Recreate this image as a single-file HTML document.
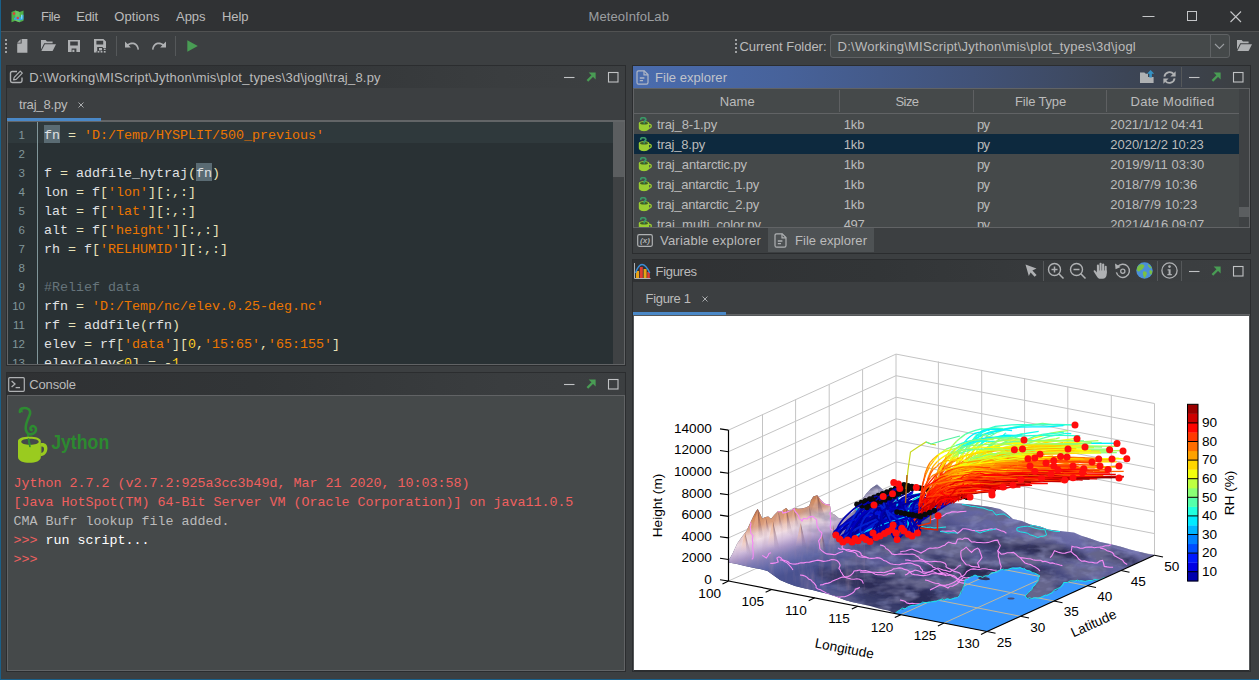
<!DOCTYPE html>
<html><head><meta charset="utf-8"><title>MeteoInfoLab</title>
<style>
*{box-sizing:border-box;margin:0;padding:0}
html,body{width:1259px;height:680px;overflow:hidden;background:#3c3f41}
body{position:relative;font-family:"Liberation Sans","Noto Sans CJK SC",sans-serif;font-size:13px;color:#bbbbbb}
.abs{position:absolute}
.t{position:absolute;white-space:pre;line-height:1}
.mono{font-family:"Liberation Mono","DejaVu Sans Mono",monospace}
.code{position:absolute;white-space:pre;font-family:"Liberation Mono","DejaVu Sans Mono",monospace;font-size:13.33px;line-height:19px;color:#e0e2e4}
.s{color:#ec7600}.c{color:#66747b}.n{color:#ffcd22}.o{color:#e8e2b7}.m{background:#5a6b73;padding:3px 0 0}
.r{color:#f0605f}.w{color:#ffffff}.g{color:#bbbbbb}
</style></head>
<body>
<div class="abs" style="left:1px;top:0px;width:1258px;height:31px;background:#303234;"></div>
<div class="abs" style="left:1px;top:31px;width:1258px;height:1px;background:#515252;"></div>
<div class="abs" style="left:0px;top:0px;width:1px;height:680px;background:#1a5f88;"></div>
<div class="abs" style="left:0px;top:679px;width:1259px;height:1px;background:#1a5f88;"></div>
<svg class="abs" style="left:11px;top:10px;" width="13" height="13" viewBox="0 0 13 13">
<path d="M0.5 2 L4.3 0.6 L8.6 2 L12.5 0.6 L12.5 10.8 L8.6 12.3 L4.3 10.8 L0.5 12.3Z" fill="#4fb04a"/>
<path d="M4.3 0.6 L8.6 2 L8.6 12.3 L4.3 10.8Z" fill="#6cc763"/>
<path d="M3 8 L6 6.5 L9 7.5 L12.5 4.5 L12.5 9.5 L8.6 10.5 L4.3 9.6 L3 10Z" fill="#35a7e0"/>
<circle cx="3" cy="3.6" r="1.3" fill="#e0413a"/><circle cx="6.8" cy="8" r="1.2" fill="#e0413a"/>
<path d="M10 5 L11.3 4.2 L11.3 8.6 L10 9Z" fill="#7fd7f5"/>
</svg>
<span class="t " style="left:41.00px;top:10.00px;font-size:13.00px;letter-spacing:-0.487px;">File</span>
<span class="t " style="left:76.30px;top:10.00px;font-size:13.00px;letter-spacing:-0.175px;">Edit</span>
<span class="t " style="left:114.30px;top:10.00px;font-size:13.00px;letter-spacing:0.057px;">Options</span>
<span class="t " style="left:176.00px;top:10.00px;font-size:13.00px;letter-spacing:-0.033px;">Apps</span>
<span class="t " style="left:222.00px;top:10.00px;font-size:13.00px;letter-spacing:-0.059px;">Help</span>
<span class="t " style="left:588.50px;top:10.00px;font-size:13.00px;color:#9c9fa1;letter-spacing:0.083px;">MeteoInfoLab</span>
<svg class="abs" style="left:1140px;top:8px;" width="110" height="18" viewBox="0 0 110 18">
<path d="M2.5 8.5H14.5" stroke="#c4c6c8" stroke-width="1" fill="none"/>
<rect x="47.5" y="3.5" width="9" height="9" stroke="#c4c6c8" stroke-width="1" fill="none"/>
<path d="M90.5 3.5L101 14M101 3.5L90.500 14" stroke="#c4c6c8" stroke-width="1.1" fill="none"/>
</svg>
<svg class="abs" style="left:5px;top:39px;" width="2" height="14" viewBox="0 0 2 14"><rect x="0" y="0" width="2" height="2" fill="#a0a2a4"/><rect x="0" y="4" width="2" height="2" fill="#a0a2a4"/><rect x="0" y="8" width="2" height="2" fill="#a0a2a4"/><rect x="0" y="12" width="2" height="2" fill="#a0a2a4"/></svg>
<svg class="abs" style="left:17px;top:39px;" width="11" height="14" viewBox="0 0 11 14"><path d="M4.6 0H10.4V13.8H0.2V4.6H4.6Z" fill="#afb1b3"/><path d="M0.2 3.7L3.7 0.2V3.7Z" fill="#afb1b3"/></svg>
<svg class="abs" style="left:41px;top:40px;" width="15" height="11" viewBox="0 0 15 11"><path d="M0 0H4.6L6 1.4H11.6V3.2H3.2L0 9.4Z" fill="#afb1b3"/><path d="M3.8 4.2H15L11.6 11H0.4Z" fill="#afb1b3"/></svg>
<svg class="abs" style="left:68px;top:40px;" width="12" height="12" viewBox="0 0 12 12"><path fill-rule="evenodd" d="M0 0H12V12H0ZM2.2 1.6V5.6H9.8V1.6ZM3.6 8.6V12H8.4V8.6Z" fill="#afb1b3"/><rect x="4.4" y="9.8" width="2" height="2.2" fill="#afb1b3"/></svg>
<svg class="abs" style="left:94px;top:39px;" width="12" height="14" viewBox="0 0 12 14"><path fill-rule="evenodd" d="M0 0H9.4L12 2.6V9H8.8V8H3.2V12H2.6V13.6H0ZM2.4 1.8V5.4H9.2V1.8Z" fill="#afb1b3"/><rect x="5" y="9" width="3" height="2.4" fill="#afb1b3"/><rect x="3.6" y="12" width="1.8" height="1.6" fill="#afb1b3"/><rect x="6.6" y="12" width="1.8" height="1.6" fill="#afb1b3"/><rect x="9.8" y="12" width="1.8" height="1.6" fill="#afb1b3"/><rect x="9.8" y="9.6" width="1.8" height="1.4" fill="#afb1b3"/></svg>
<div class="abs" style="left:116px;top:36px;width:1px;height:20px;background:#55585a;"></div>
<svg class="abs" style="left:125px;top:41px;" width="14" height="10" viewBox="0 0 14 10"><path d="M0 0.6V6.4H5.8L3.7 4.3C5.6 2.9 8.6 2.6 10.6 4.4C11.8 5.5 12.3 7 12.5 8.8L14 8.4C13.7 6.1 12.9 4.3 11.5 3.1C9 0.9 5.1 1.2 2.5 3.1Z" fill="#afb1b3"/></svg>
<svg class="abs" style="left:152px;top:41px;" width="14" height="10" viewBox="0 0 14 10"><g transform="translate(14,0) scale(-1,1)"><path d="M0 0.6V6.4H5.8L3.7 4.3C5.6 2.9 8.6 2.6 10.6 4.4C11.8 5.5 12.3 7 12.5 8.8L14 8.4C13.7 6.1 12.9 4.3 11.5 3.1C9 0.9 5.1 1.2 2.5 3.1Z" fill="#afb1b3"/></g></svg>
<div class="abs" style="left:175px;top:36px;width:1px;height:20px;background:#55585a;"></div>
<svg class="abs" style="left:187px;top:40px;" width="11" height="12" viewBox="0 0 11 12"><path d="M0.3 0.2L10.8 6L0.3 11.8Z" fill="#499c54"/></svg>
<svg class="abs" style="left:735px;top:39px;" width="2" height="14" viewBox="0 0 2 14"><rect x="0" y="0" width="2" height="2" fill="#a0a2a4"/><rect x="0" y="4" width="2" height="2" fill="#a0a2a4"/><rect x="0" y="8" width="2" height="2" fill="#a0a2a4"/><rect x="0" y="12" width="2" height="2" fill="#a0a2a4"/></svg>
<span class="t " style="left:739.50px;top:40.00px;font-size:13.00px;letter-spacing:-0.028px;">Current Folder:</span>
<div class="abs" style="left:830px;top:34px;width:400px;height:24px;background:#45494a;border:1px solid #5f6264;border-radius:3px"></div>
<div class="abs" style="left:1210px;top:35px;width:1px;height:22px;background:#5f6264;"></div>
<span class="t " style="left:837.50px;top:40.00px;font-size:13.00px;letter-spacing:0.258px;">D:\Working\MIScript\Jython\mis\plot_types\3d\jogl</span>
<svg class="abs" style="left:1214px;top:43px;" width="11" height="7" viewBox="0 0 11 7"><path d="M1 1L5.5 5.5L10 1" stroke="#9a9da1" stroke-width="1.1" fill="none"/></svg>
<svg class="abs" style="left:1237px;top:40px;" width="15" height="11" viewBox="0 0 15 11"><path d="M0 0H4.6L6 1.4H11.6V3.2H3.2L0 9.4Z" fill="#afb1b3"/><path d="M3.8 4.2H15L11.6 11H0.4Z" fill="#afb1b3"/></svg>
<div class="abs" style="left:6px;top:65px;width:620px;height:301px;background:#3c3f41;border:1px solid #2b2d2f"></div>
<div class="abs" style="left:7px;top:66px;width:618px;height:22px;background:linear-gradient(90deg,#2f3133 0%,#323537 40%,#3a3d3f 80%,#3c3f41 100%)"></div>
<svg class="abs" style="left:9px;top:69px;" width="15" height="15" viewBox="0 0 15 15">
<path d="M8 2.5H3.2Q1.5 2.5 1.5 4.2V11.8Q1.5 13.5 3.2 13.5H11.3Q13 13.5 13 11.8V8.5" stroke="#afb1b3" stroke-width="1.4" fill="none"/>
<path d="M4.6 10.9L5.2 8.3L11.3 2.2L13.3 4.2L7.2 10.3Z" stroke="#afb1b3" stroke-width="1.2" fill="none" stroke-linejoin="round"/>
</svg>
<span class="t " style="left:29.30px;top:71.00px;font-size:13.00px;letter-spacing:0.206px;">D:\Working\MIScript\Jython\mis\plot_types\3d\jogl\traj_8.py</span>
<svg class="abs" style="left:564px;top:70px;" width="56" height="14" viewBox="0 0 56 14">
<path d="M0 7.5H10.5" stroke="#c0c2c4" stroke-width="1.1" fill="none"/>
<path d="M23.4 10.9L29.6 4.7" stroke="#499c54" stroke-width="2.3" fill="none"/><path d="M24.6 2.6H31.6V9.6Z" fill="#499c54"/>
<rect x="44.5" y="2.5" width="9.5" height="9.5" stroke="#c0c2c4" stroke-width="1.1" fill="none"/>
</svg>
<span class="t " style="left:19.00px;top:98.00px;font-size:13.00px;letter-spacing:-0.173px;">traj_8.py</span>
<svg class="abs" style="left:77px;top:101px;" width="8" height="8" viewBox="0 0 8 8"><path d="M1.5 1.5L6.5 6.5M6.5 1.5L1.5 6.5" stroke="#a9abad" stroke-width="1" fill="none"/></svg>
<div class="abs" style="left:7px;top:120px;width:618px;height:2px;background:#626567;"></div>
<div class="abs" style="left:7px;top:118px;width:94px;height:3px;background:#4a88c7;"></div>
<div class="abs" style="left:7px;top:122px;width:618px;height:243px;background:#293134;border:1px solid #616365;border-top:none"></div>
<div class="abs" style="left:8px;top:122px;width:605px;height:20.5px;background:#2f393c;"></div>
<div class="abs" style="left:37px;top:122px;width:1px;height:242px;background:#81969a;"></div>
<div class="abs" style="left:613px;top:122px;width:11px;height:242px;background:#3f4244;"></div>
<div class="abs" style="left:613px;top:122px;width:11px;height:55px;background:#5b5e60;"></div>
<div class="abs" style="left:8px;top:122px;width:605px;height:242px;overflow:hidden">
<div class="code" style="left:36px;top:3.6px"><span class="m">fn</span> <span class="o">=</span> <span class="s">'D:/Temp/HYSPLIT/500_previous'</span>

f <span class="o">=</span> addfile_hytraj<span class="o">(</span><span class="m">fn</span><span class="o">)</span>
lon <span class="o">=</span> f<span class="o">[</span><span class="s">'lon'</span><span class="o">][:,:]</span>
lat <span class="o">=</span> f<span class="o">[</span><span class="s">'lat'</span><span class="o">][:,:]</span>
alt <span class="o">=</span> f<span class="o">[</span><span class="s">'height'</span><span class="o">][:,:]</span>
rh <span class="o">=</span> f<span class="o">[</span><span class="s">'RELHUMID'</span><span class="o">][:,:]</span>

<span class="c">#Relief data</span>
rfn <span class="o">=</span> <span class="s">'D:/Temp/nc/elev.0.25-deg.nc'</span>
rf <span class="o">=</span> addfile<span class="o">(</span>rfn<span class="o">)</span>
elev <span class="o">=</span> rf<span class="o">[</span><span class="s">'data'</span><span class="o">][</span><span class="n">0</span><span class="o">,</span><span class="s">'15:65'</span><span class="o">,</span><span class="s">'65:155'</span><span class="o">]</span>
elev<span class="o">[</span>elev<span class="o">&lt;</span><span class="n">0</span><span class="o">]</span> <span class="o">=</span> <span class="o">-</span><span class="n">1</span></div>
<div class="code" style="left:0;top:3.5px;width:17px;text-align:right;font-family:'Liberation Sans',sans-serif;font-size:11.5px;color:#81969a">1
2
3
4
5
6
7
8
9
10
11
12
13</div>
</div>
<div class="abs" style="left:6px;top:372px;width:620px;height:300px;background:#3c3f41;border:1px solid #2b2d2f"></div>
<div class="abs" style="left:7px;top:373px;width:618px;height:22px;background:linear-gradient(90deg,#2f3133 0%,#323537 40%,#3a3d3f 80%,#3c3f41 100%)"></div>
<svg class="abs" style="left:8px;top:376.5px;" width="17" height="15" viewBox="0 0 17 15">
<rect x="0.7" y="0.7" width="15.6" height="13.6" rx="1" stroke="#afb1b3" stroke-width="1.2" fill="none"/>
<path d="M3.6 4L7 7L3.6 10" stroke="#afb1b3" stroke-width="1.3" fill="none"/><path d="M7.6 10.6H12" stroke="#afb1b3" stroke-width="1.3" fill="none"/>
</svg>
<span class="t " style="left:29.30px;top:377.90px;font-size:13.00px;letter-spacing:-0.171px;">Console</span>
<svg class="abs" style="left:564px;top:377px;" width="56" height="14" viewBox="0 0 56 14">
<path d="M0 7.5H10.5" stroke="#c0c2c4" stroke-width="1.1" fill="none"/>
<path d="M23.4 10.9L29.6 4.7" stroke="#499c54" stroke-width="2.3" fill="none"/><path d="M24.6 2.6H31.6V9.6Z" fill="#499c54"/>
<rect x="44.5" y="2.5" width="9.5" height="9.5" stroke="#c0c2c4" stroke-width="1.1" fill="none"/>
</svg>
<div class="abs" style="left:7px;top:395px;width:618px;height:276px;background:#45494a;border:1px solid #616365"></div>
<svg class="abs" style="left:14px;top:403px;" width="100" height="62" viewBox="0 0 100 62">
<path d="M5.9 8.9C5.7 5.6 9.3 4.4 12.6 5.3C16.6 6.4 16.8 9.6 15.3 12.8C13.6 16.6 11.5 21 11.7 25.4C11.9 29 13.6 31.6 16.6 31.4C20.200 31.100 22.600 28.500 21.900 25.500C21.300 23 18.600 22.300 17.100 23.800C15.900 25 16.400 26.700 17.600 27.100" stroke="#2e8b32" stroke-width="2.6" fill="none" stroke-linecap="round"/>
<path d="M5.2 8.6L8.4 6.2L8.8 9.4Z" fill="#2e8b32"/>
<path d="M13.900 30.500C13.700 34.500 15.300 37.500 15.900 43.500" stroke="#2e8b32" stroke-width="1.900" fill="none" stroke-linecap="round"/>
<path fill-rule="evenodd" d="M4 38C4 35.200 9 33.700 15.400 33.700C21.800 33.700 26.800 35.200 26.800 38V54C26.800 58 21.500 59.800 15.400 59.800C9.300 59.800 4 58 4 54ZM7.300 38.700C7.300 40.600 11 41.700 16 41.700C21 41.700 24.700 40.600 24.700 38.700C24.700 36.900 21 35.800 16 35.800C11 35.800 7.300 36.900 7.300 38.700Z" fill="#9acb1f"/>
<path fill-rule="evenodd" d="M26.500 40.200C30.500 39.200 33.600 41.300 33.400 45.800C33.200 50.300 30.300 53 26.500 53.200ZM27.400 43.600V49.900C29 49.600 29.900 48.200 30 46.200C30.100 44.300 29.200 43.400 27.400 43.600Z" fill="#9acb1f"/>
<path d="M14.600 36C14.900 39 15.600 41 15.900 43.500" stroke="#2e8b32" stroke-width="1.700" fill="none" stroke-linecap="round"/>
<text x="37.2" y="45.8" font-family="Liberation Sans, sans-serif" font-weight="bold" font-size="20.5" fill="#2c8a30" textLength="58" lengthAdjust="spacingAndGlyphs">Jython</text>
</svg>
<div class="abs" style="left:8px;top:396px;width:616px;height:274px;overflow:hidden">
<div class="code" style="left:5.5px;top:77.5px"><span class="r">Jython 2.7.2 (v2.7.2:925a3cc3b49d, Mar 21 2020, 10:03:58)</span>
<span class="r">[Java HotSpot(TM) 64-Bit Server VM (Oracle Corporation)] on java11.0.5</span>
<span class="g">CMA Bufr lookup file added.</span>
<span class="r">&gt;&gt;&gt; </span><span class="w">run script...</span>
<span class="r">&gt;&gt;&gt; </span></div>
</div>
<div class="abs" style="left:632px;top:65px;width:619px;height:189px;background:#3c3f41;border:1px solid #2b2d2f"></div>
<div class="abs" style="left:633px;top:66px;width:617px;height:22px;background:linear-gradient(90deg,#4a6cae 0%,#47629a 25%,#415278 55%,#3c4556 80%,#3c3f41 100%)"></div>
<svg class="abs" style="left:636px;top:70px;" width="13" height="15" viewBox="0 0 13 15"><path d="M2.6 0.8H8.2L12 4.6V12.6Q12 14.2 10.4 14.2H2.6Q1 14.2 1 12.6V2.4Q1 0.8 2.6 0.8Z" stroke="#b0b7c6" stroke-width="1.2" fill="none"/>
<path d="M8 0.8V4.8H12" stroke="#b0b7c6" stroke-width="1.2" fill="none"/><path d="M3.8 8H8.4M3.8 10.6H7" stroke="#b0b7c6" stroke-width="1.3" fill="none"/></svg>
<span class="t " style="left:655.00px;top:71.00px;font-size:13.00px;color:#c0c3ca;letter-spacing:0.036px;">File explorer</span>
<svg class="abs" style="left:1140px;top:70px;" width="15" height="14" viewBox="0 0 15 14"><path d="M0 2.4H4.4L5.8 3.8H8V13H0Z" fill="#afb1b3"/><path d="M8 7H13.6V13H8Z" fill="#afb1b3"/>
<path d="M10.6 0L14.2 3.8H11.9V7.4H9.3V3.8H7Z" fill="#3592c4"/></svg>
<svg class="abs" style="left:1162px;top:70px;" width="15" height="15" viewBox="0 0 15 15"><path d="M2.4 6.6A5.3 5.3 0 0 1 11.6 3.9" stroke="#afb1b3" stroke-width="1.8" fill="none"/><path d="M13.6 1.2V6.4H8.4Z" fill="#afb1b3"/>
<path d="M12.6 8.4A5.3 5.3 0 0 1 3.4 11.1" stroke="#afb1b3" stroke-width="1.8" fill="none"/><path d="M1.4 13.8V8.6H6.6Z" fill="#afb1b3"/></svg>
<div class="abs" style="left:1181px;top:67px;width:1px;height:20px;background:#55585a;"></div>
<svg class="abs" style="left:1189px;top:70px;" width="56" height="14" viewBox="0 0 56 14">
<path d="M0 7.5H10.5" stroke="#c0c2c4" stroke-width="1.1" fill="none"/>
<path d="M23.4 10.9L29.6 4.7" stroke="#499c54" stroke-width="2.3" fill="none"/><path d="M24.6 2.6H31.6V9.6Z" fill="#499c54"/>
<rect x="44.5" y="2.5" width="9.5" height="9.5" stroke="#c0c2c4" stroke-width="1.1" fill="none"/>
</svg>
<div class="abs" style="left:633px;top:88px;width:617px;height:140px;background:#45494a;border:1px solid #616365"></div>
<div class="abs" style="left:634px;top:113px;width:605px;height:1px;background:#616365;"></div>
<div class="abs" style="left:839px;top:90px;width:1px;height:22px;background:#5e6062;"></div>
<div class="abs" style="left:973px;top:90px;width:1px;height:22px;background:#5e6062;"></div>
<div class="abs" style="left:1106px;top:90px;width:1px;height:22px;background:#5e6062;"></div>
<span class="t " style="left:719.80px;top:95.00px;font-size:13.00px;letter-spacing:0.081px;">Name</span>
<span class="t " style="left:895.50px;top:95.00px;font-size:13.00px;letter-spacing:-0.572px;">Size</span>
<span class="t " style="left:1015.00px;top:95.00px;font-size:13.00px;letter-spacing:-0.168px;">File Type</span>
<span class="t " style="left:1130.50px;top:95.00px;font-size:13.00px;letter-spacing:0.292px;">Date Modified</span>
<div class="abs" style="left:1239px;top:89px;width:10px;height:138px;background:#3f4244;"></div>
<div class="abs" style="left:1239px;top:207px;width:10px;height:10px;background:#5b5e60;"></div>
<div class="abs" style="left:634px;top:113px;width:605px;height:114px;overflow:hidden">
<svg class="abs" style="left:3.8px;top:3.5px" width="14" height="15" viewBox="0 0 14 15"><path d="M0.8 6C0.8 4.8 3.4 4.2 6 4.2C8.6 4.2 11.200 4.8 11.200 6V10.800C11.200 13.200 8.600 14.200 6 14.200C3.400 14.200 0.800 13.200 0.800 10.800Z" fill="#9acd32"/>
<path d="M11 6.800C12.900 6.300 14 7.400 13.900 9.100C13.800 10.900 12.500 11.900 11 11.900V10.600C11.900 10.500 12.500 9.900 12.600 9C12.650 8.200 12.100 7.900 11 8.100Z" fill="#9acd32"/>
<ellipse cx="6" cy="6.200" rx="4" ry="1.300" fill="#3f5a28"/>
<path d="M2.800 2.200C2.400 1 4 0.500 5.600 0.700C7.800 1 8.400 2.400 7.200 3.500C6.400 4.200 5.800 4.800 6.200 5.800" stroke="#3a9866" stroke-width="1.700" fill="none" stroke-linecap="round"/></svg>
<span class="t " style="left:23.00px;top:5.00px;font-size:13.00px;letter-spacing:-0.129px;">traj_8-1.py</span>
<span class="t " style="left:209.70px;top:5.00px;font-size:13.00px;letter-spacing:-0.120px;">1kb</span>
<span class="t " style="left:343.00px;top:5.00px;font-size:13.00px;letter-spacing:-0.615px;">py</span>
<span class="t " style="left:476.30px;top:5.00px;font-size:13.00px;letter-spacing:-0.065px;">2021/1/12 04:41</span>
<div class="abs" style="left:0;top:21px;width:605px;height:20px;background:#0d293e"></div>
<svg class="abs" style="left:3.8px;top:23.5px" width="14" height="15" viewBox="0 0 14 15"><path d="M0.8 6C0.8 4.8 3.4 4.2 6 4.2C8.6 4.2 11.200 4.8 11.200 6V10.800C11.200 13.200 8.600 14.200 6 14.200C3.400 14.200 0.800 13.200 0.800 10.800Z" fill="#9acd32"/>
<path d="M11 6.800C12.900 6.300 14 7.400 13.900 9.100C13.800 10.900 12.500 11.900 11 11.900V10.600C11.900 10.500 12.500 9.900 12.600 9C12.650 8.200 12.100 7.900 11 8.100Z" fill="#9acd32"/>
<ellipse cx="6" cy="6.200" rx="4" ry="1.300" fill="#3f5a28"/>
<path d="M2.800 2.200C2.400 1 4 0.500 5.600 0.700C7.800 1 8.400 2.400 7.200 3.500C6.400 4.200 5.800 4.800 6.200 5.800" stroke="#3a9866" stroke-width="1.700" fill="none" stroke-linecap="round"/></svg>
<span class="t " style="left:23.00px;top:25.00px;font-size:13.00px;letter-spacing:-0.207px;">traj_8.py</span>
<span class="t " style="left:209.70px;top:25.00px;font-size:13.00px;letter-spacing:-0.120px;">1kb</span>
<span class="t " style="left:343.00px;top:25.00px;font-size:13.00px;letter-spacing:-0.615px;">py</span>
<span class="t " style="left:476.30px;top:25.00px;font-size:13.00px;letter-spacing:-0.032px;">2020/12/2 10:23</span>
<svg class="abs" style="left:3.8px;top:43.5px" width="14" height="15" viewBox="0 0 14 15"><path d="M0.8 6C0.8 4.8 3.4 4.2 6 4.2C8.6 4.2 11.200 4.8 11.200 6V10.800C11.200 13.200 8.600 14.200 6 14.200C3.400 14.200 0.800 13.200 0.800 10.800Z" fill="#9acd32"/>
<path d="M11 6.800C12.900 6.300 14 7.400 13.900 9.100C13.800 10.900 12.500 11.900 11 11.900V10.600C11.900 10.500 12.500 9.900 12.600 9C12.650 8.200 12.100 7.900 11 8.100Z" fill="#9acd32"/>
<ellipse cx="6" cy="6.200" rx="4" ry="1.300" fill="#3f5a28"/>
<path d="M2.800 2.200C2.400 1 4 0.500 5.600 0.700C7.800 1 8.400 2.400 7.200 3.500C6.400 4.200 5.800 4.800 6.200 5.800" stroke="#3a9866" stroke-width="1.700" fill="none" stroke-linecap="round"/></svg>
<span class="t " style="left:23.00px;top:45.00px;font-size:13.00px;letter-spacing:-0.104px;">traj_antarctic.py</span>
<span class="t " style="left:209.70px;top:45.00px;font-size:13.00px;letter-spacing:-0.120px;">1kb</span>
<span class="t " style="left:343.00px;top:45.00px;font-size:13.00px;letter-spacing:-0.615px;">py</span>
<span class="t " style="left:476.30px;top:45.00px;font-size:13.00px;letter-spacing:0.066px;">2019/9/11 03:30</span>
<svg class="abs" style="left:3.8px;top:63.5px" width="14" height="15" viewBox="0 0 14 15"><path d="M0.8 6C0.8 4.8 3.4 4.2 6 4.2C8.6 4.2 11.200 4.8 11.200 6V10.800C11.200 13.200 8.600 14.200 6 14.200C3.400 14.200 0.800 13.200 0.800 10.800Z" fill="#9acd32"/>
<path d="M11 6.800C12.900 6.300 14 7.400 13.900 9.100C13.800 10.900 12.500 11.900 11 11.900V10.600C11.900 10.500 12.500 9.900 12.600 9C12.650 8.200 12.100 7.900 11 8.100Z" fill="#9acd32"/>
<ellipse cx="6" cy="6.200" rx="4" ry="1.300" fill="#3f5a28"/>
<path d="M2.800 2.200C2.400 1 4 0.500 5.600 0.700C7.800 1 8.400 2.400 7.200 3.500C6.400 4.200 5.800 4.800 6.200 5.800" stroke="#3a9866" stroke-width="1.700" fill="none" stroke-linecap="round"/></svg>
<span class="t " style="left:23.00px;top:65.00px;font-size:13.00px;letter-spacing:-0.222px;">traj_antarctic_1.py</span>
<span class="t " style="left:209.70px;top:65.00px;font-size:13.00px;letter-spacing:-0.120px;">1kb</span>
<span class="t " style="left:343.00px;top:65.00px;font-size:13.00px;letter-spacing:-0.615px;">py</span>
<span class="t " style="left:476.30px;top:65.00px;font-size:13.00px;letter-spacing:0.018px;">2018/7/9 10:36</span>
<svg class="abs" style="left:3.8px;top:83.5px" width="14" height="15" viewBox="0 0 14 15"><path d="M0.8 6C0.8 4.8 3.4 4.2 6 4.2C8.6 4.2 11.200 4.8 11.200 6V10.800C11.200 13.200 8.600 14.200 6 14.200C3.400 14.200 0.800 13.200 0.800 10.800Z" fill="#9acd32"/>
<path d="M11 6.800C12.900 6.300 14 7.400 13.900 9.100C13.800 10.900 12.500 11.900 11 11.900V10.600C11.900 10.500 12.500 9.900 12.600 9C12.650 8.200 12.100 7.900 11 8.100Z" fill="#9acd32"/>
<ellipse cx="6" cy="6.200" rx="4" ry="1.300" fill="#3f5a28"/>
<path d="M2.800 2.200C2.400 1 4 0.500 5.600 0.700C7.800 1 8.400 2.400 7.200 3.500C6.400 4.200 5.800 4.800 6.200 5.800" stroke="#3a9866" stroke-width="1.700" fill="none" stroke-linecap="round"/></svg>
<span class="t " style="left:23.00px;top:85.00px;font-size:13.00px;letter-spacing:-0.222px;">traj_antarctic_2.py</span>
<span class="t " style="left:209.70px;top:85.00px;font-size:13.00px;letter-spacing:-0.120px;">1kb</span>
<span class="t " style="left:343.00px;top:85.00px;font-size:13.00px;letter-spacing:-0.615px;">py</span>
<span class="t " style="left:476.30px;top:85.00px;font-size:13.00px;letter-spacing:0.018px;">2018/7/9 10:23</span>
<svg class="abs" style="left:3.8px;top:103.5px" width="14" height="15" viewBox="0 0 14 15"><path d="M0.8 6C0.8 4.8 3.4 4.2 6 4.2C8.6 4.2 11.200 4.8 11.200 6V10.800C11.200 13.200 8.600 14.200 6 14.200C3.400 14.200 0.800 13.200 0.800 10.800Z" fill="#9acd32"/>
<path d="M11 6.800C12.900 6.300 14 7.400 13.900 9.100C13.800 10.900 12.500 11.900 11 11.900V10.600C11.900 10.500 12.500 9.900 12.600 9C12.650 8.200 12.100 7.900 11 8.100Z" fill="#9acd32"/>
<ellipse cx="6" cy="6.200" rx="4" ry="1.300" fill="#3f5a28"/>
<path d="M2.800 2.200C2.400 1 4 0.500 5.600 0.700C7.800 1 8.400 2.400 7.200 3.500C6.400 4.200 5.800 4.800 6.200 5.800" stroke="#3a9866" stroke-width="1.700" fill="none" stroke-linecap="round"/></svg>
<span class="t " style="left:23.00px;top:105.00px;font-size:13.00px;letter-spacing:-0.040px;">traj_multi_color.py</span>
<span class="t " style="left:209.70px;top:105.00px;font-size:13.00px;letter-spacing:-0.363px;">497</span>
<span class="t " style="left:343.00px;top:105.00px;font-size:13.00px;letter-spacing:-0.615px;">py</span>
<span class="t " style="left:476.30px;top:105.00px;font-size:13.00px;letter-spacing:0.002px;">2021/4/16 09:07</span>
</div>
<div class="abs" style="left:768px;top:228px;width:106px;height:24px;background:#4e5254;"></div>
<svg class="abs" style="left:637px;top:234px;" width="16" height="13" viewBox="0 0 16 13"><rect x="0.7" y="0.7" width="14.6" height="11.6" rx="1.5" stroke="#afb1b3" stroke-width="1.2" fill="none"/>
<text x="8" y="9.3" font-family="Liberation Sans, sans-serif" font-size="8" font-style="italic" font-weight="bold" fill="#afb1b3" text-anchor="middle">(x)</text></svg>
<span class="t " style="left:660.00px;top:234.00px;font-size:13.00px;letter-spacing:0.217px;">Variable explorer</span>
<svg class="abs" style="left:774px;top:233px;" width="13" height="15" viewBox="0 0 13 15"><path d="M2.6 0.8H8.2L12 4.6V12.6Q12 14.2 10.4 14.2H2.6Q1 14.2 1 12.6V2.4Q1 0.8 2.6 0.8Z" stroke="#afb1b3" stroke-width="1.2" fill="none"/>
<path d="M8 0.8V4.8H12" stroke="#afb1b3" stroke-width="1.2" fill="none"/><path d="M3.8 8H8.4M3.8 10.6H7" stroke="#afb1b3" stroke-width="1.3" fill="none"/></svg>
<span class="t " style="left:795.00px;top:234.00px;font-size:13.00px;letter-spacing:0.036px;">File explorer</span>
<div class="abs" style="left:632px;top:259px;width:619px;height:413px;background:#3c3f41;border:1px solid #2b2d2f"></div>
<div class="abs" style="left:633px;top:260px;width:617px;height:22px;background:linear-gradient(90deg,#2f3133 0%,#323537 40%,#3a3d3f 80%,#3c3f41 100%)"></div>
<svg class="abs" style="left:634px;top:263px;" width="17" height="16" viewBox="0 0 17 16"><path d="M0.5 0V15.5H16.5" stroke="#afb1b3" stroke-width="1" fill="none"/>
<rect x="2" y="8" width="3" height="7" fill="#e8a317"/><rect x="5.800" y="4" width="3" height="11" fill="#e03c31"/><rect x="9.600" y="6" width="3" height="9" fill="#e8a317"/><rect x="13.200" y="9" width="2.600" height="6" fill="#e03c31"/>
<path d="M1.500 10C4 3 6 1.500 8 1.500C10.500 1.500 13 4 15.800 10" stroke="#3b8ed8" stroke-width="1.400" fill="none"/></svg>
<span class="t " style="left:655.50px;top:265.00px;font-size:13.00px;letter-spacing:-0.293px;">Figures</span>
<svg class="abs" style="left:1025px;top:264px;" width="13" height="14" viewBox="0 0 13 14"><path d="M0.5 0.5L11.5 4.6L7.4 6.6L11.6 11L9.6 12.8L5.6 8.400L3.800 12Z" fill="#afb1b3"/></svg>
<div class="abs" style="left:1043px;top:261px;width:1px;height:20px;background:#55585a;"></div>
<svg class="abs" style="left:1047px;top:262px;" width="18" height="18" viewBox="0 0 18 18"><circle cx="7.500" cy="7.500" r="6" stroke="#afb1b3" stroke-width="1.400" fill="none"/><path d="M11.800 11.800L16.500 16.500" stroke="#afb1b3" stroke-width="1.600"/>
<path d="M4.500 7.500H10.500M7.500 4.500V10.500" stroke="#afb1b3" stroke-width="1.500"/></svg>
<svg class="abs" style="left:1069px;top:262px;" width="18" height="18" viewBox="0 0 18 18"><circle cx="7.500" cy="7.500" r="6" stroke="#afb1b3" stroke-width="1.400" fill="none"/><path d="M11.800 11.800L16.500 16.500" stroke="#afb1b3" stroke-width="1.600"/>
<path d="M4.500 7.500H10.500" stroke="#afb1b3" stroke-width="1.500"/></svg>
<svg class="abs" style="left:1093px;top:262px;" width="15" height="18" viewBox="0 0 15 18"><g fill="#afb1b3"><rect x="3.9" y="2.600" width="2.100" height="9" rx="1"/><rect x="6.500" y="0.800" width="2.100" height="10" rx="1"/><rect x="9.100" y="1.600" width="2.100" height="10" rx="1"/><rect x="11.700" y="3.800" width="2" height="8" rx="1"/>
<path d="M3.900 8.500H13.700V12C13.700 14.800 12 16.800 9.600 16.800H7.600C5.800 16.800 4.800 15.800 3.900 14.400L0.700 9.600C0.200 8.700 1.300 7.700 2.200 8.600L3.900 10.600Z"/></g></svg>
<svg class="abs" style="left:1114px;top:262px;" width="18" height="18" viewBox="0 0 18 18"><path d="M3.300 5.200A6.600 6.600 0 1 1 2.400 10.400" stroke="#afb1b3" stroke-width="1.400" fill="none"/><path d="M1 1.600L1.600 7.200L6.600 5Z" fill="#afb1b3"/>
<circle cx="8.800" cy="9.200" r="2.100" stroke="#afb1b3" stroke-width="1.300" fill="none"/></svg>
<svg class="abs" style="left:1136px;top:262px;" width="17" height="17" viewBox="0 0 17 17"><circle cx="8.500" cy="8.500" r="8.200" fill="#4a90d9"/>
<path d="M3 3.200C5 1.800 7 2 8.200 3.200C9 4.400 7.600 5.400 6.800 6.800C6 8.200 4.400 8 3.400 9.200C2.600 10.200 1.600 9.200 0.800 8C0.800 6 1.600 4.400 3 3.200Z" fill="#7bc043"/>
<path d="M7.500 9.500C9 9 10.600 9.800 10.800 11.200C11 12.800 9.600 14.600 8.600 16.200C7.800 15 7.200 13.600 7 12.200C6.800 11 6.800 10 7.500 9.500Z" fill="#7bc043"/>
<path d="M12 2.200C13.600 3 15 4.400 15.800 6C15 6.600 14 6.400 13.400 5.600C12.800 4.600 11.600 3.600 12 2.200Z" fill="#7bc043"/><path d="M13.500 8.500C14.500 8 15.600 8.600 16.400 9.600C16.200 11 15.800 12 15 13C14 12 13 10 13.500 8.500Z" fill="#7bc043"/></svg>
<div class="abs" style="left:1157px;top:261px;width:1px;height:20px;background:#55585a;"></div>
<svg class="abs" style="left:1161px;top:262px;" width="18" height="18" viewBox="0 0 18 18"><circle cx="8.500" cy="8.500" r="7.600" stroke="#afb1b3" stroke-width="1.300" fill="none"/>
<circle cx="8.500" cy="4.600" r="1.300" fill="#afb1b3"/><path d="M6.600 7.200H9.600V12H10.800V13.200H6.400V12H7.600V8.400H6.600Z" fill="#afb1b3"/></svg>
<div class="abs" style="left:1181px;top:261px;width:1px;height:20px;background:#55585a;"></div>
<svg class="abs" style="left:1189px;top:264px;" width="56" height="14" viewBox="0 0 56 14">
<path d="M0 7.5H10.5" stroke="#c0c2c4" stroke-width="1.1" fill="none"/>
<path d="M23.4 10.9L29.6 4.7" stroke="#499c54" stroke-width="2.3" fill="none"/><path d="M24.6 2.6H31.6V9.6Z" fill="#499c54"/>
<rect x="44.5" y="2.5" width="9.5" height="9.5" stroke="#c0c2c4" stroke-width="1.1" fill="none"/>
</svg>
<span class="t " style="left:645.50px;top:292.00px;font-size:13.00px;letter-spacing:-0.299px;">Figure 1</span>
<svg class="abs" style="left:701px;top:295px;" width="8" height="8" viewBox="0 0 8 8"><path d="M1.500 1.500L6.500 6.500M6.500 1.500L1.500 6.500" stroke="#a9abad" stroke-width="1" fill="none"/></svg>
<div class="abs" style="left:633px;top:314px;width:617px;height:1px;background:#616365;"></div>
<div class="abs" style="left:633px;top:312px;width:93px;height:3px;background:#4a88c7;"></div>
<div class="abs" style="left:633px;top:315px;width:617px;height:356px;background:#ffffff;border:1px solid #55585a;border-bottom-color:#2b2d2f"></div>
<svg class="abs" style="left:634px;top:316px" width="615" height="354" viewBox="634 316 615 354"><path d="M728.5 581.0L896.0 505.0" stroke="#c4c4c4" stroke-width="1" fill="none" />
<path d="M728.5 559.5L896.0 483.4" stroke="#c4c4c4" stroke-width="1" fill="none" />
<path d="M728.5 537.9L896.0 461.9" stroke="#c4c4c4" stroke-width="1" fill="none" />
<path d="M728.5 516.4L896.0 440.4" stroke="#c4c4c4" stroke-width="1" fill="none" />
<path d="M728.5 494.8L896.0 418.8" stroke="#c4c4c4" stroke-width="1" fill="none" />
<path d="M728.5 473.2L896.0 397.2" stroke="#c4c4c4" stroke-width="1" fill="none" />
<path d="M728.5 451.7L896.0 375.7" stroke="#c4c4c4" stroke-width="1" fill="none" />
<path d="M728.5 430.1L896.0 354.1" stroke="#c4c4c4" stroke-width="1" fill="none" />
<path d="M762.5 565.6L762.5 414.7" stroke="#c4c4c4" stroke-width="1" fill="none" />
<path d="M795.6 550.6L795.6 399.7" stroke="#c4c4c4" stroke-width="1" fill="none" />
<path d="M829.2 535.3L829.2 384.5" stroke="#c4c4c4" stroke-width="1" fill="none" />
<path d="M862.6 520.2L862.6 369.3" stroke="#c4c4c4" stroke-width="1" fill="none" />
<path d="M896.0 505.0L896.0 354.1" stroke="#c4c4c4" stroke-width="1" fill="none" />
<path d="M896.0 505.0L1154.5 555.3" stroke="#c4c4c4" stroke-width="1" fill="none" />
<path d="M896.0 483.4L1154.5 533.6" stroke="#c4c4c4" stroke-width="1" fill="none" />
<path d="M896.0 461.9L1154.5 511.9" stroke="#c4c4c4" stroke-width="1" fill="none" />
<path d="M896.0 440.4L1154.5 490.3" stroke="#c4c4c4" stroke-width="1" fill="none" />
<path d="M896.0 418.8L1154.5 468.6" stroke="#c4c4c4" stroke-width="1" fill="none" />
<path d="M896.0 397.2L1154.5 446.9" stroke="#c4c4c4" stroke-width="1" fill="none" />
<path d="M896.0 375.7L1154.5 425.2" stroke="#c4c4c4" stroke-width="1" fill="none" />
<path d="M896.0 354.1L1154.5 403.5" stroke="#c4c4c4" stroke-width="1" fill="none" />
<path d="M938.4 513.3L938.4 361.5" stroke="#c4c4c4" stroke-width="1" fill="none" />
<path d="M981.7 521.7L981.7 369.9" stroke="#c4c4c4" stroke-width="1" fill="none" />
<path d="M1024.6 530.0L1024.6 378.3" stroke="#c4c4c4" stroke-width="1" fill="none" />
<path d="M1067.8 538.4L1067.8 386.7" stroke="#c4c4c4" stroke-width="1" fill="none" />
<path d="M1111.3 546.9L1111.3 395.1" stroke="#c4c4c4" stroke-width="1" fill="none" />
<path d="M1154.5 555.3L1154.5 403.5" stroke="#c4c4c4" stroke-width="1" fill="none" />
<defs>
<linearGradient id="gm" gradientUnits="userSpaceOnUse" x1="757" y1="508" x2="778" y2="577">
<stop offset="0" stop-color="#6a3a2c"/><stop offset="0.04" stop-color="#b8683e"/><stop offset="0.12" stop-color="#d68c5c"/><stop offset="0.24" stop-color="#dca080"/><stop offset="0.33" stop-color="#ecd0cc"/><stop offset="0.42" stop-color="#f0dee6"/><stop offset="0.52" stop-color="#d2bedc"/><stop offset="0.62" stop-color="#a896c6"/><stop offset="0.72" stop-color="#807cb4"/><stop offset="0.85" stop-color="#5e66a6"/><stop offset="1" stop-color="#4a5290"/></linearGradient>
<linearGradient id="gfade" gradientUnits="userSpaceOnUse" x1="830" y1="0" x2="866" y2="0"><stop offset="0" stop-color="#fff"/><stop offset="0.5" stop-color="#bbb"/><stop offset="1" stop-color="#000"/></linearGradient>
<linearGradient id="gbody" gradientUnits="userSpaceOnUse" x1="1010" y1="508" x2="972" y2="612"><stop offset="0" stop-color="#7474ae"/><stop offset="0.2" stop-color="#60629e"/><stop offset="0.42" stop-color="#45487c"/><stop offset="0.6" stop-color="#30325c"/><stop offset="0.78" stop-color="#444880"/><stop offset="1" stop-color="#383c6a"/></linearGradient>
<mask id="mfade" maskUnits="userSpaceOnUse" x="700" y="450" width="300" height="200"><rect x="700" y="450" width="300" height="200" fill="url(#gfade)"/></mask>
<clipPath id="cter"><path d="M728.7 560.5L732.6 553.4L737.2 543.5L741.8 536.9L746.5 531.0L749.8 523.7L753.0 517.0L755.7 511.8L757.7 509.1L759.7 513.0L762.3 518.4L765.6 517.0L768.3 516.4L771.0 519.0L774.2 515.0L778.2 511.1L781.5 511.8L783.5 509.8L786.2 508.0L788.8 511.0L791.5 510.2L794.1 508.0L798.0 508.8L802.0 508.4L806.0 507.4L809.3 505.8L811.3 499.8L813.3 496.5L817.3 495.2L820.6 499.8L824.5 503.8L829.8 504.5L831.2 513.0L835.1 515.0L839.1 518.4L843.0 517.7L847.0 515.0L852.3 512.4L857.0 508.0L861.0 501.0L866.0 494.0L871.0 488.5L877.0 484.5L882.0 489.0L888.0 494.0L894.0 499.0L900.0 501.0L920.0 500.0L945.0 502.0L952.0 503.0L960.0 503.5L975.0 505.0L990.0 507.0L1000.0 509.0L1006.0 513.0L1013.0 519.0L1022.0 521.0L1030.0 524.5L1040.0 526.5L1048.0 529.5L1060.0 531.0L1074.0 532.5L1082.0 536.0L1090.0 538.5L1100.0 542.0L1110.0 544.0L1120.0 546.5L1130.0 549.5L1140.0 552.0L1148.0 554.0L1155.0 555.0L1154.5 555.3L987.0 631.5L895.0 613.6L888.0 610.5L880.0 608.7L870.0 606.0L860.0 603.7L852.0 602.0L845.0 600.0L836.0 596.5L827.5 593.7L820.0 592.0L812.5 590.0L803.0 588.0L795.0 586.0L787.0 583.0L780.0 580.0L773.0 575.0L767.5 571.0L760.0 569.0L752.0 567.5L745.0 566.0L737.0 564.0L728.7 562.5Z"/></clipPath>
<filter id="bl" x="-30%" y="-30%" width="160%" height="160%"><feGaussianBlur stdDeviation="3"/></filter>
<filter id="bl2" x="-30%" y="-30%" width="160%" height="160%"><feGaussianBlur stdDeviation="1.5"/></filter>
</defs>
<path d="M728.7 560.5L732.6 553.4L737.2 543.5L741.8 536.9L746.5 531.0L749.8 523.7L753.0 517.0L755.7 511.8L757.7 509.1L759.7 513.0L762.3 518.4L765.6 517.0L768.3 516.4L771.0 519.0L774.2 515.0L778.2 511.1L781.5 511.8L783.5 509.8L786.2 508.0L788.8 511.0L791.5 510.2L794.1 508.0L798.0 508.8L802.0 508.4L806.0 507.4L809.3 505.8L811.3 499.8L813.3 496.5L817.3 495.2L820.6 499.8L824.5 503.8L829.8 504.5L831.2 513.0L835.1 515.0L839.1 518.4L843.0 517.7L847.0 515.0L852.3 512.4L857.0 508.0L861.0 501.0L866.0 494.0L871.0 488.5L877.0 484.5L882.0 489.0L888.0 494.0L894.0 499.0L900.0 501.0L920.0 500.0L945.0 502.0L952.0 503.0L960.0 503.5L975.0 505.0L990.0 507.0L1000.0 509.0L1006.0 513.0L1013.0 519.0L1022.0 521.0L1030.0 524.5L1040.0 526.5L1048.0 529.5L1060.0 531.0L1074.0 532.5L1082.0 536.0L1090.0 538.5L1100.0 542.0L1110.0 544.0L1120.0 546.5L1130.0 549.5L1140.0 552.0L1148.0 554.0L1155.0 555.0L1154.5 555.3L987.0 631.5L895.0 613.6L888.0 610.5L880.0 608.7L870.0 606.0L860.0 603.7L852.0 602.0L845.0 600.0L836.0 596.5L827.5 593.7L820.0 592.0L812.5 590.0L803.0 588.0L795.0 586.0L787.0 583.0L780.0 580.0L773.0 575.0L767.5 571.0L760.0 569.0L752.0 567.5L745.0 566.0L737.0 564.0L728.7 562.5Z" fill="url(#gbody)"/>
<g clip-path="url(#cter)">
<g mask="url(#mfade)"><rect x="700" y="450" width="300" height="200" fill="url(#gm)"/></g>
<ellipse cx="850" cy="580" rx="35" ry="9" fill="#30305a" opacity="0.85" transform="rotate(14 850 580)" filter="url(#bl)"/>
<ellipse cx="900" cy="590" rx="40" ry="10" fill="#2c2c54" opacity="0.85" transform="rotate(12 900 590)" filter="url(#bl)"/>
<ellipse cx="880" cy="560" rx="45" ry="7" fill="#7070aa" opacity="0.6" transform="rotate(10 880 560)" filter="url(#bl)"/>
<ellipse cx="960" cy="572" rx="35" ry="8" fill="#2a2a4e" opacity="0.9" transform="rotate(8 960 572)" filter="url(#bl)"/>
<ellipse cx="935" cy="548" rx="50" ry="6" fill="#6c6ca6" opacity="0.7" transform="rotate(8 935 548)" filter="url(#bl)"/>
<ellipse cx="1010" cy="545" rx="45" ry="7" fill="#2e2e54" opacity="0.9" transform="rotate(12 1010 545)" filter="url(#bl)"/>
<ellipse cx="1060" cy="552" rx="30" ry="6" fill="#2a2a4c" opacity="0.9" transform="rotate(14 1060 552)" filter="url(#bl)"/>
<ellipse cx="1000" cy="528" rx="50" ry="6" fill="#6a6aa4" opacity="0.7" transform="rotate(12 1000 528)" filter="url(#bl)"/>
<ellipse cx="1085" cy="545" rx="30" ry="5" fill="#6868a2" opacity="0.6" transform="rotate(15 1085 545)" filter="url(#bl)"/>
<ellipse cx="1120" cy="558" rx="22" ry="5" fill="#2c2c50" opacity="0.9" transform="rotate(16 1120 558)" filter="url(#bl)"/>
<ellipse cx="1085" cy="570" rx="20" ry="7" fill="#7a7ab2" opacity="0.85" transform="rotate(10 1085 570)" filter="url(#bl)"/>
<ellipse cx="1045" cy="586" rx="10" ry="7" fill="#7676a6" opacity="0.9" transform="rotate(-30 1045 586)" filter="url(#bl)"/>
<ellipse cx="930" cy="605" rx="30" ry="6" fill="#2c2c52" opacity="0.8" transform="rotate(12 930 605)" filter="url(#bl)"/>
<ellipse cx="985" cy="560" rx="18" ry="4" fill="#7c7cb4" opacity="0.55" transform="rotate(10 985 560)" filter="url(#bl)"/>
<ellipse cx="1040" cy="572" rx="14" ry="4" fill="#2a2a4e" opacity="0.8" transform="rotate(10 1040 572)" filter="url(#bl)"/>
<ellipse cx="870" cy="530" rx="25" ry="6" fill="#8482b4" opacity="0.5" transform="rotate(5 870 530)" filter="url(#bl)"/>
<ellipse cx="1130" cy="546" rx="20" ry="3" fill="#7272aa" opacity="0.6" transform="rotate(16 1130 546)" filter="url(#bl)"/>
<linearGradient id="rl" x1="0" y1="0" x2="0" y2="1"><stop offset="0" stop-color="#f0a878" stop-opacity="0.75"/><stop offset="0.5" stop-color="#f0b898" stop-opacity="0.4"/><stop offset="1" stop-color="#f0c8b8" stop-opacity="0"/></linearGradient><linearGradient id="rd" x1="0" y1="0" x2="0" y2="1"><stop offset="0" stop-color="#5c3028" stop-opacity="0.7"/><stop offset="0.5" stop-color="#7a5060" stop-opacity="0.35"/><stop offset="1" stop-color="#7a6080" stop-opacity="0"/></linearGradient><filter id="bl3" x="-30%" y="-30%" width="160%" height="160%"><feGaussianBlur stdDeviation="0.6"/></filter><g filter="url(#bl3)">
<path d="M757.7 509.1L751.0 536.0L758.7 537.5Z" fill="url(#rl)"/>
<path d="M757.7 509.1L758.7 537.5L764.0 539.0Z" fill="url(#rd)"/>
<path d="M772.9 521.0L767.0 547.0L774.5 548.0Z" fill="url(#rl)"/>
<path d="M772.9 521.0L774.5 548.0L779.5 549.0Z" fill="url(#rd)"/>
<path d="M786.2 508.0L780.0 532.0L787.7 533.5Z" fill="url(#rl)"/>
<path d="M786.2 508.0L787.7 533.5L793.0 535.0Z" fill="url(#rd)"/>
<path d="M800.7 523.0L795.5 546.0L802.2 547.0Z" fill="url(#rl)"/>
<path d="M800.7 523.0L802.2 547.0L806.5 548.0Z" fill="url(#rd)"/>
<path d="M817.3 495.2L809.0 517.0L818.7 518.0Z" fill="url(#rl)"/>
<path d="M817.3 495.2L818.7 518.0L826.0 519.0Z" fill="url(#rd)"/>
<path d="M794.1 508.0L789.5 525.0L795.5 526.0Z" fill="url(#rl)"/>
<path d="M794.1 508.0L795.5 526.0L799.0 527.0Z" fill="url(#rd)"/>
<path d="M765.6 517.0L761.5 532.0L767.0 532.5Z" fill="url(#rl)"/>
<path d="M765.6 517.0L767.0 532.5L770.0 533.0Z" fill="url(#rd)"/>
<path d="M778.2 511.1L774.0 527.0L779.7 528.0Z" fill="url(#rl)"/>
<path d="M778.2 511.1L779.7 528.0L783.0 529.0Z" fill="url(#rd)"/>
<path d="M745.0 533.0L740.0 552.0L746.7 553.0Z" fill="url(#rl)"/>
<path d="M745.0 533.0L746.7 553.0L751.0 554.0Z" fill="url(#rd)"/>
<path d="M809.3 505.8L804.5 522.0L810.0 523.0Z" fill="url(#rl)"/>
<path d="M809.3 505.8L810.0 523.0L813.0 524.0Z" fill="url(#rd)"/>
<path d="M833.0 525.0L828.5 545.0L834.7 546.0Z" fill="url(#rl)"/>
<path d="M833.0 525.0L834.7 546.0L838.5 547.0Z" fill="url(#rd)"/>
<path d="M822.0 534.0L817.5 553.0L823.7 554.0Z" fill="url(#rl)"/>
<path d="M822.0 534.0L823.7 554.0L827.5 555.0Z" fill="url(#rd)"/>
</g>
<path d="M858 508L862 500L866 494L871 488.5L877 484.5L882 489L888 494L894 499L898 504L880 510Z" fill="#d6cee2" opacity="0.9" filter="url(#bl3)"/><path d="M877 484.5L882 489L888 494L894 499L886 503L879 496Z" fill="#9a94b8" opacity="0.7"/>
<filter id="nz" x="0" y="0" width="100%" height="100%"><feTurbulence type="fractalNoise" baseFrequency="0.035 0.09" numOctaves="3" seed="4" result="t"/><feColorMatrix type="matrix" values="0 0 0 0 0.13  0 0 0 0 0.13  0 0 0 0 0.26  3.2 0 0 0 -1.25"/></filter>
<filter id="nz2" x="0" y="0" width="100%" height="100%"><feTurbulence type="fractalNoise" baseFrequency="0.06 0.12" numOctaves="3" seed="9"/><feColorMatrix type="matrix" values="0 0 0 0 0.42  0 0 0 0 0.45  0 0 0 0 0.78  0 2.4 0 0 -1.2"/></filter>
<linearGradient id="gnf" gradientUnits="userSpaceOnUse" x1="790" y1="0" x2="880" y2="0"><stop offset="0" stop-color="#000"/><stop offset="1" stop-color="#fff"/></linearGradient><mask id="mnz" maskUnits="userSpaceOnUse" x="780" y="480" width="400" height="160"><rect x="780" y="480" width="400" height="160" fill="url(#gnf)"/></mask><g mask="url(#mnz)"><rect x="780" y="480" width="390" height="160" filter="url(#nz)"/><rect x="780" y="480" width="390" height="160" filter="url(#nz2)" opacity="0.45"/></g>
<filter id="nz3" x="0" y="0" width="100%" height="100%"><feTurbulence type="fractalNoise" baseFrequency="0.16 0.03" numOctaves="3" seed="2"/><feColorMatrix type="matrix" values="0 0 0 0 0.45  0 0 0 0 0.3  0 0 0 0 0.4  2.2 0 0 0 -1.0"/></filter>
<rect x="725" y="490" width="140" height="100" filter="url(#nz3)" opacity="0.3"/>
<path d="M750.4 521.0L750.9 524.5L750.2 526.8L750.6 529.6L750.7 533.0L753.0 535.6L752.4 538.5L752.5 541.1L753.1 543.3L752.4 546.0L752.9 548.5L753.1 551.6L753.2 555.0L753.0 558.0L751.8 559.4" stroke="#f58af5" stroke-width="1.1" fill="none"/>
<path d="M778.2 511.8L782.2 511.1L782.9 513.1L786.0 512.4L789.2 511.1L791.5 509.8L794.1 508.5L795.0 511.4L796.7 513.1L798.6 515.8L799.4 518.4L802.0 521.0L803.4 518.4L807.3 519.0L808.7 517.1L812.6 516.4L814.6 518.1L816.6 519.7L816.9 523.4L817.3 526.3L819.2 530.3L821.9 532.9L821.2 536.9L818.6 540.9L819.3 543.7L819.6 546.2L819.9 548.8L821.8 550.6L824.5 552.8L826.8 553.9L829.8 554.1L832.1 554.4L835.1 554.8L839.1 552.8L843.1 551.5" stroke="#f58af5" stroke-width="1.1" fill="none"/>
<path d="M817.9 495.2L819.8 497.4L820.6 499.8L822.8 502.7L825.9 504.5L830.5 505.1L830.9 507.9L831.0 510.6L829.9 513.4L830.6 516.2L830.2 518.9L830.8 520.8L830.6 523.1L830.3 526.6L830.5 529.0L832.5 530.3" stroke="#f58af5" stroke-width="1.1" fill="none"/>
<path d="M762.3 555.4L766.3 558.0L768.2 555.2L769.0 553.4L771.0 552.8" stroke="#f58af5" stroke-width="1.1" fill="none"/>
<path d="M770.3 563.4L772.6 563.4L775.4 562.9L778.2 562.0L776.9 558.0L778.9 556.8L780.8 557.8L782.8 560.3L784.8 561.7L786.9 562.6L788.8 564.7L791.2 567.3L793.0 570.0" stroke="#f58af5" stroke-width="1.1" fill="none"/>
<path d="M940.0 547.2L942.3 545.9L944.8 545.2L946.9 543.2L948.7 542.0L952.2 543.2L955.7 543.7L957.5 539.3L960.2 538.8L962.4 539.5L964.8 538.1L968.0 538.5L971.5 542.0L974.3 541.8L976.8 542.5L980.2 542.5L983.3 542.7L985.5 542.8L988.4 542.4L991.2 541.5L994.8 540.4L997.7 540.2L998.9 543.3L1000.3 545.5L999.1 548.6L997.7 550.7L1001.2 554.2L1004.0 553.9L1007.2 552.8L1010.5 552.8L1013.4 552.4L1015.2 553.7L1018.1 556.4L1020.4 557.7L1022.6 557.9L1025.4 558.3L1028.3 558.8L1030.5 558.8L1032.8 559.8L1035.2 560.1L1037.9 560.3L1040.5 560.3L1042.9 561.6L1044.9 561.3L1047.3 561.9L1050.0 563.1L1052.5 562.9L1055.0 563.7L1057.3 564.2L1059.9 565.0L1062.4 565.6" stroke="#f58af5" stroke-width="1.1" fill="none"/>
<path d="M961.0 550.7L963.6 549.4L966.2 547.2L968.5 549.6L971.5 552.4L974.2 549.8L977.6 548.1L979.4 549.8L980.2 552.4L981.2 554.9L982.0 557.7L980.3 559.9L977.6 563.0L979.3 567.3L976.3 566.9L973.5 566.6L971.5 566.4L969.2 565.0L966.2 564.7L964.1 562.2L961.9 559.4L961.1 556.8L960.8 554.0L961.0 550.7" stroke="#f58af5" stroke-width="1.1" fill="none"/>
<path d="M997.7 550.7L998.4 553.3L998.3 556.3L999.4 559.4L1000.0 563.3L1001.2 566.4L1000.3 570.0" stroke="#f58af5" stroke-width="1.1" fill="none"/>
<path d="M1050.1 557.7L1051.8 556.0L1053.6 552.6L1054.5 550.7L1058.9 552.4L1062.4 553.3L1065.2 553.1L1068.0 552.3L1071.1 551.6L1071.7 548.4L1072.0 546.3L1074.2 547.0L1076.7 547.0L1079.9 548.1L1082.9 548.2L1085.7 547.2L1088.8 547.1L1091.7 547.0L1094.2 547.7L1097.3 547.2L1099.6 547.1L1102.4 546.7L1105.3 545.8L1108.8 545.6L1111.3 544.6" stroke="#f58af5" stroke-width="1.1" fill="none"/>
<path d="M1071.1 551.6L1073.6 554.0L1076.4 556.0L1078.7 559.0L1081.6 561.2L1084.4 560.9L1087.1 561.7L1088.9 562.3L1091.7 562.3L1094.4 562.9L1097.3 563.0L1099.7 561.1L1102.6 560.3L1103.5 563.0L1104.3 566.4L1107.2 566.9L1109.7 567.2L1113.1 567.3" stroke="#f58af5" stroke-width="1.1" fill="none"/>
<path d="M940.0 531.5L942.3 531.1L945.2 531.2L948.7 531.0L951.2 531.2L954.0 530.6L957.5 533.2L960.4 531.0L962.7 528.8L965.5 528.8L968.3 529.2L971.8 530.2L975.0 530.6L977.6 530.8L980.6 530.7L983.4 530.1L985.5 529.7L987.6 529.6L991.3 528.9L993.7 529.2L996.0 528.8L998.1 529.5L1001.1 530.8L1004.0 531.5L1006.4 533.2" stroke="#f58af5" stroke-width="1.1" fill="none"/>
<path d="M900.0 552.0L903.0 551.3L905.7 551.0L909.2 549.7L912.0 549.0L915.3 550.6L918.5 551.7L921.0 553.0L922.7 552.0L925.5 550.6L927.2 549.2L930.0 548.0L932.8 548.3L935.4 547.9L937.5 548.0L940.0 547.2" stroke="#f58af5" stroke-width="1.1" fill="none"/>
<path d="M905.0 575.0L907.0 574.2L909.6 572.1L912.5 571.4L915.0 570.0L918.1 570.8L920.0 571.6L922.4 572.8L925.0 574.0L928.1 572.3L930.3 571.8L933.1 570.1L935.0 569.2L938.0 568.0L941.0 569.2L943.3 570.1L945.5 570.4L948.1 571.3L950.0 572.0L952.1 570.3L954.5 569.7L956.5 568.1L958.5 566.1L961.0 565.0" stroke="#f58af5" stroke-width="1.1" fill="none"/>
<path d="M930.0 590.0L932.5 588.7L935.1 587.5L938.0 586.0L940.0 585.0L942.5 585.8L944.9 586.6L948.0 588.0L950.0 586.2L952.6 586.1L955.8 584.6L958.0 583.0L960.0 580.5L963.0 578.0" stroke="#f58af5" stroke-width="1.1" fill="none"/>
<path d="M1020.4 557.7L1022.2 560.1L1025.0 563.0L1028.2 564.0L1030.5 564.5L1033.0 566.0L1035.2 567.1L1038.1 569.0L1040.0 571.0" stroke="#f58af5" stroke-width="1.1" fill="none"/>
<path d="M780.0 560.0L783.0 560.1L785.7 560.8L788.1 561.8L789.6 563.2L792.3 564.0L795.3 564.1L798.1 563.6L800.7 562.8L803.7 562.9L806.5 562.3L809.5 562.1L812.3 561.4L815.0 560.7L817.8 560.1L820.7 560.6L823.3 561.4L826.3 561.0L829.1 560.5L831.5 559.5L834.5 559.7L836.9 560.6L838.6 562.0L839.5 563.6L840.1 565.2L839.6 566.8L838.9 568.4L840.2 569.9L840.6 571.5L841.9 573.0L842.7 574.6L843.9 576.1L845.8 577.4L848.3 578.3L851.0 579.0L854.0 579.3L856.9 578.8L859.7 579.3L861.9 580.4L862.7 582.0L863.4 583.6" stroke="#f58af5" stroke-width="1.1" fill="none"/>
<path d="M838.0 548.0L840.0 549.2L843.0 549.2L845.8 549.8L848.8 549.6L851.3 550.6L854.2 550.3L856.9 551.1L859.3 552.0L860.9 553.4L861.2 555.1L863.3 556.3L866.0 557.0L868.4 558.0L871.3 558.4L874.3 558.3L877.0 557.6L879.9 558.1L882.2 559.2L883.8 560.6L886.5 561.3L888.2 562.6L890.4 563.8L893.3 564.2L896.2 564.5L899.2 564.7L901.9 563.9L904.8 563.6L907.7 563.1L910.7 563.0L913.2 563.9L915.5 564.9L918.3 565.6L920.2 566.9L920.8 568.5L922.3 569.9L922.7 571.6L925.3 572.3L928.3 572.2L931.0 571.5L933.9 572.0L936.5 572.9L938.7 574.0L941.5 574.5L944.4 575.0L946.5 576.1" stroke="#f58af5" stroke-width="1.1" fill="none"/>
<path d="M860.0 572.0L863.0 572.1L866.0 572.2L869.0 572.3L872.0 572.3L875.0 572.2L877.9 572.5L880.9 572.4L883.8 572.7L886.5 571.9L889.1 571.1L891.6 570.2L893.6 568.9L896.5 568.5L899.3 567.9L902.2 568.2L904.3 569.4L907.1 569.9L909.1 571.2L910.5 572.6L911.8 574.1L914.7 574.6L917.6 574.9L920.4 575.5L923.4 575.6L926.3 575.2L929.1 574.6L931.6 573.7L934.6 573.8L937.6 573.6L940.6 573.4L943.5 573.7L945.6 574.8L948.4 575.4L951.3 575.0L954.0 575.8L955.9 577.1L957.2 578.5L959.0 579.9L961.7 580.5L964.7 580.3L967.6 579.9L970.5 579.6L972.9 578.5L975.8 578.3L978.7 578.7" stroke="#f58af5" stroke-width="1.1" fill="none"/>
<path d="M880.0 545.0L882.8 545.6L884.9 546.8L885.7 548.4L887.8 549.5L889.4 550.9L890.7 552.4L891.9 553.9L894.6 554.6L897.5 554.3L900.4 553.9L903.3 554.3L906.3 554.1L909.3 554.2L912.3 554.0L915.0 554.7L916.5 556.1L918.8 557.2L919.6 558.8L922.2 559.6L924.2 560.9L925.1 562.4L927.7 563.3L929.8 564.4L932.0 565.6L932.9 567.1L935.3 568.1L937.8 569.1L939.2 570.5L940.6 572.0L943.0 573.0L946.0 573.0L948.3 574.0L950.9 574.9L952.0 576.4L954.7 577.2L956.6 578.5L957.8 580.0L957.9 581.6L960.4 582.5L963.2 583.1L966.1 582.7L969.0 583.1L972.0 583.2L974.2 584.3L976.8 585.1L978.9 586.3L980.0 587.9L982.4 588.9L984.8 589.8L985.9 591.4" stroke="#f58af5" stroke-width="1.1" fill="none"/>
<path d="M905.0 560.0L908.0 560.1L910.8 560.8L913.7 561.1L916.7 560.9L919.7 560.9L922.7 561.1L925.6 561.4L928.5 561.7L931.5 561.7L934.4 561.3L937.4 561.6L940.4 561.7L943.1 562.4L945.2 563.5L946.2 565.1L946.0 566.7L947.6 568.1L950.2 569.0L952.3 570.2L954.2 571.4L957.0 572.0L959.5 573.0L960.8 574.4L961.3 576.1L963.4 577.3L966.1 578.0L969.0 577.6L971.5 578.6L974.4 578.9L976.9 579.9" stroke="#f58af5" stroke-width="1.1" fill="none"/>
<path d="M925.0 580.0L927.8 580.5L930.2 581.6L932.7 582.4L935.4 583.2L938.4 583.5L940.3 584.8L943.1 585.4L946.1 585.1L948.8 584.5L951.3 583.5L953.6 582.5L955.7 581.3L957.1 579.9L958.6 578.4L960.3 577.0L962.7 576.1L964.6 574.8L965.7 573.3L966.6 571.7L968.6 570.4L970.7 569.3L973.6 568.9L976.5 569.3L979.5 569.5L982.2 568.8L985.2 568.8L988.0 569.3L991.0 569.6L993.8 570.2L996.8 570.2" stroke="#f58af5" stroke-width="1.1" fill="none"/>
<path d="M900.0 600.0L902.8 600.6L905.3 601.5L906.7 602.9L909.5 603.6L912.4 603.3L915.2 603.8L918.2 603.8L921.2 603.7L924.0 604.3L927.0 604.1L929.6 604.9L932.3 605.6L935.3 605.2L938.0 605.9L940.7 606.6L943.6 606.3L946.4 606.9L948.8 607.9L950.7 609.2L952.6 610.5L953.2 612.1L955.9 612.8" stroke="#f58af5" stroke-width="1.1" fill="none"/>
<path d="M820.0 585.0L822.9 584.6L825.3 583.6L828.2 583.1L830.7 582.2L832.6 580.9L835.0 579.9L837.6 579.1L839.8 578.0L842.3 577.0L845.3 577.1L848.0 576.5L850.4 575.5L851.9 574.1L853.3 572.6L854.1 571.0L857.0 570.6L859.7 570.0L862.5 570.7L865.5 570.5L868.0 571.3L870.7 572.1L873.1 573.1L875.2 574.2L878.0 574.8L881.0 574.7L883.9 575.2L886.8 574.8L889.0 573.6L892.0 573.4L894.9 573.6" stroke="#f58af5" stroke-width="1.1" fill="none"/>
<path d="M930.0 520.0L932.8 519.3L934.9 518.2L937.3 517.2L940.2 516.9L942.8 516.0L944.7 514.7L946.4 513.4L949.3 512.9L951.7 511.9L954.6 511.7L957.6 512.1L960.5 511.6L963.4 511.5L966.4 511.3" stroke="#f58af5" stroke-width="1.1" fill="none"/>
<path d="M845.0 535.0L846.5 536.4L847.8 537.9L847.8 539.6L846.6 541.1L844.7 542.4L844.2 544.0L842.5 545.4L841.9 547.0L842.7 548.6L845.0 549.6L847.1 550.8L849.9 551.4L852.8 551.8L855.3 552.7L856.8 554.1L857.4 555.7L859.7 556.8L862.6 557.1L865.6 557.3L868.4 557.9" stroke="#f58af5" stroke-width="1.1" fill="none"/>
<path d="M800.0 575.0L802.9 575.4L805.4 576.3L807.4 577.6L808.6 579.1L811.0 580.0L812.3 581.6L813.9 582.9L815.1 584.4L816.1 586.0L816.1 587.7L817.9 589.0L820.5 589.8L822.6 591.0L824.9 592.1L826.6 593.4L829.1 594.3L830.5 595.8L833.5 596.1L836.1 596.9L839.0 597.4L841.7 596.7L844.7 596.7L847.3 595.8L849.5 594.7L851.7 593.6L853.5 592.3L854.8 590.8L855.3 589.2L858.0 588.4L859.8 587.1" stroke="#f58af5" stroke-width="1.1" fill="none"/>
<path d="M1100.0 548.0L1102.8 548.6L1105.3 549.5L1107.2 550.8L1109.8 551.5L1112.3 552.5L1113.7 554.0L1114.1 555.6L1116.4 556.7L1118.4 557.9L1120.4 559.1L1122.7 560.2L1123.6 561.8L1125.1 563.2L1127.2 564.4" stroke="#f58af5" stroke-width="1.1" fill="none"/>
<path d="M1020.0 575.0L1023.0 574.8L1025.5 575.7L1026.9 577.1L1027.4 578.8L1027.7 580.4L1027.5 582.1L1030.1 583.0L1032.5 583.9" stroke="#f58af5" stroke-width="1.1" fill="none"/>
<path d="M1016.9 528.0L1020.1 527.1L1023.8 526.5L1027.4 526.2L1030.8 526.7L1034.4 528.0L1037.9 528.8L1041.2 529.6L1044.9 529.7L1046.6 535.0L1043.2 536.3L1040.7 536.4L1037.9 537.6L1034.3 536.1L1030.4 534.9L1027.4 533.2L1024.0 532.4L1020.5 531.9L1016.9 530.6L1016.9 528.0" stroke="#19e6e6" stroke-width="1" fill="none"/>
<path d="M962.0 504.5L964.9 504.8L968.2 505.5L971.5 506.5L975.2 506.6L979.2 507.6L983.0 508.0L986.0 509.1L988.8 510.1L992.4 510.5L996.0 515.0L999.9 514.2L1004.0 514.0L1006.9 515.9L1010.0 518.0" stroke="#19e6e6" stroke-width="1" fill="none"/>
<path d="M1030.0 525.0L1033.1 525.3L1036.6 526.0L1040.0 527.0L1042.9 527.6L1046.0 529.1L1049.0 530.0L1052.5 530.8L1055.9 531.5L1060.0 531.5" stroke="#19e6e6" stroke-width="1" fill="none"/>
<path d="M940.0 531.5L943.7 531.9L948.0 533.0L951.1 532.7L954.2 532.8L957.5 533.2" stroke="#19e6e6" stroke-width="1" fill="none"/>
<path d="M975.0 530.6L980.0 533.0L982.9 531.8L986.3 531.0L989.5 530.1L992.8 529.7L996.0 528.8" stroke="#19e6e6" stroke-width="1" fill="none"/>
<path d="M900.0 521.0L903.1 521.0L906.6 521.3L910.0 522.0L913.2 523.0L916.7 524.7L920.0 526.0L923.3 526.8L926.5 527.5L930.4 527.2L934.0 528.0L936.9 527.7L939.5 527.7L943.1 527.3L946.0 527.0" stroke="#19e6e6" stroke-width="1" fill="none"/>
<path d="M895.0 613.6L898.0 611.6L900.0 610.0L903.7 609.3L906.4 607.7L910.0 606.0L912.8 604.8L915.8 605.0L918.5 604.1L921.8 602.7L925.0 602.5L927.9 601.8L930.9 602.0L934.6 600.6L937.7 600.7L940.0 600.0L944.1 599.9L947.0 598.7L951.1 599.2L954.2 597.5L957.5 597.5L959.6 595.4L961.4 593.2L962.5 590.0L964.0 587.0L964.0 583.4L965.0 580.0L968.3 578.7L971.8 577.1L975.0 575.0L978.8 576.4L982.5 577.5L986.1 576.7L988.9 575.3L990.7 573.6L993.9 572.2L996.6 570.7L1000.0 570.0L1003.3 570.0L1007.2 569.8L1010.0 568.7L1013.4 567.6L1016.2 567.3L1020.0 567.5L1023.8 568.4L1027.0 569.8L1030.0 571.0L1033.5 573.2L1036.9 573.7L1040.0 576.0L1038.5 578.8L1037.3 581.7L1035.0 585.0L1032.1 588.6L1030.0 591.0L1027.4 592.9L1025.0 596.0L1027.5 598.7L1031.0 599.0L1033.7 597.6L1037.4 597.6L1040.0 597.5L1043.0 595.6L1047.2 594.6L1050.0 593.7L1052.8 591.4L1056.9 590.3L1060.0 587.5L1061.4 585.2L1063.7 582.5L1067.1 582.5L1071.2 581.8L1075.0 581.0L1078.5 580.9L1081.0 580.1L1083.5 581.0L1087.4 580.7L1090.0 580.5L1092.7 580.7L1097.2 580.7L1100.0 580.0L1103.1 579.0L1105.5 577.6L987.0 631.5Z" fill="#3997ff"/>
<clipPath id="csea"><path d="M895.0 613.6L898.0 611.6L900.0 610.0L903.7 609.3L906.4 607.7L910.0 606.0L912.8 604.8L915.8 605.0L918.5 604.1L921.8 602.7L925.0 602.5L927.9 601.8L930.9 602.0L934.6 600.6L937.7 600.7L940.0 600.0L944.1 599.9L947.0 598.7L951.1 599.2L954.2 597.5L957.5 597.5L959.6 595.4L961.4 593.2L962.5 590.0L964.0 587.0L964.0 583.4L965.0 580.0L968.3 578.7L971.8 577.1L975.0 575.0L978.8 576.4L982.5 577.5L986.1 576.7L988.9 575.3L990.7 573.6L993.9 572.2L996.6 570.7L1000.0 570.0L1003.3 570.0L1007.2 569.8L1010.0 568.7L1013.4 567.6L1016.2 567.3L1020.0 567.5L1023.8 568.4L1027.0 569.8L1030.0 571.0L1033.5 573.2L1036.9 573.7L1040.0 576.0L1038.5 578.8L1037.3 581.7L1035.0 585.0L1032.1 588.6L1030.0 591.0L1027.4 592.9L1025.0 596.0L1027.5 598.7L1031.0 599.0L1033.7 597.6L1037.4 597.6L1040.0 597.5L1043.0 595.6L1047.2 594.6L1050.0 593.7L1052.8 591.4L1056.9 590.3L1060.0 587.5L1061.4 585.2L1063.7 582.5L1067.1 582.5L1071.2 581.8L1075.0 581.0L1078.5 580.9L1081.0 580.1L1083.5 581.0L1087.4 580.7L1090.0 580.5L1092.7 580.7L1097.2 580.7L1100.0 580.0L1103.1 579.0L1105.5 577.6L987.0 631.5Z"/></clipPath><g clip-path="url(#csea)">
<path d="M900.8 614.7L1068.3 538.5" stroke="#c2b89c" stroke-width="1" fill="none" />
<path d="M943.9 623.1L1111.4 546.9" stroke="#c2b89c" stroke-width="1" fill="none" />
<path d="M762.0 565.8L1020.5 616.3" stroke="#c2b89c" stroke-width="1" fill="none" />
<path d="M795.5 550.6L1054.0 601.0" stroke="#c2b89c" stroke-width="1" fill="none" />
<path d="M829.0 535.4L1087.5 585.8" stroke="#c2b89c" stroke-width="1" fill="none" />
</g>
<ellipse cx="1011" cy="598.5" rx="3.5" ry="1.1" fill="#4a4a74"/><ellipse cx="984" cy="578.5" rx="6" ry="1.6" fill="#34345a" transform="rotate(6 984 578.5)"/>
<path d="M895.0 613.6L897.1 611.7L900.0 610.0L902.6 608.2L905.0 608.9L907.6 607.0L910.0 606.0L913.1 605.3L914.6 605.5L916.8 605.0L920.8 603.8L922.5 602.2L925.0 602.5L926.8 602.6L930.5 601.9L931.8 601.7L936.0 601.6L937.8 600.3L940.0 600.0L942.3 598.9L944.1 600.2L947.3 598.7L950.0 599.5L953.3 598.6L955.6 597.9L957.5 597.5L959.5 595.6L961.2 591.6L962.5 590.0L963.1 587.7L964.1 585.9L964.9 582.3L965.0 580.0L967.5 579.3L970.5 577.2L972.3 576.5L975.0 575.0L977.5 576.2L980.7 576.5L982.5 577.5L985.2 575.8L988.1 575.8L990.2 574.0L991.7 572.7L994.5 572.7L997.7 571.8L1000.0 570.0L1003.4 569.2L1004.3 569.8L1007.4 569.7L1010.0 568.7L1012.4 567.9L1015.9 568.6L1018.1 568.2L1020.0 567.5L1023.4 569.1L1024.1 568.4L1026.6 570.6L1030.0 571.0L1032.5 572.7L1034.2 572.9L1038.3 575.0L1040.0 576.0L1038.1 577.5L1038.1 581.2L1035.5 583.7L1035.0 585.0L1032.6 586.8L1031.9 589.6L1030.0 591.0L1028.3 592.5L1025.0 596.0L1027.5 598.7L1029.5 597.7L1031.7 598.6L1034.3 597.8L1037.9 598.3L1040.0 597.5L1042.6 596.9L1045.3 595.1L1046.9 595.6L1050.0 593.7L1052.0 593.0L1054.1 590.2L1057.8 588.5L1060.0 587.5L1062.8 585.3L1063.7 582.5L1067.3 582.5L1070.1 581.0L1071.9 580.9L1075.0 581.0L1077.3 580.2L1079.3 580.9L1083.4 581.0L1085.3 581.5L1087.7 580.7L1090.0 580.5L1092.7 580.4L1094.3 579.4L1098.2 580.1L1100.0 580.0L1103.3 577.9L1105.5 577.6" stroke="#19e6e6" stroke-width="1" fill="none"/>
</g>
<circle cx="904.0" cy="485.0" r="2.8" fill="#0a0a0a"/>
<circle cx="907.9" cy="485.8" r="2.8" fill="#0a0a0a"/>
<circle cx="911.9" cy="486.5" r="2.8" fill="#0a0a0a"/>
<circle cx="915.8" cy="487.3" r="2.8" fill="#0a0a0a"/>
<circle cx="919.8" cy="488.1" r="2.8" fill="#0a0a0a"/>
<circle cx="923.7" cy="488.8" r="2.8" fill="#0a0a0a"/>
<circle cx="927.6" cy="489.6" r="2.8" fill="#0a0a0a"/>
<circle cx="931.6" cy="490.3" r="2.8" fill="#0a0a0a"/>
<circle cx="935.5" cy="491.1" r="2.8" fill="#0a0a0a"/>
<circle cx="939.4" cy="491.9" r="2.8" fill="#0a0a0a"/>
<circle cx="943.4" cy="492.6" r="2.8" fill="#0a0a0a"/>
<circle cx="947.3" cy="493.4" r="2.8" fill="#0a0a0a"/>
<circle cx="951.2" cy="494.1" r="2.8" fill="#0a0a0a"/>
<circle cx="955.2" cy="494.9" r="2.8" fill="#0a0a0a"/>
<circle cx="959.1" cy="495.7" r="2.8" fill="#0a0a0a"/>
<circle cx="963.1" cy="496.4" r="2.8" fill="#0a0a0a"/>
<circle cx="967.0" cy="497.2" r="2.8" fill="#0a0a0a"/>
<path d="M901.0 507.0C888.6 511.0 838.7 528.1 835.9 535.1" stroke="#0000b4" stroke-width="1.8" fill="none"/>
<path d="M910.6 503.3C901.7 508.4 844.5 527.3 842.9 542.1" stroke="#0000a0" stroke-width="1.8" fill="none"/>
<path d="M903.2 509.5C880.9 512.7 851.9 523.4 847.5 540.1" stroke="#0000a8" stroke-width="1.8" fill="none"/>
<path d="M898.0 489.1C877.3 495.3 849.9 526.6 852.1 542.1" stroke="#0000a0" stroke-width="1.8" fill="none"/>
<path d="M918.7 494.0C897.7 496.4 865.1 520.7 858.0 540.8" stroke="#00e0e0" stroke-width="1.8" fill="none"/>
<path d="M926.8 512.4C913.1 516.7 860.9 523.4 862.7 537.5" stroke="#0000a0" stroke-width="1.8" fill="none"/>
<path d="M904.1 500.5C894.5 501.8 876.8 535.0 870.0 541.5" stroke="#00009a" stroke-width="1.8" fill="none"/>
<path d="M894.1 495.2C871.9 502.9 882.6 522.4 875.9 537.5" stroke="#0010d8" stroke-width="1.8" fill="none"/>
<path d="M913.3 491.3C905.8 494.2 887.4 519.8 884.5 533.5" stroke="#0000b0" stroke-width="1.8" fill="none"/>
<path d="M882.9 499.3C872.1 505.0 898.0 522.8 891.8 529.5" stroke="#0000b4" stroke-width="1.8" fill="none"/>
<path d="M915.2 501.4C891.8 502.1 890.4 518.3 893.1 524.9" stroke="#0000b4" stroke-width="1.8" fill="none"/>
<path d="M882.9 494.8C874.0 496.9 899.6 531.0 897.1 539.5" stroke="#0000b4" stroke-width="1.8" fill="none"/>
<path d="M893.4 503.0C885.6 509.7 901.1 508.3 901.8 528.2" stroke="#0000a0" stroke-width="1.8" fill="none"/>
<path d="M916.1 501.3C898.7 508.7 909.5 521.3 908.4 534.2" stroke="#0010d8" stroke-width="1.8" fill="none"/>
<path d="M890.8 500.2C879.7 501.6 922.6 511.1 917.6 532.9" stroke="#ff2000" stroke-width="1.8" fill="none"/>
<path d="M899.2 510.9C884.8 515.7 864.9 522.2 866.0 539.5" stroke="#00c8ff" stroke-width="1.8" fill="none"/>
<path d="M896.5 488.9C884.1 493.2 878.2 520.4 880.0 536.0" stroke="#0000c0" stroke-width="1.8" fill="none"/>
<path d="M892.9 503.6C875.9 504.6 887.3 513.1 888.0 531.5" stroke="#0000b4" stroke-width="1.8" fill="none"/>
<path d="M892.6 494.6C877.6 499.2 901.8 519.8 904.0 531.0" stroke="#0000a0" stroke-width="1.8" fill="none"/>
<path d="M898.9 509.9C875.0 514.7 909.1 517.0 912.0 536.0" stroke="#0000c0" stroke-width="1.8" fill="none"/>
<path d="M900.4 494.7C884.0 495.5 860.0 532.0 855.0 538.5" stroke="#0010d8" stroke-width="1.8" fill="none"/>
<path d="M926.7 497.6C904.4 499.0 845.1 531.6 839.5 539.0" stroke="#0000b0" stroke-width="1.8" fill="none"/>
<path d="M906.6 503.6C884.6 506.3 898.9 522.4 896.0 533.0" stroke="#00e0e0" stroke-width="1.8" fill="none"/>
<path d="M863.5 501.7C839.7 508.5 880.8 520.1 873.0 533.0" stroke="#00e0e0" stroke-width="1.8" fill="none"/>
<path d="M932.3 498.6C920.4 498.9 831.0 518.8 836.0 534.3" stroke="#00009a" stroke-width="1.8" fill="none"/>
<path d="M869.0 500.6C860.0 507.5 844.7 535.4 844.7 542.1" stroke="#000090" stroke-width="1.8" fill="none"/>
<path d="M882.9 505.1C869.6 512.4 851.0 528.7 848.5 540.2" stroke="#00009a" stroke-width="1.8" fill="none"/>
<path d="M929.9 505.3C922.5 512.1 845.1 531.2 849.5 541.0" stroke="#00009a" stroke-width="1.8" fill="none"/>
<path d="M941.2 501.1C918.9 499.6 852.8 531.0 855.0 541.3" stroke="#0420d0" stroke-width="1.8" fill="none"/>
<path d="M879.5 507.3C859.0 505.8 859.3 525.2 864.6 538.9" stroke="#0000b4" stroke-width="1.8" fill="none"/>
<path d="M892.3 508.9C880.2 513.4 871.1 529.0 868.9 540.8" stroke="#0010d8" stroke-width="1.8" fill="none"/>
<path d="M882.2 498.8C861.3 502.4 867.5 525.0 872.9 538.4" stroke="#0420d0" stroke-width="1.8" fill="none"/>
<path d="M928.3 498.7C913.4 503.8 884.0 515.9 884.1 533.0" stroke="#ff2000" stroke-width="1.8" fill="none"/>
<path d="M922.4 503.9C908.8 510.7 896.3 517.2 889.2 529.2" stroke="#0420d0" stroke-width="1.8" fill="none"/>
<path d="M896.9 505.6C878.6 512.5 895.9 509.5 890.8 526.2" stroke="#0000b0" stroke-width="1.8" fill="none"/>
<path d="M898.4 509.7C877.9 508.1 889.4 530.5 894.1 538.1" stroke="#0000a0" stroke-width="1.8" fill="none"/>
<path d="M911.3 514.1C892.8 520.4 906.9 514.3 899.5 529.6" stroke="#ff2000" stroke-width="1.8" fill="none"/>
<path d="M908.7 511.6C897.2 515.2 916.6 522.6 911.0 532.4" stroke="#0000c0" stroke-width="1.8" fill="none"/>
<path d="M919.4 505.3C902.4 512.7 922.0 510.5 920.3 531.9" stroke="#0000a0" stroke-width="1.8" fill="none"/>
<path d="M921.9 493.4C903.1 498.9 870.9 523.9 867.5 538.1" stroke="#000090" stroke-width="1.8" fill="none"/>
<path d="M929.2 508.5C914.5 513.5 885.3 520.6 878.0 536.0" stroke="#0000c0" stroke-width="1.8" fill="none"/>
<path d="M896.3 493.7C874.3 497.1 893.0 516.5 888.1 533.2" stroke="#0000a0" stroke-width="1.8" fill="none"/>
<path d="M942.5 506.7C932.2 512.7 903.1 515.1 906.3 530.2" stroke="#0010d8" stroke-width="1.8" fill="none"/>
<path d="M897.0 493.3C880.0 496.0 920.6 516.8 914.9 535.9" stroke="#00c8ff" stroke-width="1.8" fill="none"/>
<path d="M916.5 495.1C902.1 495.4 853.7 522.9 856.4 540.3" stroke="#0000a8" stroke-width="1.8" fill="none"/>
<path d="M906.4 493.2C897.6 498.3 843.7 517.6 837.6 538.0" stroke="#00009a" stroke-width="1.8" fill="none"/>
<path d="M870.4 505.7C863.1 506.3 900.3 527.6 893.5 534.2" stroke="#000090" stroke-width="1.8" fill="none"/>
<path d="M884.4 493.3C869.7 493.4 874.2 511.5 872.0 532.7" stroke="#0000a0" stroke-width="1.8" fill="none"/>
<path d="M925.6 509.8C911.9 513.0 830.9 520.4 833.4 534.8" stroke="#0000b0" stroke-width="1.8" fill="none"/>
<path d="M900.2 503.7C876.3 509.9 839.4 521.7 843.9 542.8" stroke="#0000b0" stroke-width="1.8" fill="none"/>
<path d="M885.6 496.8C866.2 501.6 849.4 530.6 847.5 539.5" stroke="#0000c0" stroke-width="1.8" fill="none"/>
<path d="M933.9 497.7C926.1 499.0 853.9 528.3 849.8 543.8" stroke="#0420d0" stroke-width="1.8" fill="none"/>
<path d="M895.0 507.0C887.9 506.8 861.4 526.4 859.7 541.6" stroke="#0000a0" stroke-width="1.8" fill="none"/>
<path d="M891.9 504.5C876.8 505.0 869.7 524.0 864.9 535.7" stroke="#0000b0" stroke-width="1.8" fill="none"/>
<path d="M926.1 506.8C901.2 506.3 869.7 524.6 867.4 541.5" stroke="#0000a8" stroke-width="1.8" fill="none"/>
<path d="M890.9 506.2C871.0 510.1 873.4 526.4 877.4 538.8" stroke="#0010d8" stroke-width="1.8" fill="none"/>
<path d="M875.1 503.6C864.3 510.0 886.9 520.5 886.7 533.0" stroke="#0000a0" stroke-width="1.8" fill="none"/>
<path d="M912.7 493.2C893.6 500.1 895.1 523.1 891.8 529.6" stroke="#0010d8" stroke-width="1.8" fill="none"/>
<path d="M905.9 513.6C890.5 516.2 890.8 510.4 894.1 524.9" stroke="#0000b4" stroke-width="1.8" fill="none"/>
<path d="M953.7 500.6C935.6 500.2 895.3 531.2 894.8 538.6" stroke="#ff2000" stroke-width="1.8" fill="none"/>
<path d="M908.7 502.0C897.2 503.5 902.6 520.3 898.9 527.6" stroke="#0000b4" stroke-width="1.8" fill="none"/>
<path d="M908.2 496.3C886.0 498.7 914.8 522.2 910.2 535.9" stroke="#0000a8" stroke-width="1.8" fill="none"/>
<path d="M926.8 507.8C912.3 506.5 924.8 523.1 918.8 532.5" stroke="#000090" stroke-width="1.8" fill="none"/>
<path d="M923.4 505.9C900.4 511.1 864.5 526.3 865.4 538.2" stroke="#0420d0" stroke-width="1.8" fill="none"/>
<path d="M934.4 509.5C922.0 516.0 883.3 526.5 881.8 535.0" stroke="#0000b4" stroke-width="1.8" fill="none"/>
<path d="M883.8 499.7C875.4 502.6 880.0 523.6 885.2 529.9" stroke="#000090" stroke-width="1.8" fill="none"/>
<path d="M903.6 512.4C888.7 519.5 908.8 519.3 902.4 529.2" stroke="#0000a0" stroke-width="1.8" fill="none"/>
<path d="M903.0 509.1C897.0 514.4 908.9 515.9 911.1 534.5" stroke="#000090" stroke-width="1.8" fill="none"/>
<path d="M926.2 494.5C914.5 502.4 853.8 529.7 855.4 536.6" stroke="#0000a0" stroke-width="1.8" fill="none"/>
<path d="M880.9 494.6C872.5 492.9 831.4 520.9 836.7 537.4" stroke="#0000b0" stroke-width="1.8" fill="none"/>
<path d="M926.0 494.1C902.2 492.5 896.1 519.0 897.8 534.7" stroke="#0000a0" stroke-width="1.8" fill="none"/>
<path d="M922.5 509.8C910.8 514.6 877.7 523.8 870.7 532.6" stroke="#0000a0" stroke-width="1.8" fill="none"/>
<path d="M937.5 506.4C927.9 512.2 835.8 524.4 835.1 534.8" stroke="#0000c0" stroke-width="1.8" fill="none"/>
<path d="M944.9 503.1C939.0 502.8 848.6 524.7 844.1 543.9" stroke="#0000a8" stroke-width="1.8" fill="none"/>
<path d="M890.2 494.3C872.3 501.1 852.1 528.3 845.9 541.5" stroke="#0000b0" stroke-width="1.8" fill="none"/>
<path d="M869.4 506.5C857.7 507.7 854.1 524.6 853.8 543.8" stroke="#0010d8" stroke-width="1.8" fill="none"/>
<path d="M868.6 505.3C863.4 505.6 866.4 531.6 858.9 541.1" stroke="#0420d0" stroke-width="1.8" fill="none"/>
<path d="M934.5 507.0C913.9 509.7 864.3 532.4 861.6 539.0" stroke="#0000a8" stroke-width="1.8" fill="none"/>
<path d="M897.7 491.4C890.5 493.4 878.2 523.6 872.7 540.5" stroke="#0000a8" stroke-width="1.8" fill="none"/>
<path d="M942.5 502.4C928.5 501.5 880.7 522.4 875.0 537.9" stroke="#0000a0" stroke-width="1.8" fill="none"/>
<path d="M907.9 501.1C896.0 503.9 880.9 517.0 885.9 531.8" stroke="#0000b0" stroke-width="1.8" fill="none"/>
<path d="M921.2 501.0C896.3 502.4 890.1 521.6 890.1 528.9" stroke="#0010d8" stroke-width="1.8" fill="none"/>
<path d="M900.0 494.5C880.3 497.1 895.4 506.8 891.4 526.4" stroke="#0000b0" stroke-width="1.8" fill="none"/>
<path d="M953.0 501.0C939.9 509.0 903.9 529.9 897.0 540.6" stroke="#0000b4" stroke-width="1.8" fill="none"/>
<path d="M906.6 511.4C888.8 509.9 905.0 517.9 900.6 528.3" stroke="#00e0e0" stroke-width="1.8" fill="none"/>
<path d="M933.8 501.2C922.8 503.3 902.2 524.2 907.1 532.6" stroke="#00009a" stroke-width="1.8" fill="none"/>
<path d="M951.4 498.9C940.2 501.5 918.2 516.9 916.8 531.5" stroke="#0000b0" stroke-width="1.8" fill="none"/>
<path d="M870.4 499.9C848.8 505.3 872.3 524.6 865.2 538.9" stroke="#0000b4" stroke-width="1.8" fill="none"/>
<path d="M912.1 502.1C903.0 507.8 878.5 512.5 878.0 534.2" stroke="#0000b0" stroke-width="1.8" fill="none"/>
<path d="M870.1 505.9C858.4 504.4 886.7 523.7 885.1 531.2" stroke="#00009a" stroke-width="1.8" fill="none"/>
<path d="M915.3 499.3C909.8 497.7 913.3 521.7 905.3 530.4" stroke="#0010d8" stroke-width="1.8" fill="none"/>
<path d="M939.8 502.3C928.1 501.7 905.7 530.3 911.5 537.0" stroke="#000090" stroke-width="1.8" fill="none"/>
<path d="M950.0 500.6C926.4 506.8 857.2 526.5 854.8 539.2" stroke="#0420d0" stroke-width="1.8" fill="none"/>
<path d="M873.4 500.3C866.4 506.0 837.6 529.9 837.3 540.3" stroke="#00009a" stroke-width="1.8" fill="none"/>
<path d="M905.1 490.4C891.9 497.0 900.5 512.2 894.9 533.1" stroke="#00c8ff" stroke-width="1.8" fill="none"/>
<path d="M894.2 499.7C887.1 504.3 873.5 520.4 874.3 534.6" stroke="#000090" stroke-width="1.8" fill="none"/>
<path d="M905.2 491.4C893.9 492.1 842.5 515.3 835.2 536.4" stroke="#0000b0" stroke-width="1.8" fill="none"/>
<path d="M881.4 495.6C858.4 498.5 849.8 524.0 842.4 541.8" stroke="#0420d0" stroke-width="1.8" fill="none"/>
<path d="M890.1 495.4C866.2 503.1 853.2 528.7 849.5 541.6" stroke="#000090" stroke-width="1.8" fill="none"/>
<path d="M904.0 506.3C895.6 505.8 854.0 525.0 850.1 542.0" stroke="#000090" stroke-width="1.8" fill="none"/>
<path d="M891.8 495.4C883.3 495.3 860.8 521.8 855.3 541.8" stroke="#0000b4" stroke-width="1.8" fill="none"/>
<path d="M876.6 504.3C868.0 502.6 859.8 529.4 864.4 537.2" stroke="#00009a" stroke-width="1.8" fill="none"/>
<path d="M929.0 509.6C905.2 517.6 875.2 530.3 867.5 540.3" stroke="#0000b0" stroke-width="1.8" fill="none"/>
<path d="M899.3 490.9C879.5 494.2 883.9 524.3 878.0 537.4" stroke="#0000a0" stroke-width="1.8" fill="none"/>
<path d="M906.5 500.8C897.4 504.8 891.8 515.3 884.7 534.8" stroke="#0000c0" stroke-width="1.8" fill="none"/>
<path d="M951.8 501.9C944.2 505.9 885.5 515.0 890.7 530.9" stroke="#0000c0" stroke-width="1.8" fill="none"/>
<path d="M912.7 514.6C894.0 517.8 899.6 519.4 894.9 526.9" stroke="#0420d0" stroke-width="1.8" fill="none"/>
<path d="M907.4 506.1C891.1 510.5 897.7 522.1 895.4 539.3" stroke="#0000b0" stroke-width="1.8" fill="none"/>
<path d="M908.5 494.1C901.0 497.1 908.9 515.8 904.7 527.3" stroke="#0010d8" stroke-width="1.8" fill="none"/>
<path d="M924.2 493.9C901.7 501.8 909.7 521.3 908.3 534.3" stroke="#00e0e0" stroke-width="1.8" fill="none"/>
<path d="M917.6 502.7C904.9 502.8 911.4 517.6 916.3 531.8" stroke="#0000b4" stroke-width="1.8" fill="none"/>
<path d="M919.5 495.0C907.3 496.0 869.3 528.0 868.2 540.3" stroke="#0000b0" stroke-width="1.8" fill="none"/>
<path d="M891.0 494.3C886.0 492.9 874.0 515.1 880.0 535.3" stroke="#0010d8" stroke-width="1.8" fill="none"/>
<path d="M870.2 499.9C854.5 505.3 893.8 513.8 888.2 533.2" stroke="#0010d8" stroke-width="1.8" fill="none"/>
<path d="M891.9 494.5C877.4 501.4 904.3 521.5 906.3 530.5" stroke="#0000c0" stroke-width="1.8" fill="none"/>
<path d="M862.2 503.2C840.5 503.0 908.9 521.8 911.1 534.0" stroke="#0420d0" stroke-width="1.8" fill="none"/>
<path d="M940.4 506.2C922.6 511.7 860.1 530.6 853.8 537.6" stroke="#00c8ff" stroke-width="1.8" fill="none"/>
<path d="M927.7 510.0C909.5 514.5 846.6 527.8 840.3 537.4" stroke="#0000b0" stroke-width="1.8" fill="none"/>
<path d="M878.3 498.9C854.6 502.1 898.9 523.7 896.8 531.1" stroke="#0010d8" stroke-width="1.8" fill="none"/>
<path d="M947.9 501.9C933.8 509.6 869.5 517.2 872.4 532.4" stroke="#0000b0" stroke-width="1.8" fill="none"/>
<path d="M896.0 508.5C875.6 515.6 842.6 516.7 836.6 534.5" stroke="#0010d8" stroke-width="1.8" fill="none"/>
<path d="M940.0 502.9C917.9 502.7 839.1 528.8 843.7 542.1" stroke="#0420d0" stroke-width="1.8" fill="none"/>
<path d="M877.3 503.0C864.6 509.5 850.4 533.2 844.7 540.1" stroke="#0000a0" stroke-width="1.8" fill="none"/>
<path d="M884.0 504.0C859.7 509.4 848.1 529.5 851.2 540.3" stroke="#0000c0" stroke-width="1.8" fill="none"/>
<path d="M911.1 508.7C893.9 508.5 860.8 529.2 856.3 541.5" stroke="#0420d0" stroke-width="1.8" fill="none"/>
<path d="M883.2 505.0C867.5 507.6 856.2 527.0 861.9 535.8" stroke="#0420d0" stroke-width="1.8" fill="none"/>
<path d="M898.4 495.7C886.5 503.7 872.7 534.6 871.9 543.4" stroke="#0000a0" stroke-width="1.8" fill="none"/>
<path d="M923.1 499.4C901.1 502.1 875.1 517.8 873.5 537.6" stroke="#000090" stroke-width="1.8" fill="none"/>
<path d="M880.7 507.8C861.6 515.5 887.6 518.6 885.3 534.0" stroke="#00009a" stroke-width="1.8" fill="none"/>
<path d="M949.2 498.3C944.0 503.1 897.6 517.1 893.3 528.7" stroke="#000090" stroke-width="1.8" fill="none"/>
<path d="M883.0 504.8C863.7 506.1 887.5 505.6 891.2 526.2" stroke="#000090" stroke-width="1.8" fill="none"/>
<path d="M885.2 500.2C878.0 498.7 897.3 530.6 896.5 539.8" stroke="#0420d0" stroke-width="1.8" fill="none"/>
<path d="M896.7 509.0C880.6 510.1 897.3 514.1 899.5 527.7" stroke="#0000b0" stroke-width="1.8" fill="none"/>
<path d="M880.8 502.5C872.9 504.2 909.6 523.5 906.1 533.7" stroke="#0420d0" stroke-width="1.8" fill="none"/>
<path d="M899.2 496.3C887.4 495.4 922.3 524.1 916.2 532.3" stroke="#0000a8" stroke-width="1.8" fill="none"/>
<path d="M936.9 508.6C928.6 513.3 862.7 526.4 865.0 540.5" stroke="#0000b0" stroke-width="1.8" fill="none"/>
<path d="M901.7 502.2C877.1 504.5 878.5 525.9 880.4 536.3" stroke="#0000a0" stroke-width="1.8" fill="none"/>
<path d="M885.6 508.9C878.0 514.2 881.9 515.5 885.0 532.7" stroke="#0000b0" stroke-width="1.8" fill="none"/>
<path d="M917.7 500.8C910.4 501.0 914.2 523.3 906.8 530.4" stroke="#0000a0" stroke-width="1.8" fill="none"/>
<path d="M897.4 508.4C889.2 507.8 915.8 516.3 913.0 536.4" stroke="#0000c0" stroke-width="1.8" fill="none"/>
<circle cx="857.0" cy="504.2" r="2.8" fill="#0a0a0a"/>
<circle cx="861.3" cy="502.5" r="2.8" fill="#0a0a0a"/>
<circle cx="865.5" cy="500.7" r="2.8" fill="#0a0a0a"/>
<circle cx="869.8" cy="499.0" r="2.8" fill="#0a0a0a"/>
<circle cx="874.1" cy="497.2" r="2.8" fill="#0a0a0a"/>
<circle cx="878.4" cy="495.5" r="2.8" fill="#0a0a0a"/>
<circle cx="882.6" cy="493.7" r="2.8" fill="#0a0a0a"/>
<circle cx="886.9" cy="492.0" r="2.8" fill="#0a0a0a"/>
<circle cx="891.2" cy="490.2" r="2.8" fill="#0a0a0a"/>
<circle cx="895.5" cy="488.5" r="2.8" fill="#0a0a0a"/>
<circle cx="899.7" cy="486.7" r="2.8" fill="#0a0a0a"/>
<circle cx="904.0" cy="485.0" r="2.8" fill="#0a0a0a"/>
<circle cx="862.0" cy="505.8" r="2.8" fill="#0a0a0a"/>
<circle cx="866.3" cy="504.1" r="2.8" fill="#0a0a0a"/>
<circle cx="870.5" cy="502.3" r="2.8" fill="#0a0a0a"/>
<circle cx="874.8" cy="500.6" r="2.8" fill="#0a0a0a"/>
<circle cx="879.1" cy="498.8" r="2.8" fill="#0a0a0a"/>
<circle cx="883.4" cy="497.1" r="2.8" fill="#0a0a0a"/>
<circle cx="887.6" cy="495.3" r="2.8" fill="#0a0a0a"/>
<circle cx="891.9" cy="493.6" r="2.8" fill="#0a0a0a"/>
<circle cx="896.2" cy="491.8" r="2.8" fill="#0a0a0a"/>
<circle cx="900.5" cy="490.1" r="2.8" fill="#0a0a0a"/>
<circle cx="904.7" cy="488.3" r="2.8" fill="#0a0a0a"/>
<circle cx="909.0" cy="486.6" r="2.8" fill="#0a0a0a"/>
<circle cx="867.0" cy="507.4" r="2.8" fill="#0a0a0a"/>
<circle cx="871.5" cy="505.5" r="2.8" fill="#0a0a0a"/>
<circle cx="876.0" cy="503.6" r="2.8" fill="#0a0a0a"/>
<circle cx="880.5" cy="501.6" r="2.8" fill="#0a0a0a"/>
<circle cx="885.0" cy="499.7" r="2.8" fill="#0a0a0a"/>
<circle cx="889.5" cy="497.8" r="2.8" fill="#0a0a0a"/>
<circle cx="894.0" cy="495.9" r="2.8" fill="#0a0a0a"/>
<circle cx="898.5" cy="494.0" r="2.8" fill="#0a0a0a"/>
<circle cx="903.0" cy="492.0" r="2.8" fill="#0a0a0a"/>
<circle cx="907.5" cy="490.1" r="2.8" fill="#0a0a0a"/>
<circle cx="912.0" cy="488.2" r="2.8" fill="#0a0a0a"/>
<path d="M892.0 493.0l-5.1 3.1" stroke="#0000b0" stroke-width="1.4"/>
<path d="M885.8 495.8l-4.8 1.5" stroke="#0000b0" stroke-width="1.4"/>
<path d="M897.6 488.0l-5.7 2.2" stroke="#0000b0" stroke-width="1.4"/>
<path d="M862.3 503.7l-5.9 3.5" stroke="#0000b0" stroke-width="1.4"/>
<path d="M877.6 496.0l-3.8 1.0" stroke="#0000b0" stroke-width="1.4"/>
<path d="M885.0 497.4l-5.9 2.9" stroke="#0000b0" stroke-width="1.4"/>
<path d="M881.0 495.6l-3.0 1.6" stroke="#0000b0" stroke-width="1.4"/>
<path d="M868.8 501.3l-4.6 3.9" stroke="#0000b0" stroke-width="1.4"/>
<path d="M866.9 503.5l-4.0 1.3" stroke="#0000b0" stroke-width="1.4"/>
<path d="M879.5 498.0l-3.9 2.4" stroke="#0000b0" stroke-width="1.4"/>
<path d="M884.0 496.4l-6.9 2.1" stroke="#0000b0" stroke-width="1.4"/>
<path d="M900.6 487.4l-5.3 2.9" stroke="#0000b0" stroke-width="1.4"/>
<path d="M896.4 489.0l-4.8 2.6" stroke="#0000b0" stroke-width="1.4"/>
<path d="M874.2 501.9l-6.8 1.4" stroke="#0000b0" stroke-width="1.4"/>
<g stroke-width="1.35" fill="none" stroke-linejoin="round">
<path d="M942.9 491.6L947.0 481.9" stroke="#e60000"/>
<path d="M947.0 481.9L952.1 473.1" stroke="#ff2400"/>
<path d="M952.1 473.1L957.7 464.3" stroke="#ff6100"/>
<path d="M957.7 464.3L963.6 457.4" stroke="#ffbd00"/>
<path d="M963.6 457.4L970.2 450.6" stroke="#fffa00"/>
<path d="M970.2 450.6L975.9 444.5" stroke="#e5ff1a"/>
<path d="M975.9 444.5L983.2 439.4" stroke="#a8ff57"/>
<path d="M983.2 439.4L990.6 436.0" stroke="#8aff75"/>
<path d="M990.6 436.0L997.6 432.0L1005.7 429.6L1014.0 427.4L1023.0 426.0L1033.0 424.6L1042.5 423.5L1053.3 424.7L1064.6 425.0" stroke="#6bff94"/>
<path d="M962.3 493.3L962.9 484.0" stroke="#e60000"/>
<path d="M962.9 484.0L963.8 474.3" stroke="#ff4200"/>
<path d="M963.8 474.3L965.2 466.6" stroke="#ff8000"/>
<path d="M965.2 466.6L966.1 458.9" stroke="#ffdb00"/>
<path d="M966.1 458.9L967.5 452.4" stroke="#e5ff1a"/>
<path d="M967.5 452.4L969.6 446.4" stroke="#a8ff57"/>
<path d="M969.6 446.4L971.9 441.3" stroke="#6bff94"/>
<path d="M971.9 441.3L975.0 436.6" stroke="#4cffb3"/>
<path d="M975.0 436.6L978.8 433.7L983.3 430.2L989.3 428.3L995.4 426.3L1003.2 425.7L1011.5 424.9L1021.3 424.6L1032.1 424.8" stroke="#2effd1"/>
<path d="M939.7 499.9L942.5 489.2" stroke="#ff0500"/>
<path d="M942.5 489.2L945.8 479.7" stroke="#ff2400"/>
<path d="M945.8 479.7L948.6 469.8" stroke="#ff6100"/>
<path d="M948.6 469.8L952.5 461.8" stroke="#ff9e00"/>
<path d="M952.5 461.8L957.3 455.4" stroke="#fffa00"/>
<path d="M957.3 455.4L961.8 448.6" stroke="#c7ff38"/>
<path d="M961.8 448.6L968.2 443.8" stroke="#6bff94"/>
<path d="M968.2 443.8L974.7 439.0" stroke="#4cffb3"/>
<path d="M974.7 439.0L982.5 434.7L991.1 431.6L1001.7 429.5L1013.3 427.4L1025.4 425.3L1040.9 424.9L1056.8 424.5L1075.4 425.0" stroke="#2effd1"/>
<path d="M939.3 498.8L941.8 488.2" stroke="#ff2400"/>
<path d="M941.8 488.2L943.7 479.1" stroke="#ff6100"/>
<path d="M943.7 479.1L947.5 470.1" stroke="#ff9e00"/>
<path d="M947.5 470.1L951.1 463.4" stroke="#ffdb00"/>
<path d="M951.1 463.4L955.3 456.3" stroke="#e5ff1a"/>
<path d="M955.3 456.3L960.5 450.1" stroke="#a8ff57"/>
<path d="M960.5 450.1L965.8 444.7" stroke="#4cffb3"/>
<path d="M965.8 444.7L973.0 440.5L979.7 436.4" stroke="#0ffff0"/>
<path d="M979.7 436.4L988.4 433.1L997.9 431.0L1007.9 428.6L1020.3 427.2L1032.7 426.9L1047.3 426.8L1063.4 425.7" stroke="#00f0ff"/>
<path d="M937.4 495.4L939.0 486.6" stroke="#ff0500"/>
<path d="M939.0 486.6L940.6 477.2" stroke="#ff2400"/>
<path d="M940.6 477.2L941.7 470.2" stroke="#ff6100"/>
<path d="M941.7 470.2L944.0 462.4" stroke="#ff8000"/>
<path d="M944.0 462.4L946.3 456.1" stroke="#ffbd00"/>
<path d="M946.3 456.1L949.5 451.4" stroke="#ffdb00"/>
<path d="M949.5 451.4L952.5 445.6" stroke="#e5ff1a"/>
<path d="M952.5 445.6L956.6 441.2" stroke="#a8ff57"/>
<path d="M956.6 441.2L960.3 438.1" stroke="#8aff75"/>
<path d="M960.3 438.1L965.1 434.4" stroke="#6bff94"/>
<path d="M965.1 434.4L969.6 432.4L975.4 430.3L981.3 428.9L987.6 429.1L994.6 428.0L1003.2 428.6" stroke="#4cffb3"/>
<path d="M937.9 508.3L941.7 496.9" stroke="#e60000"/>
<path d="M941.7 496.9L946.1 486.9" stroke="#ff2400"/>
<path d="M946.1 486.9L950.2 477.4" stroke="#ff6100"/>
<path d="M950.2 477.4L953.9 468.6" stroke="#ff9e00"/>
<path d="M953.9 468.6L958.0 461.2" stroke="#ffdb00"/>
<path d="M958.0 461.2L961.4 454.6" stroke="#e5ff1a"/>
<path d="M961.4 454.6L965.7 448.9" stroke="#8aff75"/>
<path d="M965.7 448.9L969.2 443.4" stroke="#4cffb3"/>
<path d="M969.2 443.4L973.9 439.8" stroke="#2effd1"/>
<path d="M973.9 439.8L976.7 436.2L980.1 434.5L982.5 432.1L985.3 431.1L987.4 429.8L988.5 430.3L989.4 430.9" stroke="#0ffff0"/>
<path d="M939.0 499.1L947.5 493.2L955.6 486.6" stroke="#c70000"/>
<path d="M955.6 486.6L963.6 480.3" stroke="#e60000"/>
<path d="M963.6 480.3L970.8 474.5" stroke="#ff0500"/>
<path d="M970.8 474.5L978.7 468.0" stroke="#ff4200"/>
<path d="M978.7 468.0L986.4 462.5" stroke="#ff6100"/>
<path d="M986.4 462.5L995.1 457.9" stroke="#ff8000"/>
<path d="M995.1 457.9L1002.2 452.8" stroke="#ff9e00"/>
<path d="M1002.2 452.8L1010.8 449.1" stroke="#ffbd00"/>
<path d="M1010.8 449.1L1018.9 444.5" stroke="#ffdb00"/>
<path d="M1018.9 444.5L1026.1 441.2L1034.3 437.9" stroke="#fffa00"/>
<path d="M1034.3 437.9L1042.5 435.8" stroke="#e5ff1a"/>
<path d="M1042.5 435.8L1050.8 433.1" stroke="#c7ff38"/>
<path d="M1050.8 433.1L1059.7 431.6L1067.9 430.6" stroke="#a8ff57"/>
<path d="M957.8 486.9L962.5 480.8" stroke="#ff8000"/>
<path d="M962.5 480.8L967.3 475.5" stroke="#ffbd00"/>
<path d="M967.3 475.5L971.8 470.1" stroke="#ffdb00"/>
<path d="M971.8 470.1L977.0 465.8" stroke="#fffa00"/>
<path d="M977.0 465.8L981.3 461.0" stroke="#e5ff1a"/>
<path d="M981.3 461.0L986.6 456.1" stroke="#c7ff38"/>
<path d="M986.6 456.1L990.9 452.6" stroke="#a8ff57"/>
<path d="M990.9 452.6L995.8 448.8" stroke="#8aff75"/>
<path d="M995.8 448.8L1001.3 444.5" stroke="#6bff94"/>
<path d="M1001.3 444.5L1005.7 441.6" stroke="#4cffb3"/>
<path d="M1005.7 441.6L1011.3 439.4L1016.5 437.1" stroke="#2effd1"/>
<path d="M1016.5 437.1L1021.3 434.4L1027.5 433.2L1032.3 432.3L1038.7 431.4" stroke="#0ffff0"/>
<path d="M952.2 490.2L953.6 481.6" stroke="#ff6100"/>
<path d="M953.6 481.6L954.3 473.4" stroke="#ff8000"/>
<path d="M954.3 473.4L956.0 465.9" stroke="#ffbd00"/>
<path d="M956.0 465.9L957.2 459.3" stroke="#fffa00"/>
<path d="M957.2 459.3L958.6 452.7" stroke="#c7ff38"/>
<path d="M958.6 452.7L961.3 447.2" stroke="#6bff94"/>
<path d="M961.3 447.2L964.2 442.6" stroke="#2effd1"/>
<path d="M964.2 442.6L967.2 439.0" stroke="#0ffff0"/>
<path d="M967.2 439.0L970.5 436.2L974.5 433.5L979.9 432.2L984.6 430.2L990.9 429.3L997.7 429.2L1004.6 429.9L1012.1 430.5" stroke="#00f0ff"/>
<path d="M928.1 501.1L938.1 494.7" stroke="#ff2400"/>
<path d="M938.1 494.7L948.0 486.6" stroke="#ff4200"/>
<path d="M948.0 486.6L957.5 480.0" stroke="#ff8000"/>
<path d="M957.5 480.0L966.5 474.1" stroke="#ff9e00"/>
<path d="M966.5 474.1L976.0 468.2" stroke="#ffdb00"/>
<path d="M976.0 468.2L984.5 461.7" stroke="#fffa00"/>
<path d="M984.5 461.7L993.2 456.3" stroke="#e5ff1a"/>
<path d="M993.2 456.3L1002.2 451.5" stroke="#c7ff38"/>
<path d="M1002.2 451.5L1010.5 446.7" stroke="#a8ff57"/>
<path d="M1010.5 446.7L1018.9 443.7" stroke="#8aff75"/>
<path d="M1018.9 443.7L1026.4 439.9" stroke="#6bff94"/>
<path d="M1026.4 439.9L1034.3 436.4L1042.2 434.5" stroke="#4cffb3"/>
<path d="M1042.2 434.5L1050.1 433.5L1057.4 433.2L1063.9 432.2" stroke="#2effd1"/>
<path d="M930.4 506.9L938.1 499.8L944.6 492.8" stroke="#ff0500"/>
<path d="M944.6 492.8L951.0 485.0" stroke="#ff4200"/>
<path d="M951.0 485.0L957.7 478.3" stroke="#ff6100"/>
<path d="M957.7 478.3L963.5 471.9" stroke="#ff9e00"/>
<path d="M963.5 471.9L969.4 466.0" stroke="#ffdb00"/>
<path d="M969.4 466.0L975.4 460.5" stroke="#fffa00"/>
<path d="M975.4 460.5L980.7 456.2" stroke="#e5ff1a"/>
<path d="M980.7 456.2L985.4 450.6" stroke="#c7ff38"/>
<path d="M985.4 450.6L990.2 447.1" stroke="#8aff75"/>
<path d="M990.2 447.1L994.5 443.1L997.8 440.3" stroke="#6bff94"/>
<path d="M997.8 440.3L1001.0 437.7" stroke="#4cffb3"/>
<path d="M1001.0 437.7L1003.1 435.4L1005.3 433.6" stroke="#2effd1"/>
<path d="M1005.3 433.6L1006.0 432.9" stroke="#0ffff0"/>
<path d="M936.4 496.4L946.7 489.7" stroke="#ff4200"/>
<path d="M946.7 489.7L956.1 482.9" stroke="#ff6100"/>
<path d="M956.1 482.9L966.3 477.5" stroke="#ff9e00"/>
<path d="M966.3 477.5L976.1 471.8" stroke="#ffbd00"/>
<path d="M976.1 471.8L984.7 465.9" stroke="#ffdb00"/>
<path d="M984.7 465.9L994.1 461.1" stroke="#fffa00"/>
<path d="M994.1 461.1L1002.8 456.5" stroke="#e5ff1a"/>
<path d="M1002.8 456.5L1011.6 451.4" stroke="#c7ff38"/>
<path d="M1011.6 451.4L1020.0 447.4" stroke="#a8ff57"/>
<path d="M1020.0 447.4L1028.7 443.4" stroke="#8aff75"/>
<path d="M1028.7 443.4L1036.0 440.4L1043.9 437.8" stroke="#6bff94"/>
<path d="M1043.9 437.8L1050.7 436.1" stroke="#4cffb3"/>
<path d="M1050.7 436.1L1058.3 434.9L1064.9 433.4" stroke="#2effd1"/>
<path d="M1064.9 433.4L1071.3 433.7" stroke="#0ffff0"/>
<path d="M948.3 499.2L954.7 492.9" stroke="#e60000"/>
<path d="M954.7 492.9L959.5 485.9" stroke="#ff0500"/>
<path d="M959.5 485.9L965.7 480.2" stroke="#ff4200"/>
<path d="M965.7 480.2L970.3 474.1" stroke="#ff6100"/>
<path d="M970.3 474.1L975.7 468.1" stroke="#ff9e00"/>
<path d="M975.7 468.1L981.2 462.2" stroke="#ffbd00"/>
<path d="M981.2 462.2L986.6 457.5" stroke="#ffdb00"/>
<path d="M986.6 457.5L990.7 453.4" stroke="#fffa00"/>
<path d="M990.7 453.4L995.4 448.3" stroke="#c7ff38"/>
<path d="M995.4 448.3L1000.5 445.1L1005.2 442.1" stroke="#a8ff57"/>
<path d="M1005.2 442.1L1008.7 438.4" stroke="#8aff75"/>
<path d="M1008.7 438.4L1013.2 436.7L1016.7 435.5L1020.3 434.0" stroke="#6bff94"/>
<path d="M1020.3 434.0L1023.7 433.8" stroke="#4cffb3"/>
<path d="M962.9 498.6L964.3 489.2" stroke="#e60000"/>
<path d="M964.3 489.2L967.0 480.7" stroke="#ff2400"/>
<path d="M967.0 480.7L968.4 472.5" stroke="#ff6100"/>
<path d="M968.4 472.5L970.8 465.6" stroke="#ff9e00"/>
<path d="M970.8 465.6L974.0 459.7" stroke="#ffdb00"/>
<path d="M974.0 459.7L975.6 453.9" stroke="#fffa00"/>
<path d="M975.6 453.9L978.0 448.6" stroke="#c7ff38"/>
<path d="M978.0 448.6L980.7 445.3" stroke="#a8ff57"/>
<path d="M980.7 445.3L982.5 441.4" stroke="#8aff75"/>
<path d="M982.5 441.4L985.0 439.0" stroke="#6bff94"/>
<path d="M985.0 439.0L986.8 436.1" stroke="#4cffb3"/>
<path d="M986.8 436.1L988.2 434.6L990.6 434.0L991.8 433.3L992.7 433.1L994.1 434.1" stroke="#2effd1"/>
<path d="M956.9 494.3L959.2 485.8" stroke="#ff6100"/>
<path d="M959.2 485.8L961.3 478.1" stroke="#ff9e00"/>
<path d="M961.3 478.1L963.5 471.6" stroke="#ffdb00"/>
<path d="M963.5 471.6L965.3 465.0" stroke="#e5ff1a"/>
<path d="M965.3 465.0L967.8 459.2" stroke="#a8ff57"/>
<path d="M967.8 459.2L970.5 454.6" stroke="#6bff94"/>
<path d="M970.5 454.6L973.5 450.0" stroke="#4cffb3"/>
<path d="M973.5 450.0L977.4 446.9" stroke="#2effd1"/>
<path d="M977.4 446.9L981.0 443.9L984.9 441.1" stroke="#0ffff0"/>
<path d="M984.9 441.1L989.4 438.7L994.4 437.7L1001.0 436.0L1006.8 435.1L1013.5 435.4L1021.9 434.8" stroke="#00f0ff"/>
<path d="M918.6 514.9L919.7 503.6" stroke="#ff0500"/>
<path d="M919.7 503.6L921.2 492.7" stroke="#ff2400"/>
<path d="M921.2 492.7L922.9 483.1" stroke="#ff4200"/>
<path d="M922.9 483.1L925.7 474.6" stroke="#ff8000"/>
<path d="M925.7 474.6L929.4 466.7" stroke="#ff9e00"/>
<path d="M929.4 466.7L933.7 460.9" stroke="#ffbd00"/>
<path d="M933.7 460.9L939.1 454.3" stroke="#fffa00"/>
<path d="M939.1 454.3L946.1 449.2" stroke="#c7ff38"/>
<path d="M946.1 449.2L955.6 445.6" stroke="#8aff75"/>
<path d="M955.6 445.6L965.6 441.9" stroke="#2effd1"/>
<path d="M965.6 441.9L978.9 439.0L993.4 437.1" stroke="#00f0ff"/>
<path d="M993.4 437.1L1011.2 436.4" stroke="#0ffff0"/>
<path d="M1011.2 436.4L1031.3 435.6L1054.8 435.1L1080.2 435.8" stroke="#2effd1"/>
<path d="M962.1 489.3L963.8 480.6" stroke="#c70000"/>
<path d="M963.8 480.6L965.9 473.3" stroke="#ff2400"/>
<path d="M965.9 473.3L968.3 467.1" stroke="#ff4200"/>
<path d="M968.3 467.1L970.0 461.5" stroke="#ff8000"/>
<path d="M970.0 461.5L971.7 455.8" stroke="#ffbd00"/>
<path d="M971.7 455.8L973.3 451.2" stroke="#ffdb00"/>
<path d="M973.3 451.2L975.3 446.4" stroke="#e5ff1a"/>
<path d="M975.3 446.4L976.9 443.2" stroke="#c7ff38"/>
<path d="M976.9 443.2L978.7 440.7L980.5 438.3" stroke="#a8ff57"/>
<path d="M980.5 438.3L982.2 437.0L983.0 435.1" stroke="#8aff75"/>
<path d="M983.0 435.1L984.3 434.6L986.5 434.9" stroke="#6bff94"/>
<path d="M986.5 434.9L987.1 435.6L988.2 436.5" stroke="#8aff75"/>
<path d="M935.3 503.2L936.3 494.4" stroke="#ff2400"/>
<path d="M936.3 494.4L936.7 485.6" stroke="#ff6100"/>
<path d="M936.7 485.6L938.3 478.4" stroke="#ff8000"/>
<path d="M938.3 478.4L940.2 470.9" stroke="#ff9e00"/>
<path d="M940.2 470.9L943.3 465.2" stroke="#ffdb00"/>
<path d="M943.3 465.2L946.0 459.6" stroke="#fffa00"/>
<path d="M946.0 459.6L949.2 454.7" stroke="#c7ff38"/>
<path d="M949.2 454.7L953.1 450.8" stroke="#8aff75"/>
<path d="M953.1 450.8L957.7 447.2" stroke="#6bff94"/>
<path d="M957.7 447.2L962.3 444.5" stroke="#2effd1"/>
<path d="M962.3 444.5L968.5 442.7L974.5 441.3L982.6 439.3L990.0 438.9" stroke="#00f0ff"/>
<path d="M990.0 438.9L999.7 437.6L1009.3 438.1" stroke="#0ffff0"/>
<path d="M928.6 506.8L937.7 499.7L947.7 493.8" stroke="#e60000"/>
<path d="M947.7 493.8L958.3 486.7" stroke="#ff0500"/>
<path d="M958.3 486.7L967.3 480.2" stroke="#ff2400"/>
<path d="M967.3 480.2L977.0 474.6" stroke="#ff4200"/>
<path d="M977.0 474.6L986.9 469.1" stroke="#ff6100"/>
<path d="M986.9 469.1L995.8 463.4" stroke="#ff8000"/>
<path d="M995.8 463.4L1004.7 458.5" stroke="#ff9e00"/>
<path d="M1004.7 458.5L1013.2 454.4" stroke="#ffbd00"/>
<path d="M1013.2 454.4L1021.6 450.0" stroke="#ffdb00"/>
<path d="M1021.6 450.0L1029.2 446.3L1036.0 443.7" stroke="#fffa00"/>
<path d="M1036.0 443.7L1043.1 440.9" stroke="#e5ff1a"/>
<path d="M1043.1 440.9L1049.1 439.6L1055.5 438.9" stroke="#c7ff38"/>
<path d="M1055.5 438.9L1059.6 437.7" stroke="#a8ff57"/>
<path d="M941.1 491.6L942.5 484.5" stroke="#ff2400"/>
<path d="M942.5 484.5L945.0 477.5" stroke="#ff4200"/>
<path d="M945.0 477.5L946.3 470.9" stroke="#ff6100"/>
<path d="M946.3 470.9L948.3 466.1" stroke="#ff8000"/>
<path d="M948.3 466.1L951.0 461.1" stroke="#ffbd00"/>
<path d="M951.0 461.1L954.4 455.9" stroke="#ffdb00"/>
<path d="M954.4 455.9L957.1 452.2" stroke="#e5ff1a"/>
<path d="M957.1 452.2L961.3 449.4" stroke="#c7ff38"/>
<path d="M961.3 449.4L965.1 446.1" stroke="#8aff75"/>
<path d="M965.1 446.1L969.9 443.8L975.7 441.6L981.7 440.9L988.3 439.8L996.1 438.2L1004.6 437.9" stroke="#6bff94"/>
<path d="M1004.6 437.9L1013.6 437.8" stroke="#8aff75"/>
<path d="M955.9 501.0L961.7 495.2" stroke="#8a0000"/>
<path d="M961.7 495.2L966.4 489.6" stroke="#a80000"/>
<path d="M966.4 489.6L972.4 483.4" stroke="#c70000"/>
<path d="M972.4 483.4L977.1 477.8" stroke="#e60000"/>
<path d="M977.1 477.8L983.1 472.8" stroke="#ff0500"/>
<path d="M983.1 472.8L989.7 468.2" stroke="#ff2400"/>
<path d="M989.7 468.2L995.9 463.0" stroke="#ff4200"/>
<path d="M995.9 463.0L1002.0 459.6" stroke="#ff6100"/>
<path d="M1002.0 459.6L1009.3 455.1" stroke="#ff8000"/>
<path d="M1009.3 455.1L1016.6 451.3" stroke="#ff9e00"/>
<path d="M1016.6 451.3L1025.2 448.7L1034.0 446.0" stroke="#ffbd00"/>
<path d="M1034.0 446.0L1043.4 442.9L1054.1 441.3" stroke="#ffdb00"/>
<path d="M1054.1 441.3L1065.0 439.8" stroke="#fffa00"/>
<path d="M1065.0 439.8L1076.8 438.3" stroke="#e5ff1a"/>
<path d="M954.9 494.7L955.2 486.1" stroke="#e60000"/>
<path d="M955.2 486.1L956.3 478.5" stroke="#ff2400"/>
<path d="M956.3 478.5L957.7 472.1" stroke="#ff6100"/>
<path d="M957.7 472.1L958.5 466.1" stroke="#ff8000"/>
<path d="M958.5 466.1L959.6 460.2" stroke="#ffbd00"/>
<path d="M959.6 460.2L962.3 455.9" stroke="#fffa00"/>
<path d="M962.3 455.9L964.3 451.5" stroke="#e5ff1a"/>
<path d="M964.3 451.5L967.2 448.2" stroke="#a8ff57"/>
<path d="M967.2 448.2L970.4 445.6L974.1 443.1" stroke="#8aff75"/>
<path d="M974.1 443.1L978.1 440.9L982.6 439.8L987.9 439.2L994.2 438.0" stroke="#6bff94"/>
<path d="M994.2 438.0L1000.7 438.8L1007.9 439.7" stroke="#8aff75"/>
<path d="M931.9 506.9L934.4 497.6" stroke="#c70000"/>
<path d="M934.4 497.6L936.3 488.2" stroke="#e60000"/>
<path d="M936.3 488.2L938.6 480.3" stroke="#ff0500"/>
<path d="M938.6 480.3L941.4 473.1" stroke="#ff4200"/>
<path d="M941.4 473.1L943.9 466.9" stroke="#ff6100"/>
<path d="M943.9 466.9L946.4 460.5" stroke="#ff8000"/>
<path d="M946.4 460.5L950.2 456.4" stroke="#ffbd00"/>
<path d="M950.2 456.4L953.6 451.5" stroke="#ffdb00"/>
<path d="M953.6 451.5L956.6 448.5" stroke="#fffa00"/>
<path d="M956.6 448.5L961.2 444.9" stroke="#c7ff38"/>
<path d="M961.2 444.9L965.8 443.2" stroke="#a8ff57"/>
<path d="M965.8 443.2L969.6 441.4L975.1 439.8L981.3 440.0L986.7 439.2" stroke="#8aff75"/>
<path d="M986.7 439.2L993.5 439.5" stroke="#a8ff57"/>
<path d="M944.6 494.8L949.8 489.0" stroke="#ff2400"/>
<path d="M949.8 489.0L954.6 483.5" stroke="#ff4200"/>
<path d="M954.6 483.5L959.9 478.4" stroke="#ff6100"/>
<path d="M959.9 478.4L964.6 473.0" stroke="#ff9e00"/>
<path d="M964.6 473.0L968.6 467.3" stroke="#ffbd00"/>
<path d="M968.6 467.3L973.6 463.1" stroke="#ffdb00"/>
<path d="M973.6 463.1L978.6 458.3" stroke="#fffa00"/>
<path d="M978.6 458.3L983.9 454.3" stroke="#e5ff1a"/>
<path d="M983.9 454.3L988.1 450.4" stroke="#c7ff38"/>
<path d="M988.1 450.4L993.5 448.0" stroke="#a8ff57"/>
<path d="M993.5 448.0L999.7 444.5L1004.8 442.5L1011.4 441.6" stroke="#8aff75"/>
<path d="M1011.4 441.6L1017.3 439.5L1024.8 440.0" stroke="#6bff94"/>
<path d="M1024.8 440.0L1031.6 439.4" stroke="#8aff75"/>
<path d="M956.8 497.7L957.8 488.7" stroke="#a80000"/>
<path d="M957.8 488.7L959.2 481.5" stroke="#e60000"/>
<path d="M959.2 481.5L960.6 474.7" stroke="#ff0500"/>
<path d="M960.6 474.7L962.2 468.9" stroke="#ff4200"/>
<path d="M962.2 468.9L964.4 462.6" stroke="#ff8000"/>
<path d="M964.4 462.6L967.7 458.7" stroke="#ff9e00"/>
<path d="M967.7 458.7L970.5 454.4" stroke="#ffbd00"/>
<path d="M970.5 454.4L973.8 450.8L977.4 446.9" stroke="#fffa00"/>
<path d="M977.4 446.9L982.1 445.4L987.3 442.5" stroke="#e5ff1a"/>
<path d="M987.3 442.5L992.3 441.9L999.3 441.1" stroke="#c7ff38"/>
<path d="M999.3 441.1L1007.1 440.0L1015.0 440.0L1024.2 439.8" stroke="#e5ff1a"/>
<path d="M938.7 503.1L944.0 497.5" stroke="#c70000"/>
<path d="M944.0 497.5L948.9 491.0" stroke="#e60000"/>
<path d="M948.9 491.0L953.2 485.0" stroke="#ff0500"/>
<path d="M953.2 485.0L958.4 479.3" stroke="#ff2400"/>
<path d="M958.4 479.3L962.4 473.2" stroke="#ff4200"/>
<path d="M962.4 473.2L967.1 468.4" stroke="#ff8000"/>
<path d="M967.1 468.4L971.1 463.5" stroke="#ff9e00"/>
<path d="M971.1 463.5L975.4 459.6" stroke="#ffbd00"/>
<path d="M975.4 459.6L979.7 455.6" stroke="#ffdb00"/>
<path d="M979.7 455.6L982.3 452.1" stroke="#fffa00"/>
<path d="M982.3 452.1L986.3 448.8" stroke="#e5ff1a"/>
<path d="M986.3 448.8L989.3 445.6L991.8 443.0" stroke="#c7ff38"/>
<path d="M991.8 443.0L994.7 441.3L996.9 441.2L998.8 440.3" stroke="#a8ff57"/>
<path d="M958.2 496.9L961.4 488.4" stroke="#e60000"/>
<path d="M961.4 488.4L964.2 479.4" stroke="#ff2400"/>
<path d="M964.2 479.4L967.7 473.1" stroke="#ff8000"/>
<path d="M967.7 473.1L971.3 466.7" stroke="#ff9e00"/>
<path d="M971.3 466.7L974.4 460.3" stroke="#ffdb00"/>
<path d="M974.4 460.3L978.5 456.1" stroke="#fffa00"/>
<path d="M978.5 456.1L982.6 451.7" stroke="#e5ff1a"/>
<path d="M982.6 451.7L986.6 448.3" stroke="#c7ff38"/>
<path d="M986.6 448.3L991.0 444.9" stroke="#a8ff57"/>
<path d="M991.0 444.9L995.5 442.4L999.5 440.6L1005.0 440.2L1010.6 438.7L1016.7 438.4L1022.6 439.3" stroke="#8aff75"/>
<path d="M1022.6 439.3L1029.1 440.5" stroke="#a8ff57"/>
<path d="M948.2 496.7L955.2 491.5" stroke="#a80000"/>
<path d="M955.2 491.5L962.2 485.7" stroke="#c70000"/>
<path d="M962.2 485.7L969.5 480.1" stroke="#e60000"/>
<path d="M969.5 480.1L976.9 476.3" stroke="#ff0500"/>
<path d="M976.9 476.3L984.4 471.3" stroke="#ff2400"/>
<path d="M984.4 471.3L992.5 466.7L1000.6 462.4" stroke="#ff4200"/>
<path d="M1000.6 462.4L1008.9 458.8" stroke="#ff6100"/>
<path d="M1008.9 458.8L1018.4 455.9L1027.7 452.5" stroke="#ff8000"/>
<path d="M1027.7 452.5L1037.9 449.8L1047.7 446.5" stroke="#ff9e00"/>
<path d="M1047.7 446.5L1059.8 445.2" stroke="#ffbd00"/>
<path d="M1059.8 445.2L1072.1 443.3" stroke="#ffdb00"/>
<path d="M1072.1 443.3L1084.1 441.6" stroke="#fffa00"/>
<path d="M1084.1 441.6L1098.4 440.6" stroke="#a8ff57"/>
<path d="M960.5 487.7L962.4 480.2" stroke="#ff6100"/>
<path d="M962.4 480.2L964.8 474.2" stroke="#ff9e00"/>
<path d="M964.8 474.2L966.2 469.0" stroke="#ffdb00"/>
<path d="M966.2 469.0L969.2 463.4" stroke="#fffa00"/>
<path d="M969.2 463.4L972.7 459.4" stroke="#c7ff38"/>
<path d="M972.7 459.4L977.0 455.4L982.6 452.3" stroke="#a8ff57"/>
<path d="M982.6 452.3L988.7 449.2L995.1 446.5" stroke="#8aff75"/>
<path d="M995.1 446.5L1003.2 444.1L1012.8 441.9L1024.6 440.8L1036.7 440.5" stroke="#6bff94"/>
<path d="M1036.7 440.5L1050.0 440.5L1065.7 440.7" stroke="#8aff75"/>
<path d="M1065.7 440.7L1084.0 440.8" stroke="#6bff94"/>
<path d="M942.5 490.8L943.7 483.9" stroke="#ff6100"/>
<path d="M943.7 483.9L944.7 478.6" stroke="#ff8000"/>
<path d="M944.7 478.6L946.2 471.8" stroke="#ff9e00"/>
<path d="M946.2 471.8L947.8 467.2" stroke="#ffdb00"/>
<path d="M947.8 467.2L949.2 462.6" stroke="#fffa00"/>
<path d="M949.2 462.6L951.6 457.9" stroke="#e5ff1a"/>
<path d="M951.6 457.9L953.9 454.0" stroke="#c7ff38"/>
<path d="M953.9 454.0L956.4 451.5" stroke="#8aff75"/>
<path d="M956.4 451.5L959.6 448.6" stroke="#6bff94"/>
<path d="M959.6 448.6L963.1 445.6" stroke="#4cffb3"/>
<path d="M963.1 445.6L966.6 444.8L971.7 443.4L976.4 441.4L981.4 440.8L987.7 441.4" stroke="#0ffff0"/>
<path d="M987.7 441.4L994.5 441.3" stroke="#2effd1"/>
<path d="M945.0 490.4L950.5 485.4" stroke="#e60000"/>
<path d="M950.5 485.4L956.7 481.2" stroke="#ff0500"/>
<path d="M956.7 481.2L962.5 477.5" stroke="#ff2400"/>
<path d="M962.5 477.5L968.6 473.1L975.2 468.2" stroke="#ff4200"/>
<path d="M975.2 468.2L981.4 465.0" stroke="#ff6100"/>
<path d="M981.4 465.0L989.3 460.8" stroke="#ff8000"/>
<path d="M989.3 460.8L996.6 457.7L1004.5 455.3L1012.9 451.9" stroke="#ff9e00"/>
<path d="M1012.9 451.9L1021.3 450.2L1031.6 448.0L1041.4 445.0" stroke="#ffbd00"/>
<path d="M1041.4 445.0L1052.1 444.4L1063.4 442.5" stroke="#ffdb00"/>
<path d="M1063.4 442.5L1075.7 442.2" stroke="#fffa00"/>
<path d="M947.2 503.1L948.7 494.3" stroke="#e60000"/>
<path d="M948.7 494.3L950.7 486.6" stroke="#ff2400"/>
<path d="M950.7 486.6L953.3 478.5" stroke="#ff4200"/>
<path d="M953.3 478.5L956.2 471.7" stroke="#ff8000"/>
<path d="M956.2 471.7L959.9 466.6" stroke="#ffbd00"/>
<path d="M959.9 466.6L964.5 461.2" stroke="#ffdb00"/>
<path d="M964.5 461.2L970.3 456.0" stroke="#e5ff1a"/>
<path d="M970.3 456.0L977.8 451.5" stroke="#c7ff38"/>
<path d="M977.8 451.5L985.9 448.8L995.8 446.5L1007.2 443.5L1019.7 442.3L1034.8 441.5" stroke="#a8ff57"/>
<path d="M1034.8 441.5L1051.5 441.3" stroke="#c7ff38"/>
<path d="M1051.5 441.3L1070.9 440.7" stroke="#a8ff57"/>
<path d="M1070.9 440.7L1091.9 442.5" stroke="#8aff75"/>
<path d="M948.3 497.0L953.4 491.8" stroke="#e60000"/>
<path d="M953.4 491.8L958.7 486.4" stroke="#ff0500"/>
<path d="M958.7 486.4L965.1 480.9" stroke="#ff2400"/>
<path d="M965.1 480.9L970.1 476.2" stroke="#ff4200"/>
<path d="M970.1 476.2L976.5 472.6L983.8 468.0" stroke="#ff6100"/>
<path d="M983.8 468.0L990.7 464.2" stroke="#ff8000"/>
<path d="M990.7 464.2L998.8 459.9L1008.1 457.2" stroke="#ff9e00"/>
<path d="M1008.1 457.2L1018.0 454.3L1028.2 450.9" stroke="#ffbd00"/>
<path d="M1028.2 450.9L1040.1 448.6L1053.1 447.0" stroke="#ffdb00"/>
<path d="M1053.1 447.0L1068.2 445.1" stroke="#fffa00"/>
<path d="M1068.2 445.1L1083.9 443.9" stroke="#e5ff1a"/>
<path d="M1083.9 443.9L1101.7 442.7" stroke="#8aff75"/>
<path d="M928.5 506.6L936.2 500.2L944.6 494.6L952.6 488.6" stroke="#c70000"/>
<path d="M952.6 488.6L959.8 483.7" stroke="#e60000"/>
<path d="M959.8 483.7L967.7 478.3" stroke="#ff0500"/>
<path d="M967.7 478.3L974.8 473.5" stroke="#ff2400"/>
<path d="M974.8 473.5L981.1 468.4" stroke="#ff4200"/>
<path d="M981.1 468.4L987.4 464.1" stroke="#ff6100"/>
<path d="M987.4 464.1L994.3 459.8" stroke="#ff8000"/>
<path d="M994.3 459.8L999.1 456.2L1004.2 452.8" stroke="#ff9e00"/>
<path d="M1004.2 452.8L1008.8 449.8" stroke="#ffbd00"/>
<path d="M1008.8 449.8L1013.5 447.6L1016.9 445.2" stroke="#ffdb00"/>
<path d="M1016.9 445.2L1019.1 443.0L1021.4 442.4" stroke="#fffa00"/>
<path d="M938.8 501.9L946.1 495.8" stroke="#ff2400"/>
<path d="M946.1 495.8L952.9 490.0" stroke="#ff4200"/>
<path d="M952.9 490.0L960.1 484.5" stroke="#ff6100"/>
<path d="M960.1 484.5L967.3 479.8" stroke="#ff9e00"/>
<path d="M967.3 479.8L973.9 474.6" stroke="#ffbd00"/>
<path d="M973.9 474.6L979.4 469.5" stroke="#ffdb00"/>
<path d="M979.4 469.5L986.0 465.4L991.5 461.3" stroke="#fffa00"/>
<path d="M991.5 461.3L996.2 457.0" stroke="#e5ff1a"/>
<path d="M996.2 457.0L1001.5 454.3" stroke="#c7ff38"/>
<path d="M1001.5 454.3L1006.6 451.1" stroke="#a8ff57"/>
<path d="M1006.6 451.1L1010.0 447.9L1014.0 446.3" stroke="#8aff75"/>
<path d="M1014.0 446.3L1017.5 444.4L1019.4 443.2L1021.3 443.6" stroke="#6bff94"/>
<path d="M922.8 511.9L927.1 502.3L932.8 493.3" stroke="#c70000"/>
<path d="M932.8 493.3L939.2 485.3" stroke="#e60000"/>
<path d="M939.2 485.3L944.5 477.8" stroke="#ff0500"/>
<path d="M944.5 477.8L950.6 471.4" stroke="#ff2400"/>
<path d="M950.6 471.4L956.8 465.8" stroke="#ff6100"/>
<path d="M956.8 465.8L963.7 460.9" stroke="#ff8000"/>
<path d="M963.7 460.9L969.9 456.7" stroke="#ffbd00"/>
<path d="M969.9 456.7L976.7 452.3" stroke="#ffdb00"/>
<path d="M976.7 452.3L983.5 449.5L989.6 446.8L996.8 445.3L1003.0 444.7L1009.6 443.9L1016.2 443.1L1023.2 443.8" stroke="#fffa00"/>
<path d="M940.6 502.3L942.9 493.9" stroke="#ff2400"/>
<path d="M942.9 493.9L945.7 486.0" stroke="#ff4200"/>
<path d="M945.7 486.0L948.8 478.9" stroke="#ff6100"/>
<path d="M948.8 478.9L953.1 472.5" stroke="#ff9e00"/>
<path d="M953.1 472.5L958.1 467.8" stroke="#ffdb00"/>
<path d="M958.1 467.8L964.1 462.1" stroke="#fffa00"/>
<path d="M964.1 462.1L970.6 458.0" stroke="#c7ff38"/>
<path d="M970.6 458.0L979.5 454.9L989.6 451.4L1001.5 448.9L1015.1 446.9L1030.7 444.9L1048.1 444.1L1069.1 444.0" stroke="#a8ff57"/>
<path d="M1069.1 444.0L1091.3 443.3" stroke="#8aff75"/>
<path d="M1091.3 443.3L1117.0 443.3" stroke="#00f0ff"/>
<path d="M948.6 499.9L950.9 491.4" stroke="#ff2400"/>
<path d="M950.9 491.4L953.8 484.3" stroke="#ff6100"/>
<path d="M953.8 484.3L956.7 477.6" stroke="#ff9e00"/>
<path d="M956.7 477.6L960.4 471.9" stroke="#ffbd00"/>
<path d="M960.4 471.9L964.6 467.1" stroke="#fffa00"/>
<path d="M964.6 467.1L969.2 462.2" stroke="#e5ff1a"/>
<path d="M969.2 462.2L974.7 457.8" stroke="#c7ff38"/>
<path d="M974.7 457.8L980.9 454.7" stroke="#a8ff57"/>
<path d="M980.9 454.7L988.0 451.6L996.8 449.4L1006.6 446.8L1017.7 445.0L1029.8 444.1L1044.2 443.9L1059.4 444.0L1077.6 443.8" stroke="#8aff75"/>
<path d="M922.5 501.9L922.2 492.9" stroke="#ff0500"/>
<path d="M922.2 492.9L922.4 485.9" stroke="#ff2400"/>
<path d="M922.4 485.9L924.0 479.0" stroke="#ff4200"/>
<path d="M924.0 479.0L925.4 472.7" stroke="#ff6100"/>
<path d="M925.4 472.7L927.4 467.4L930.0 462.6" stroke="#ff8000"/>
<path d="M930.0 462.6L933.8 458.4" stroke="#ff9e00"/>
<path d="M933.8 458.4L937.9 455.0" stroke="#ffbd00"/>
<path d="M937.9 455.0L944.4 451.7" stroke="#fffa00"/>
<path d="M944.4 451.7L951.9 449.3" stroke="#e5ff1a"/>
<path d="M951.9 449.3L959.8 447.4" stroke="#a8ff57"/>
<path d="M959.8 447.4L970.3 445.6" stroke="#6bff94"/>
<path d="M970.3 445.6L982.9 444.6L996.7 444.0" stroke="#8aff75"/>
<path d="M996.7 444.0L1012.4 444.8" stroke="#a8ff57"/>
<path d="M1012.4 444.8L1030.1 444.9" stroke="#c7ff38"/>
<path d="M938.2 502.8L943.5 496.4" stroke="#ff0500"/>
<path d="M943.5 496.4L947.6 490.8" stroke="#ff2400"/>
<path d="M947.6 490.8L951.5 485.2" stroke="#ff4200"/>
<path d="M951.5 485.2L956.1 480.6" stroke="#ff6100"/>
<path d="M956.1 480.6L959.9 475.3" stroke="#ff8000"/>
<path d="M959.9 475.3L964.3 470.6" stroke="#ffbd00"/>
<path d="M964.3 470.6L968.4 466.3" stroke="#ffdb00"/>
<path d="M968.4 466.3L971.7 462.7" stroke="#fffa00"/>
<path d="M971.7 462.7L975.4 458.2" stroke="#e5ff1a"/>
<path d="M975.4 458.2L978.6 455.7L981.1 452.5" stroke="#c7ff38"/>
<path d="M981.1 452.5L984.3 449.7" stroke="#a8ff57"/>
<path d="M984.3 449.7L986.4 447.6L988.7 446.4" stroke="#8aff75"/>
<path d="M988.7 446.4L990.7 445.3L992.1 445.1" stroke="#6bff94"/>
<path d="M924.0 515.1L931.4 508.0L939.6 500.0" stroke="#e60000"/>
<path d="M939.6 500.0L947.1 493.6" stroke="#ff0500"/>
<path d="M947.1 493.6L955.0 486.9" stroke="#ff2400"/>
<path d="M955.0 486.9L962.3 480.8" stroke="#ff4200"/>
<path d="M962.3 480.8L969.8 474.9" stroke="#ff6100"/>
<path d="M969.8 474.9L977.2 468.9" stroke="#ff8000"/>
<path d="M977.2 468.9L984.5 464.0" stroke="#ffbd00"/>
<path d="M984.5 464.0L991.5 459.5L998.7 455.7" stroke="#ffdb00"/>
<path d="M998.7 455.7L1004.5 452.6" stroke="#fffa00"/>
<path d="M1004.5 452.6L1010.9 448.7L1018.0 446.9" stroke="#e5ff1a"/>
<path d="M1018.0 446.9L1023.3 445.4L1029.6 445.5" stroke="#c7ff38"/>
<path d="M1029.6 445.5L1034.8 444.8" stroke="#e5ff1a"/>
<path d="M932.3 503.3L933.9 495.3" stroke="#c70000"/>
<path d="M933.9 495.3L936.2 487.8" stroke="#e60000"/>
<path d="M936.2 487.8L938.3 480.8" stroke="#ff0500"/>
<path d="M938.3 480.8L941.4 474.6" stroke="#ff4200"/>
<path d="M941.4 474.6L944.7 468.7" stroke="#ff6100"/>
<path d="M944.7 468.7L950.1 463.6" stroke="#ff8000"/>
<path d="M950.1 463.6L957.1 459.8" stroke="#ff9e00"/>
<path d="M957.1 459.8L964.6 456.2" stroke="#ffdb00"/>
<path d="M964.6 456.2L975.3 453.0L987.2 450.3L1001.3 448.5" stroke="#fffa00"/>
<path d="M1001.3 448.5L1018.5 447.7L1037.9 446.8L1060.9 446.4L1087.1 445.9" stroke="#ffdb00"/>
<path d="M1087.1 445.9L1116.2 446.4" stroke="#a8ff57"/>
<path d="M959.1 497.1L960.3 490.0" stroke="#a80000"/>
<path d="M960.3 490.0L962.0 482.3" stroke="#e60000"/>
<path d="M962.0 482.3L963.9 476.5" stroke="#ff2400"/>
<path d="M963.9 476.5L966.5 470.4" stroke="#ff4200"/>
<path d="M966.5 470.4L970.2 465.5" stroke="#ff8000"/>
<path d="M970.2 465.5L973.4 461.2" stroke="#ff9e00"/>
<path d="M973.4 461.2L979.0 457.1" stroke="#ffbd00"/>
<path d="M979.0 457.1L984.3 453.6L991.7 451.1L1000.2 448.2" stroke="#ffdb00"/>
<path d="M1000.2 448.2L1010.2 446.3L1021.3 445.6" stroke="#fffa00"/>
<path d="M1021.3 445.6L1035.0 445.1L1050.6 445.5L1068.6 445.8L1089.2 446.4" stroke="#ffdb00"/>
<path d="M959.3 491.1L961.6 484.6" stroke="#c70000"/>
<path d="M961.6 484.6L964.6 480.1" stroke="#e60000"/>
<path d="M964.6 480.1L967.7 474.4" stroke="#ff2400"/>
<path d="M967.7 474.4L970.8 470.0" stroke="#ff4200"/>
<path d="M970.8 470.0L974.4 466.6" stroke="#ff6100"/>
<path d="M974.4 466.6L978.1 462.7" stroke="#ff8000"/>
<path d="M978.1 462.7L983.3 459.2L988.7 456.7" stroke="#ff9e00"/>
<path d="M988.7 456.7L994.3 454.3L1001.2 452.6L1008.8 450.9L1017.3 449.7L1026.0 448.5L1036.5 447.4L1048.8 446.9L1061.4 446.1" stroke="#ffbd00"/>
<path d="M949.5 494.5L952.5 489.7" stroke="#ff6100"/>
<path d="M952.5 489.7L955.8 485.9" stroke="#ff8000"/>
<path d="M955.8 485.9L960.6 480.7" stroke="#ff9e00"/>
<path d="M960.6 480.7L963.8 476.8" stroke="#ffbd00"/>
<path d="M963.8 476.8L969.2 471.8" stroke="#ffdb00"/>
<path d="M969.2 471.8L974.6 468.0" stroke="#fffa00"/>
<path d="M974.6 468.0L980.1 465.2" stroke="#e5ff1a"/>
<path d="M980.1 465.2L987.5 461.1L995.0 458.8L1003.9 455.7" stroke="#c7ff38"/>
<path d="M1003.9 455.7L1013.5 452.7L1024.8 451.2L1037.8 449.5L1052.0 448.3" stroke="#a8ff57"/>
<path d="M1052.0 448.3L1067.7 447.3L1085.3 447.0" stroke="#8aff75"/>
<path d="M959.3 488.4L961.7 482.2" stroke="#ff4200"/>
<path d="M961.7 482.2L964.2 476.6" stroke="#ff8000"/>
<path d="M964.2 476.6L966.8 471.2" stroke="#ff9e00"/>
<path d="M966.8 471.2L970.9 467.0" stroke="#ffbd00"/>
<path d="M970.9 467.0L975.1 463.4" stroke="#ffdb00"/>
<path d="M975.1 463.4L980.2 459.8" stroke="#fffa00"/>
<path d="M980.2 459.8L985.9 456.6L993.3 454.7L1001.2 451.8L1010.8 450.2L1021.9 449.2L1034.4 448.2L1048.5 447.7L1064.1 446.8L1082.1 446.6" stroke="#e5ff1a"/>
<path d="M1082.1 446.6L1102.1 447.0" stroke="#8aff75"/>
<path d="M943.8 498.7L948.5 492.7" stroke="#ff0500"/>
<path d="M948.5 492.7L953.2 488.0" stroke="#ff2400"/>
<path d="M953.2 488.0L958.7 482.4" stroke="#ff4200"/>
<path d="M958.7 482.4L963.2 478.6" stroke="#ff6100"/>
<path d="M963.2 478.6L967.6 473.1" stroke="#ff8000"/>
<path d="M967.6 473.1L971.2 469.5" stroke="#ff9e00"/>
<path d="M971.2 469.5L975.4 464.8" stroke="#ffbd00"/>
<path d="M975.4 464.8L980.2 461.5" stroke="#ffdb00"/>
<path d="M980.2 461.5L983.8 458.4L986.6 455.0" stroke="#fffa00"/>
<path d="M986.6 455.0L989.7 452.4" stroke="#e5ff1a"/>
<path d="M989.7 452.4L992.9 450.9L995.2 449.1L997.2 447.6L998.8 447.5L1000.7 447.7" stroke="#c7ff38"/>
<path d="M933.0 504.5L934.0 495.8" stroke="#c70000"/>
<path d="M934.0 495.8L934.9 487.9" stroke="#e60000"/>
<path d="M934.9 487.9L935.3 481.6" stroke="#ff0500"/>
<path d="M935.3 481.6L936.8 475.9" stroke="#ff2400"/>
<path d="M936.8 475.9L938.5 469.4" stroke="#ff4200"/>
<path d="M938.5 469.4L940.9 465.1" stroke="#ff6100"/>
<path d="M940.9 465.1L943.0 461.3" stroke="#ff8000"/>
<path d="M943.0 461.3L946.9 457.8" stroke="#ff9e00"/>
<path d="M946.9 457.8L951.3 454.1" stroke="#ffbd00"/>
<path d="M951.3 454.1L956.7 451.9" stroke="#ffdb00"/>
<path d="M956.7 451.9L963.1 450.1" stroke="#fffa00"/>
<path d="M963.1 450.1L970.7 448.4L979.9 447.2" stroke="#e5ff1a"/>
<path d="M979.9 447.2L991.0 447.7L1003.1 448.0" stroke="#fffa00"/>
<path d="M1003.1 448.0L1017.4 448.3" stroke="#ffdb00"/>
<path d="M961.5 488.2L965.0 482.8" stroke="#ff4200"/>
<path d="M965.0 482.8L968.5 477.9" stroke="#ff6100"/>
<path d="M968.5 477.9L973.0 472.5" stroke="#ff8000"/>
<path d="M973.0 472.5L977.4 468.3L982.1 464.9" stroke="#ffbd00"/>
<path d="M982.1 464.9L987.6 461.6" stroke="#ffdb00"/>
<path d="M987.6 461.6L993.6 458.7L1000.5 456.6L1008.6 454.3L1017.5 452.8L1027.7 451.0L1038.5 450.1" stroke="#fffa00"/>
<path d="M1038.5 450.1L1050.6 448.7L1063.5 447.8L1077.8 448.0" stroke="#e5ff1a"/>
<path d="M1077.8 448.0L1094.0 447.7" stroke="#c7ff38"/>
<path d="M947.1 499.7L951.4 492.7" stroke="#ff2400"/>
<path d="M951.4 492.7L956.6 486.2" stroke="#ff6100"/>
<path d="M956.6 486.2L961.0 480.1" stroke="#ff8000"/>
<path d="M961.0 480.1L966.2 474.6" stroke="#ffbd00"/>
<path d="M966.2 474.6L971.6 470.2" stroke="#ffdb00"/>
<path d="M971.6 470.2L976.9 465.1" stroke="#fffa00"/>
<path d="M976.9 465.1L982.1 462.2" stroke="#e5ff1a"/>
<path d="M982.1 462.2L987.4 458.2L992.7 456.0" stroke="#c7ff38"/>
<path d="M992.7 456.0L998.1 453.1L1002.4 452.1L1007.1 450.8L1011.7 449.1L1015.1 448.7L1019.0 448.5L1022.3 448.5" stroke="#a8ff57"/>
<path d="M941.7 498.2L950.0 492.8" stroke="#ff0500"/>
<path d="M950.0 492.8L956.9 488.6L964.3 483.3" stroke="#ff2400"/>
<path d="M964.3 483.3L972.2 479.1" stroke="#ff4200"/>
<path d="M972.2 479.1L979.9 475.2" stroke="#ff6100"/>
<path d="M979.9 475.2L987.1 471.1L994.1 467.9" stroke="#ff8000"/>
<path d="M994.1 467.9L1002.1 464.5L1009.4 460.9" stroke="#ff9e00"/>
<path d="M1009.4 460.9L1017.7 457.8L1025.1 456.3" stroke="#ffbd00"/>
<path d="M1025.1 456.3L1034.1 454.2L1041.9 452.2L1050.5 450.5" stroke="#ffdb00"/>
<path d="M1050.5 450.5L1058.7 449.7L1067.9 449.2" stroke="#fffa00"/>
<path d="M936.5 496.2L937.0 489.9" stroke="#c70000"/>
<path d="M937.0 489.9L938.1 483.1" stroke="#e60000"/>
<path d="M938.1 483.1L939.7 477.8" stroke="#ff0500"/>
<path d="M939.7 477.8L941.1 472.6" stroke="#ff2400"/>
<path d="M941.1 472.6L943.5 467.7" stroke="#ff4200"/>
<path d="M943.5 467.7L947.3 464.8" stroke="#ff6100"/>
<path d="M947.3 464.8L953.0 460.9" stroke="#ff8000"/>
<path d="M953.0 460.9L959.2 457.9" stroke="#ff9e00"/>
<path d="M959.2 457.9L966.7 454.9L975.7 453.5L986.9 451.9" stroke="#ffdb00"/>
<path d="M986.9 451.9L1000.0 450.7L1015.1 449.7" stroke="#ffbd00"/>
<path d="M1015.1 449.7L1033.0 449.3L1052.8 448.8L1076.2 449.0" stroke="#ff9e00"/>
<path d="M928.2 510.4L929.6 501.2" stroke="#ff0500"/>
<path d="M929.6 501.2L931.2 493.3" stroke="#ff2400"/>
<path d="M931.2 493.3L932.5 485.3" stroke="#ff4200"/>
<path d="M932.5 485.3L935.0 478.2" stroke="#ff6100"/>
<path d="M935.0 478.2L937.2 472.6" stroke="#ff8000"/>
<path d="M937.2 472.6L940.3 468.0" stroke="#ffbd00"/>
<path d="M940.3 468.0L944.2 463.2" stroke="#ffdb00"/>
<path d="M944.2 463.2L948.3 458.8" stroke="#fffa00"/>
<path d="M948.3 458.8L953.3 456.6" stroke="#e5ff1a"/>
<path d="M953.3 456.6L959.0 453.5" stroke="#a8ff57"/>
<path d="M959.0 453.5L965.5 451.4L972.8 449.7L982.0 449.2L991.0 449.0" stroke="#6bff94"/>
<path d="M991.0 449.0L1002.6 449.2" stroke="#8aff75"/>
<path d="M1002.6 449.2L1014.1 450.2" stroke="#a8ff57"/>
<path d="M949.1 491.7L951.8 484.9" stroke="#ff2400"/>
<path d="M951.8 484.9L954.3 479.2" stroke="#ff6100"/>
<path d="M954.3 479.2L957.3 473.8" stroke="#ff8000"/>
<path d="M957.3 473.8L961.5 469.9" stroke="#ff9e00"/>
<path d="M961.5 469.9L965.6 466.2" stroke="#ffbd00"/>
<path d="M965.6 466.2L971.1 462.0L978.0 459.1" stroke="#fffa00"/>
<path d="M978.0 459.1L985.2 456.6L994.5 453.9L1004.4 452.7L1017.3 451.2" stroke="#e5ff1a"/>
<path d="M1017.3 451.2L1030.8 450.4L1047.1 449.9L1065.8 449.4L1086.0 449.2" stroke="#fffa00"/>
<path d="M1086.0 449.2L1109.8 449.2" stroke="#8aff75"/>
<path d="M921.6 505.8L923.7 497.7" stroke="#ff0500"/>
<path d="M923.7 497.7L924.5 489.4" stroke="#ff2400"/>
<path d="M924.5 489.4L926.8 483.4" stroke="#ff4200"/>
<path d="M926.8 483.4L928.6 476.4" stroke="#ff6100"/>
<path d="M928.6 476.4L931.1 470.6" stroke="#ff8000"/>
<path d="M931.1 470.6L933.3 466.0" stroke="#ff9e00"/>
<path d="M933.3 466.0L937.5 461.4" stroke="#ffbd00"/>
<path d="M937.5 461.4L940.7 458.6" stroke="#ffdb00"/>
<path d="M940.7 458.6L946.1 455.0" stroke="#fffa00"/>
<path d="M946.1 455.0L950.9 453.3" stroke="#e5ff1a"/>
<path d="M950.9 453.3L958.1 451.5" stroke="#a8ff57"/>
<path d="M958.1 451.5L965.0 449.3" stroke="#8aff75"/>
<path d="M965.0 449.3L973.5 449.3" stroke="#6bff94"/>
<path d="M973.5 449.3L983.0 449.3" stroke="#8aff75"/>
<path d="M983.0 449.3L993.3 449.9" stroke="#a8ff57"/>
<path d="M993.3 449.9L1005.1 450.2" stroke="#c7ff38"/>
<path d="M953.0 499.1L953.9 492.5" stroke="#ff2400"/>
<path d="M953.9 492.5L954.7 486.3" stroke="#ff4200"/>
<path d="M954.7 486.3L956.9 480.1" stroke="#ff8000"/>
<path d="M956.9 480.1L958.3 475.4" stroke="#ff9e00"/>
<path d="M958.3 475.4L962.0 471.4" stroke="#ffbd00"/>
<path d="M962.0 471.4L966.1 467.3" stroke="#fffa00"/>
<path d="M966.1 467.3L971.7 463.2L978.4 460.6" stroke="#e5ff1a"/>
<path d="M978.4 460.6L986.5 457.9L997.1 456.3L1009.8 454.1" stroke="#c7ff38"/>
<path d="M1009.8 454.1L1024.2 453.3L1042.2 452.4L1062.3 450.7L1084.7 450.7" stroke="#e5ff1a"/>
<path d="M1084.7 450.7L1110.8 451.0" stroke="#8aff75"/>
<path d="M940.1 496.4L945.7 491.7L950.4 487.8" stroke="#ff6100"/>
<path d="M950.4 487.8L955.9 483.4" stroke="#ff8000"/>
<path d="M955.9 483.4L960.4 479.3" stroke="#ff9e00"/>
<path d="M960.4 479.3L965.8 475.0" stroke="#ffdb00"/>
<path d="M965.8 475.0L970.5 471.1" stroke="#fffa00"/>
<path d="M970.5 471.1L975.9 467.9L981.3 465.1" stroke="#e5ff1a"/>
<path d="M981.3 465.1L986.5 462.1L992.2 459.6L998.3 457.1" stroke="#c7ff38"/>
<path d="M998.3 457.1L1005.2 455.4L1011.9 453.9L1019.6 452.4L1026.8 450.9L1035.5 450.2" stroke="#a8ff57"/>
<path d="M965.6 481.2L967.7 476.9" stroke="#ff2400"/>
<path d="M967.7 476.9L970.0 473.2" stroke="#ff4200"/>
<path d="M970.0 473.2L972.2 468.9" stroke="#ff6100"/>
<path d="M972.2 468.9L975.1 465.1" stroke="#ff8000"/>
<path d="M975.1 465.1L978.9 463.1" stroke="#ff9e00"/>
<path d="M978.9 463.1L984.0 459.4L990.7 457.6L997.9 455.7L1006.9 453.7L1016.9 453.1L1028.7 452.4L1043.2 451.5L1059.3 450.3L1077.9 451.0" stroke="#ffbd00"/>
<path d="M1077.9 451.0L1099.8 451.2" stroke="#ffdb00"/>
<path d="M1099.8 451.2L1123.0 450.5" stroke="#a8ff57"/>
<path d="M948.2 494.3L952.5 488.5" stroke="#ff0500"/>
<path d="M952.5 488.5L956.7 482.6" stroke="#ff2400"/>
<path d="M956.7 482.6L961.1 477.5" stroke="#ff4200"/>
<path d="M961.1 477.5L966.5 473.3" stroke="#ff8000"/>
<path d="M966.5 473.3L972.7 469.0L978.7 465.5" stroke="#ff9e00"/>
<path d="M978.7 465.5L984.9 463.4L992.6 460.3" stroke="#ffbd00"/>
<path d="M992.6 460.3L1001.4 457.7L1010.5 455.4L1021.2 454.1L1032.6 453.4" stroke="#ffdb00"/>
<path d="M1032.6 453.4L1044.7 452.0" stroke="#ffbd00"/>
<path d="M1044.7 452.0L1058.9 452.0L1074.5 450.8" stroke="#ffdb00"/>
<path d="M1074.5 450.8L1091.1 450.5" stroke="#fffa00"/>
<path d="M947.9 500.8L949.4 494.6" stroke="#ff2400"/>
<path d="M949.4 494.6L951.9 488.1" stroke="#ff4200"/>
<path d="M951.9 488.1L954.5 482.7" stroke="#ff8000"/>
<path d="M954.5 482.7L957.8 477.4" stroke="#ff9e00"/>
<path d="M957.8 477.4L962.0 473.5" stroke="#ffbd00"/>
<path d="M962.0 473.5L966.3 469.4" stroke="#ffdb00"/>
<path d="M966.3 469.4L973.0 465.7" stroke="#fffa00"/>
<path d="M973.0 465.7L980.9 462.9L989.7 460.2L1000.8 459.1L1013.7 456.3L1029.3 455.4L1046.6 453.8L1067.4 452.9L1089.9 452.8" stroke="#e5ff1a"/>
<path d="M1089.9 452.8L1116.8 452.6" stroke="#8aff75"/>
<path d="M926.0 503.1L930.8 498.3L936.5 493.3" stroke="#ff0500"/>
<path d="M936.5 493.3L942.1 487.9" stroke="#ff2400"/>
<path d="M942.1 487.9L947.8 483.0" stroke="#ff4200"/>
<path d="M947.8 483.0L954.1 479.1" stroke="#ff6100"/>
<path d="M954.1 479.1L961.2 475.2" stroke="#ff8000"/>
<path d="M961.2 475.2L970.0 470.4" stroke="#ff9e00"/>
<path d="M970.0 470.4L978.9 467.3L988.0 463.7L999.5 460.7L1011.8 458.1L1025.9 456.2L1042.2 454.3L1060.3 453.9" stroke="#ffbd00"/>
<path d="M1060.3 453.9L1079.6 453.2" stroke="#ffdb00"/>
<path d="M1079.6 453.2L1101.2 452.9" stroke="#fffa00"/>
<path d="M958.3 488.1L961.0 483.1" stroke="#ff0500"/>
<path d="M961.0 483.1L963.4 478.8" stroke="#ff2400"/>
<path d="M963.4 478.8L966.6 475.1" stroke="#ff4200"/>
<path d="M966.6 475.1L970.3 471.2L974.9 468.1" stroke="#ff6100"/>
<path d="M974.9 468.1L979.6 465.4L984.5 462.9" stroke="#ff8000"/>
<path d="M984.5 462.9L990.3 460.9L996.6 458.7L1003.9 457.0L1012.3 455.5L1020.6 454.7L1030.7 454.2L1042.1 452.9L1053.9 453.3L1067.4 453.2" stroke="#ff9e00"/>
<path d="M951.9 500.9L953.3 494.7" stroke="#c70000"/>
<path d="M953.3 494.7L954.1 487.6" stroke="#ff0500"/>
<path d="M954.1 487.6L956.4 481.6" stroke="#ff2400"/>
<path d="M956.4 481.6L958.4 476.2" stroke="#ff4200"/>
<path d="M958.4 476.2L961.4 471.9" stroke="#ff8000"/>
<path d="M961.4 471.9L963.8 467.7" stroke="#ff9e00"/>
<path d="M963.8 467.7L967.4 464.1" stroke="#ffbd00"/>
<path d="M967.4 464.1L971.5 460.2" stroke="#ffdb00"/>
<path d="M971.5 460.2L975.1 457.8L980.6 456.6L985.5 454.6L992.3 453.7L998.8 453.3L1006.6 452.0" stroke="#fffa00"/>
<path d="M1006.6 452.0L1014.8 452.4L1023.4 453.4" stroke="#ffdb00"/>
<path d="M950.7 495.0L952.3 489.3" stroke="#ff6100"/>
<path d="M952.3 489.3L953.7 482.7" stroke="#ff8000"/>
<path d="M953.7 482.7L955.0 478.2" stroke="#ff9e00"/>
<path d="M955.0 478.2L957.4 473.4" stroke="#ffdb00"/>
<path d="M957.4 473.4L959.5 468.4" stroke="#fffa00"/>
<path d="M959.5 468.4L962.9 464.8" stroke="#e5ff1a"/>
<path d="M962.9 464.8L967.7 461.6L972.6 458.5" stroke="#a8ff57"/>
<path d="M972.6 458.5L979.7 457.0L986.9 454.8L996.9 453.3" stroke="#8aff75"/>
<path d="M996.9 453.3L1007.2 453.0L1019.0 452.7" stroke="#a8ff57"/>
<path d="M1019.0 452.7L1033.9 452.6L1049.6 452.8L1068.3 453.3" stroke="#c7ff38"/>
<path d="M924.0 504.2L928.9 496.9" stroke="#ff2400"/>
<path d="M928.9 496.9L932.4 491.2" stroke="#ff4200"/>
<path d="M932.4 491.2L937.8 485.8" stroke="#ff6100"/>
<path d="M937.8 485.8L942.7 480.2" stroke="#ff8000"/>
<path d="M942.7 480.2L947.8 476.5" stroke="#ff9e00"/>
<path d="M947.8 476.5L954.4 471.9" stroke="#ffdb00"/>
<path d="M954.4 471.9L960.2 468.7" stroke="#fffa00"/>
<path d="M960.2 468.7L967.5 465.8L974.7 462.8L983.2 461.7L991.7 459.8L1000.4 457.9L1010.4 456.9L1021.0 455.7L1032.4 455.3" stroke="#c7ff38"/>
<path d="M1032.4 455.3L1043.3 454.2" stroke="#e5ff1a"/>
<path d="M946.2 501.7L952.6 496.8L958.9 491.1" stroke="#e60000"/>
<path d="M958.9 491.1L965.5 486.6" stroke="#ff0500"/>
<path d="M965.5 486.6L971.0 482.7L976.9 478.8" stroke="#ff2400"/>
<path d="M976.9 478.8L983.5 474.1" stroke="#ff4200"/>
<path d="M983.5 474.1L989.4 470.5" stroke="#ff6100"/>
<path d="M989.4 470.5L995.2 467.2L1000.8 464.6L1006.8 462.2" stroke="#ff8000"/>
<path d="M1006.8 462.2L1013.0 459.5L1018.0 457.5" stroke="#ff9e00"/>
<path d="M1018.0 457.5L1024.0 456.1L1029.0 454.8L1034.6 454.9L1039.9 454.7" stroke="#ffbd00"/>
<path d="M930.6 503.6L937.1 498.2L944.1 492.9" stroke="#ff0500"/>
<path d="M944.1 492.9L950.2 488.3" stroke="#ff2400"/>
<path d="M950.2 488.3L956.4 483.8" stroke="#ff4200"/>
<path d="M956.4 483.8L962.5 479.7" stroke="#ff6100"/>
<path d="M962.5 479.7L968.5 475.3" stroke="#ff8000"/>
<path d="M968.5 475.3L974.8 471.4L981.5 468.6" stroke="#ff9e00"/>
<path d="M981.5 468.6L987.6 464.8" stroke="#ffbd00"/>
<path d="M987.6 464.8L993.0 462.2L999.5 460.5L1006.0 458.5L1011.5 456.0" stroke="#ffdb00"/>
<path d="M1011.5 456.0L1018.2 455.4L1024.3 454.7" stroke="#fffa00"/>
<path d="M1024.3 454.7L1031.1 455.2" stroke="#ffdb00"/>
<path d="M920.6 512.4L927.2 506.9L933.9 500.5L940.7 494.6" stroke="#e60000"/>
<path d="M940.7 494.6L948.2 489.7" stroke="#ff0500"/>
<path d="M948.2 489.7L954.8 484.1" stroke="#ff2400"/>
<path d="M954.8 484.1L962.1 480.1" stroke="#ff4200"/>
<path d="M962.1 480.1L968.9 474.7" stroke="#ff6100"/>
<path d="M968.9 474.7L975.6 471.0L983.6 467.7" stroke="#ff8000"/>
<path d="M983.6 467.7L991.8 464.3L999.1 461.7L1007.8 458.3" stroke="#ff9e00"/>
<path d="M1007.8 458.3L1016.1 457.5L1025.7 456.0L1034.9 454.4" stroke="#ffbd00"/>
<path d="M1034.9 454.4L1045.0 454.6" stroke="#ff9e00"/>
<path d="M958.5 497.0L962.2 490.8" stroke="#ff4200"/>
<path d="M962.2 490.8L966.7 485.5" stroke="#ff6100"/>
<path d="M966.7 485.5L970.4 480.4" stroke="#ff8000"/>
<path d="M970.4 480.4L974.6 475.1" stroke="#ff9e00"/>
<path d="M974.6 475.1L979.4 470.5" stroke="#ffbd00"/>
<path d="M979.4 470.5L984.2 466.7" stroke="#ffdb00"/>
<path d="M984.2 466.7L989.7 464.5L994.2 460.8" stroke="#fffa00"/>
<path d="M994.2 460.8L999.2 459.3L1004.6 456.7" stroke="#e5ff1a"/>
<path d="M1004.6 456.7L1010.2 455.8L1015.5 454.6L1021.7 454.6" stroke="#c7ff38"/>
<path d="M1021.7 454.6L1027.5 454.8L1033.4 454.9L1039.4 455.8" stroke="#e5ff1a"/>
<path d="M929.2 497.5L934.4 494.3" stroke="#ff2400"/>
<path d="M934.4 494.3L938.6 490.5" stroke="#ff4200"/>
<path d="M938.6 490.5L944.5 486.2L949.6 483.1" stroke="#ff6100"/>
<path d="M949.6 483.1L955.0 479.3" stroke="#ff8000"/>
<path d="M955.0 479.3L960.6 476.7" stroke="#ff9e00"/>
<path d="M960.6 476.7L967.4 473.8L973.5 470.6" stroke="#ffbd00"/>
<path d="M973.5 470.6L981.4 467.6L988.7 466.0L998.0 463.5L1006.9 461.2" stroke="#ffdb00"/>
<path d="M1006.9 461.2L1017.5 459.0L1028.5 458.2" stroke="#fffa00"/>
<path d="M1028.5 458.2L1040.1 457.2L1053.2 456.0" stroke="#ffdb00"/>
<path d="M950.7 499.2L956.7 494.7" stroke="#e60000"/>
<path d="M956.7 494.7L963.0 490.8L969.0 486.3" stroke="#ff0500"/>
<path d="M969.0 486.3L974.8 482.0" stroke="#ff2400"/>
<path d="M974.8 482.0L980.3 477.3" stroke="#ff4200"/>
<path d="M980.3 477.3L985.5 474.1L990.7 471.2" stroke="#ff6100"/>
<path d="M990.7 471.2L996.4 467.3" stroke="#ff8000"/>
<path d="M996.4 467.3L1001.4 464.8L1006.8 462.8L1012.1 460.1" stroke="#ff9e00"/>
<path d="M1012.1 460.1L1016.5 457.9L1021.8 457.3L1026.1 456.3L1030.4 456.3L1034.3 455.6" stroke="#ffbd00"/>
<path d="M945.8 504.6L952.6 500.1L959.8 496.1" stroke="#ff2400"/>
<path d="M959.8 496.1L966.7 491.6L974.4 487.2" stroke="#ff4200"/>
<path d="M974.4 487.2L981.4 483.3" stroke="#ff6100"/>
<path d="M981.4 483.3L988.3 479.3L994.9 476.4" stroke="#ff8000"/>
<path d="M994.9 476.4L1002.2 473.0L1008.6 470.1" stroke="#ff9e00"/>
<path d="M1008.6 470.1L1016.5 467.0L1023.0 464.9" stroke="#ffbd00"/>
<path d="M1023.0 464.9L1030.2 462.0L1037.4 460.7L1045.6 459.2L1052.9 458.0" stroke="#ffdb00"/>
<path d="M1052.9 458.0L1060.9 456.2" stroke="#fffa00"/>
<path d="M932.8 512.1L934.3 503.8" stroke="#ff0500"/>
<path d="M934.3 503.8L935.2 496.4" stroke="#ff2400"/>
<path d="M935.2 496.4L936.4 489.9" stroke="#ff4200"/>
<path d="M936.4 489.9L938.7 484.5" stroke="#ff6100"/>
<path d="M938.7 484.5L941.8 479.4" stroke="#ff8000"/>
<path d="M941.8 479.4L945.4 474.1" stroke="#ff9e00"/>
<path d="M945.4 474.1L948.7 470.3" stroke="#ffbd00"/>
<path d="M948.7 470.3L953.7 467.9" stroke="#ffdb00"/>
<path d="M953.7 467.9L959.4 464.8" stroke="#fffa00"/>
<path d="M959.4 464.8L965.7 461.9" stroke="#e5ff1a"/>
<path d="M965.7 461.9L973.9 460.0L982.5 458.8L992.2 457.1" stroke="#c7ff38"/>
<path d="M992.2 457.1L1002.9 457.6L1015.2 456.4" stroke="#e5ff1a"/>
<path d="M1015.2 456.4L1029.5 456.7" stroke="#fffa00"/>
<path d="M919.9 517.4L923.1 509.0" stroke="#c70000"/>
<path d="M923.1 509.0L926.5 501.3L930.6 495.0" stroke="#e60000"/>
<path d="M930.6 495.0L935.2 488.1" stroke="#ff0500"/>
<path d="M935.2 488.1L941.0 483.6L947.4 478.3" stroke="#ff2400"/>
<path d="M947.4 478.3L954.3 473.4" stroke="#ff4200"/>
<path d="M954.3 473.4L961.9 469.4" stroke="#ff8000"/>
<path d="M961.9 469.4L970.7 466.2L980.2 463.6L991.4 461.8L1003.6 459.6L1017.1 459.3" stroke="#ff9e00"/>
<path d="M1017.1 459.3L1032.9 458.3L1048.6 456.9L1067.4 456.4" stroke="#ff8000"/>
<path d="M935.5 497.7L939.6 493.9L942.9 489.2" stroke="#ff0500"/>
<path d="M942.9 489.2L946.4 486.1L950.6 482.5" stroke="#ff2400"/>
<path d="M950.6 482.5L955.0 478.8" stroke="#ff4200"/>
<path d="M955.0 478.8L960.2 475.1" stroke="#ff6100"/>
<path d="M960.2 475.1L966.1 472.7L973.2 468.9" stroke="#ff8000"/>
<path d="M973.2 468.9L981.4 467.4L991.2 464.6L1002.5 463.0" stroke="#ff9e00"/>
<path d="M1002.5 463.0L1014.5 461.3L1029.6 459.1L1046.1 458.7L1064.5 457.5L1084.7 457.6" stroke="#ff8000"/>
<path d="M946.7 499.5L950.3 495.5L953.5 491.1" stroke="#c70000"/>
<path d="M953.5 491.1L956.0 487.8L959.7 484.6" stroke="#e60000"/>
<path d="M959.7 484.6L963.4 481.4" stroke="#ff0500"/>
<path d="M963.4 481.4L966.8 478.1L971.2 474.8" stroke="#ff2400"/>
<path d="M971.2 474.8L975.6 472.4" stroke="#ff4200"/>
<path d="M975.6 472.4L980.8 468.9L985.5 467.2L992.5 464.4L999.4 463.2" stroke="#ff6100"/>
<path d="M999.4 463.2L1006.4 460.8L1015.3 460.0L1024.2 459.2" stroke="#ff8000"/>
<path d="M1024.2 459.2L1034.5 458.3" stroke="#ff6100"/>
<path d="M943.9 490.5L946.6 487.9" stroke="#ff4200"/>
<path d="M946.6 487.9L949.8 484.8L952.6 481.8" stroke="#ff6100"/>
<path d="M952.6 481.8L956.8 479.1" stroke="#ff8000"/>
<path d="M956.8 479.1L961.4 476.2" stroke="#ff9e00"/>
<path d="M961.4 476.2L966.8 473.7L973.2 472.5L980.7 469.9L990.2 467.2L1001.9 465.8L1015.1 463.6L1029.9 462.3L1048.5 460.7L1068.2 460.0L1091.9 459.6" stroke="#ffbd00"/>
<path d="M1091.9 459.6L1118.7 458.1" stroke="#e5ff1a"/>
<path d="M929.9 504.5L934.2 498.5L938.0 492.4" stroke="#ff0500"/>
<path d="M938.0 492.4L943.3 487.1" stroke="#ff2400"/>
<path d="M943.3 487.1L949.0 482.5" stroke="#ff4200"/>
<path d="M949.0 482.5L955.1 478.0" stroke="#ff6100"/>
<path d="M955.1 478.0L962.6 474.3" stroke="#ff8000"/>
<path d="M962.6 474.3L970.2 470.3" stroke="#ff9e00"/>
<path d="M970.2 470.3L979.6 468.3L990.5 465.7L1003.3 463.4" stroke="#ffbd00"/>
<path d="M1003.3 463.4L1016.5 461.8L1032.3 460.7L1050.0 459.4L1069.9 458.8L1091.4 458.5" stroke="#ff9e00"/>
<path d="M1091.4 458.5L1116.1 458.8" stroke="#fffa00"/>
<path d="M928.7 509.7L932.7 504.4L937.8 499.5" stroke="#e60000"/>
<path d="M937.8 499.5L942.0 495.1L947.5 490.2" stroke="#ff0500"/>
<path d="M947.5 490.2L952.8 484.7" stroke="#ff2400"/>
<path d="M952.8 484.7L958.9 480.4" stroke="#ff4200"/>
<path d="M958.9 480.4L965.9 476.9" stroke="#ff6100"/>
<path d="M965.9 476.9L973.8 473.9L982.8 469.6L992.5 467.3L1004.3 464.4" stroke="#ff8000"/>
<path d="M1004.3 464.4L1017.1 462.3L1031.6 460.8" stroke="#ff9e00"/>
<path d="M1031.6 460.8L1047.1 459.5L1065.2 458.9L1085.4 458.9" stroke="#ff8000"/>
<path d="M937.7 496.4L940.3 491.0L943.2 486.5" stroke="#ff2400"/>
<path d="M943.2 486.5L947.2 481.7" stroke="#ff4200"/>
<path d="M947.2 481.7L952.3 477.6" stroke="#ff6100"/>
<path d="M952.3 477.6L958.1 474.4" stroke="#ff8000"/>
<path d="M958.1 474.4L964.9 470.5" stroke="#ff9e00"/>
<path d="M964.9 470.5L972.2 468.0L981.6 466.0L992.5 464.2L1005.0 461.7L1019.8 460.6" stroke="#ffbd00"/>
<path d="M1019.8 460.6L1035.9 460.0L1054.7 458.2L1076.3 458.9" stroke="#ff9e00"/>
<path d="M1076.3 458.9L1100.5 458.8" stroke="#ffbd00"/>
<path d="M1100.5 458.8L1126.9 458.7" stroke="#fffa00"/>
<path d="M961.4 486.1L964.4 484.3L967.2 481.9" stroke="#e60000"/>
<path d="M967.2 481.9L970.2 479.0" stroke="#ff0500"/>
<path d="M970.2 479.0L972.8 476.6L976.0 474.9L978.3 473.0" stroke="#ff2400"/>
<path d="M978.3 473.0L982.0 470.4L985.6 468.7L989.3 467.1" stroke="#ff4200"/>
<path d="M989.3 467.1L993.3 466.1L998.1 464.1L1002.5 463.1L1008.3 461.1L1014.1 460.3L1020.9 459.2L1027.8 458.4" stroke="#ff6100"/>
<path d="M921.2 515.1L922.4 506.6L923.2 499.0" stroke="#c70000"/>
<path d="M923.2 499.0L924.7 491.6" stroke="#e60000"/>
<path d="M924.7 491.6L927.5 485.0" stroke="#ff0500"/>
<path d="M927.5 485.0L931.3 480.2L936.3 474.2" stroke="#ff2400"/>
<path d="M936.3 474.2L942.7 470.2" stroke="#ff4200"/>
<path d="M942.7 470.2L950.1 467.0" stroke="#ff6100"/>
<path d="M950.1 467.0L960.3 463.4" stroke="#ff8000"/>
<path d="M960.3 463.4L972.7 461.5L987.1 459.6" stroke="#ff9e00"/>
<path d="M987.1 459.6L1004.2 458.7" stroke="#ff8000"/>
<path d="M1004.2 458.7L1024.1 457.9L1046.9 457.5" stroke="#ff6100"/>
<path d="M1046.9 457.5L1072.6 457.5" stroke="#ff4200"/>
<path d="M1072.6 457.5L1101.3 458.7" stroke="#ff6100"/>
<path d="M947.7 489.7L950.2 485.3" stroke="#ff4200"/>
<path d="M950.2 485.3L952.1 481.5" stroke="#ff6100"/>
<path d="M952.1 481.5L955.1 477.5" stroke="#ff8000"/>
<path d="M955.1 477.5L957.3 474.7" stroke="#ff9e00"/>
<path d="M957.3 474.7L960.6 471.4" stroke="#ffbd00"/>
<path d="M960.6 471.4L964.0 469.4" stroke="#ffdb00"/>
<path d="M964.0 469.4L968.4 466.7L972.8 465.2L977.9 463.2L983.6 461.6L990.4 461.0L997.8 460.0L1005.5 458.8L1015.4 458.6" stroke="#fffa00"/>
<path d="M1015.4 458.6L1024.4 458.5L1035.6 459.0" stroke="#ffdb00"/>
<path d="M939.7 508.7L940.5 501.3" stroke="#c70000"/>
<path d="M940.5 501.3L941.3 494.5" stroke="#e60000"/>
<path d="M941.3 494.5L943.4 488.3" stroke="#ff0500"/>
<path d="M943.4 488.3L946.0 482.5" stroke="#ff2400"/>
<path d="M946.0 482.5L948.9 478.1" stroke="#ff4200"/>
<path d="M948.9 478.1L953.3 472.9" stroke="#ff6100"/>
<path d="M953.3 472.9L959.4 469.2" stroke="#ff8000"/>
<path d="M959.4 469.2L966.4 466.6" stroke="#ff9e00"/>
<path d="M966.4 466.6L975.4 463.5L986.4 460.9L998.9 459.3L1013.9 458.9" stroke="#ffbd00"/>
<path d="M1013.9 458.9L1031.5 458.6" stroke="#ff9e00"/>
<path d="M1031.5 458.6L1050.5 457.9L1073.5 458.1" stroke="#ff8000"/>
<path d="M1073.5 458.1L1099.1 459.0" stroke="#ff9e00"/>
<path d="M958.9 485.8L962.5 484.1" stroke="#ff2400"/>
<path d="M962.5 484.1L967.0 481.4L971.3 479.4" stroke="#ff4200"/>
<path d="M971.3 479.4L975.5 477.1L980.7 474.3L986.9 473.1L993.5 470.4" stroke="#ff6100"/>
<path d="M993.5 470.4L1000.9 468.3L1009.2 466.9L1019.0 465.5L1030.3 464.1L1043.2 463.0L1057.1 461.3L1073.3 460.4" stroke="#ff8000"/>
<path d="M1073.3 460.4L1091.6 459.7" stroke="#ff9e00"/>
<path d="M1091.6 459.7L1112.3 459.6" stroke="#ffbd00"/>
<path d="M935.9 499.7L939.3 493.6L942.8 488.3" stroke="#e60000"/>
<path d="M942.8 488.3L946.3 484.2" stroke="#ff0500"/>
<path d="M946.3 484.2L949.9 480.4L953.8 475.5" stroke="#ff2400"/>
<path d="M953.8 475.5L957.8 472.4" stroke="#ff4200"/>
<path d="M957.8 472.4L962.9 470.1" stroke="#ff6100"/>
<path d="M962.9 470.1L967.2 467.7L972.0 464.8" stroke="#ff8000"/>
<path d="M972.0 464.8L977.6 463.4L983.3 461.7L989.2 460.9L995.0 460.0" stroke="#ff9e00"/>
<path d="M995.0 460.0L1000.9 459.5L1008.2 458.5L1014.6 458.8" stroke="#ff8000"/>
<path d="M958.4 501.4L960.3 494.2" stroke="#ff2400"/>
<path d="M960.3 494.2L962.0 489.2" stroke="#ff4200"/>
<path d="M962.0 489.2L963.3 482.8" stroke="#ff8000"/>
<path d="M963.3 482.8L966.4 479.0" stroke="#ff9e00"/>
<path d="M966.4 479.0L969.4 474.3" stroke="#ffbd00"/>
<path d="M969.4 474.3L973.2 470.5" stroke="#ffdb00"/>
<path d="M973.2 470.5L978.4 467.3" stroke="#fffa00"/>
<path d="M978.4 467.3L984.1 464.3L991.1 462.4L999.0 460.0L1008.4 459.5L1019.9 457.6L1032.7 457.6" stroke="#e5ff1a"/>
<path d="M1032.7 457.6L1047.5 457.6L1064.4 458.4" stroke="#fffa00"/>
<path d="M1064.4 458.4L1083.1 459.2" stroke="#ffdb00"/>
<path d="M964.7 485.4L965.4 481.3" stroke="#ff8000"/>
<path d="M965.4 481.3L967.1 477.9L968.2 474.4" stroke="#ff9e00"/>
<path d="M968.2 474.4L969.8 471.4" stroke="#ffbd00"/>
<path d="M969.8 471.4L971.8 468.7" stroke="#ffdb00"/>
<path d="M971.8 468.7L973.5 466.5L975.9 464.8L978.5 463.4" stroke="#fffa00"/>
<path d="M978.5 463.4L981.5 461.2L984.8 460.1L988.2 459.3L991.8 458.4L994.6 459.2L999.1 458.5" stroke="#e5ff1a"/>
<path d="M999.1 458.5L1003.2 459.0L1007.3 459.5" stroke="#fffa00"/>
<path d="M935.6 509.3L940.2 502.1L944.5 496.4" stroke="#ff0500"/>
<path d="M944.5 496.4L949.8 490.7" stroke="#ff2400"/>
<path d="M949.8 490.7L955.3 486.2" stroke="#ff4200"/>
<path d="M955.3 486.2L960.9 481.1" stroke="#ff6100"/>
<path d="M960.9 481.1L968.2 477.3" stroke="#ff8000"/>
<path d="M968.2 477.3L975.1 474.1L983.4 470.7" stroke="#ff9e00"/>
<path d="M983.4 470.7L992.4 467.8L1002.0 465.3L1013.2 464.4L1025.1 463.1L1038.1 461.0" stroke="#ffbd00"/>
<path d="M1038.1 461.0L1051.9 461.1L1067.1 460.5" stroke="#ff9e00"/>
<path d="M1067.1 460.5L1084.6 459.4" stroke="#ffbd00"/>
<path d="M919.2 512.7L926.8 506.5L933.7 501.4" stroke="#ff0500"/>
<path d="M933.7 501.4L941.0 496.7" stroke="#ff2400"/>
<path d="M941.0 496.7L947.1 491.7L954.0 487.7" stroke="#ff4200"/>
<path d="M954.0 487.7L961.9 483.1" stroke="#ff6100"/>
<path d="M961.9 483.1L968.2 479.3" stroke="#ff8000"/>
<path d="M968.2 479.3L975.7 475.2" stroke="#ff9e00"/>
<path d="M975.7 475.2L983.7 471.8L990.7 468.4" stroke="#ffbd00"/>
<path d="M990.7 468.4L999.3 465.7L1007.3 464.6L1015.9 462.0L1025.2 461.0L1034.7 460.4" stroke="#ffdb00"/>
<path d="M1034.7 460.4L1044.7 460.9" stroke="#ffbd00"/>
<path d="M933.9 500.5L938.1 494.3" stroke="#ff4200"/>
<path d="M938.1 494.3L942.7 489.3" stroke="#ff6100"/>
<path d="M942.7 489.3L946.9 484.2" stroke="#ff8000"/>
<path d="M946.9 484.2L952.2 480.9" stroke="#ff9e00"/>
<path d="M952.2 480.9L957.3 475.9" stroke="#ffbd00"/>
<path d="M957.3 475.9L963.1 472.8" stroke="#ffdb00"/>
<path d="M963.1 472.8L969.4 469.4" stroke="#fffa00"/>
<path d="M969.4 469.4L976.2 467.4L984.5 465.1L993.3 462.8L1002.6 461.3L1013.0 460.4L1024.5 459.6" stroke="#e5ff1a"/>
<path d="M1024.5 459.6L1036.5 459.2L1049.6 459.6L1064.3 460.5" stroke="#fffa00"/>
<path d="M931.3 497.7L933.8 494.0L936.7 490.0" stroke="#ff2400"/>
<path d="M936.7 490.0L940.1 485.7" stroke="#ff4200"/>
<path d="M940.1 485.7L943.8 482.4L947.2 478.9" stroke="#ff6100"/>
<path d="M947.2 478.9L952.3 476.5" stroke="#ff8000"/>
<path d="M952.3 476.5L957.8 473.1" stroke="#ff9e00"/>
<path d="M957.8 473.1L963.6 470.6" stroke="#ffbd00"/>
<path d="M963.6 470.6L970.2 468.1L978.1 466.8L987.0 464.4L998.0 463.0" stroke="#ffdb00"/>
<path d="M998.0 463.0L1009.6 461.9L1022.3 461.3L1037.4 460.5" stroke="#ffbd00"/>
<path d="M1037.4 460.5L1054.3 460.1" stroke="#ff9e00"/>
<path d="M929.3 509.0L935.7 503.6L942.3 498.1" stroke="#e60000"/>
<path d="M942.3 498.1L948.8 494.3L955.5 489.7" stroke="#ff0500"/>
<path d="M955.5 489.7L963.2 485.1" stroke="#ff2400"/>
<path d="M963.2 485.1L971.2 481.1L979.2 477.4" stroke="#ff4200"/>
<path d="M979.2 477.4L989.4 473.5L999.7 471.3L1011.0 468.6L1024.4 465.7L1039.3 464.0L1055.0 462.0" stroke="#ff6100"/>
<path d="M1055.0 462.0L1073.0 461.8L1093.4 461.0" stroke="#ff8000"/>
<path d="M1093.4 461.0L1114.9 460.9" stroke="#ffbd00"/>
<path d="M936.5 495.3L937.6 491.3" stroke="#ff0500"/>
<path d="M937.6 491.3L939.7 486.4L942.7 482.8" stroke="#ff2400"/>
<path d="M942.7 482.8L946.1 478.2" stroke="#ff4200"/>
<path d="M946.1 478.2L949.4 475.1L954.6 472.1" stroke="#ff6100"/>
<path d="M954.6 472.1L960.1 468.9" stroke="#ff8000"/>
<path d="M960.1 468.9L966.4 467.5" stroke="#ff9e00"/>
<path d="M966.4 467.5L974.0 464.7L982.7 464.0" stroke="#ffbd00"/>
<path d="M982.7 464.0L993.5 462.1L1004.5 461.2" stroke="#ff9e00"/>
<path d="M1004.5 461.2L1018.1 461.2L1032.9 461.0" stroke="#ff8000"/>
<path d="M1032.9 461.0L1049.1 460.2L1067.7 460.8" stroke="#ff6100"/>
<path d="M926.1 509.0L927.6 502.8L930.3 497.0" stroke="#c70000"/>
<path d="M930.3 497.0L933.2 491.3L937.0 485.6" stroke="#e60000"/>
<path d="M937.0 485.6L941.0 481.4" stroke="#ff0500"/>
<path d="M941.0 481.4L946.6 478.0L952.7 473.8" stroke="#ff2400"/>
<path d="M952.7 473.8L958.9 471.1" stroke="#ff4200"/>
<path d="M958.9 471.1L967.2 468.3L977.1 465.9L987.8 464.3L1000.0 463.1" stroke="#ff6100"/>
<path d="M1000.0 463.1L1014.3 462.9L1030.4 461.6" stroke="#ff4200"/>
<path d="M1030.4 461.6L1048.5 461.0L1067.5 461.4" stroke="#ff2400"/>
<path d="M934.9 499.8L940.5 495.8L946.1 492.2L952.1 488.3" stroke="#c70000"/>
<path d="M952.1 488.3L957.3 484.9L962.6 481.6" stroke="#e60000"/>
<path d="M962.6 481.6L967.9 478.5" stroke="#ff0500"/>
<path d="M967.9 478.5L972.9 475.0L978.3 472.4L983.6 470.3" stroke="#ff2400"/>
<path d="M983.6 470.3L987.9 467.9L993.2 465.7L997.7 464.7L1003.5 463.2" stroke="#ff4200"/>
<path d="M1003.5 463.2L1008.1 461.6L1012.8 461.3L1017.5 461.1" stroke="#ff6100"/>
<path d="M963.5 497.6L968.7 493.4" stroke="#ff0500"/>
<path d="M968.7 493.4L975.2 490.1L980.3 486.4" stroke="#ff2400"/>
<path d="M980.3 486.4L986.5 483.1L992.7 480.2" stroke="#ff4200"/>
<path d="M992.7 480.2L1000.4 477.1L1007.9 474.6L1015.6 471.8" stroke="#ff6100"/>
<path d="M1015.6 471.8L1024.6 469.3L1033.8 467.4L1045.3 465.9L1056.3 464.7L1069.3 463.1" stroke="#ff8000"/>
<path d="M1069.3 463.1L1083.7 461.9" stroke="#ff9e00"/>
<path d="M1083.7 461.9L1099.3 461.7" stroke="#ffbd00"/>
<path d="M1099.3 461.7L1116.9 461.8" stroke="#ffdb00"/>
<path d="M921.1 505.2L921.9 498.5" stroke="#e60000"/>
<path d="M921.9 498.5L923.4 492.4" stroke="#ff0500"/>
<path d="M923.4 492.4L925.1 486.6L927.4 481.7" stroke="#ff2400"/>
<path d="M927.4 481.7L928.9 477.6" stroke="#ff4200"/>
<path d="M928.9 477.6L930.8 473.2L933.0 469.6" stroke="#ff6100"/>
<path d="M933.0 469.6L936.5 466.7" stroke="#ff8000"/>
<path d="M936.5 466.7L938.8 464.3L942.1 462.2" stroke="#ff9e00"/>
<path d="M942.1 462.2L945.7 461.0L949.7 460.4" stroke="#ffbd00"/>
<path d="M949.7 460.4L953.8 459.8L957.9 459.9" stroke="#ffdb00"/>
<path d="M957.9 459.9L962.2 459.9L967.9 461.3" stroke="#fffa00"/>
<path d="M961.2 483.8L964.7 480.9" stroke="#ff0500"/>
<path d="M964.7 480.9L969.0 478.6L972.6 476.5L976.5 474.6" stroke="#ff2400"/>
<path d="M976.5 474.6L980.7 473.0L985.9 470.7L991.6 469.0L997.8 468.2L1005.4 466.4L1014.1 465.4L1024.3 464.0L1036.6 463.2L1049.3 462.0L1063.8 461.5L1080.9 461.2" stroke="#ff4200"/>
<path d="M1080.9 461.2L1099.1 461.0" stroke="#ff6100"/>
<path d="M939.2 503.5L942.7 499.0L946.6 495.3" stroke="#e60000"/>
<path d="M946.6 495.3L950.8 491.0L954.5 487.9" stroke="#ff0500"/>
<path d="M954.5 487.9L958.9 484.5L963.4 480.6" stroke="#ff2400"/>
<path d="M963.4 480.6L968.3 478.5" stroke="#ff4200"/>
<path d="M968.3 478.5L974.2 474.6L979.9 472.8L986.3 470.7" stroke="#ff6100"/>
<path d="M986.3 470.7L993.3 468.2L1001.9 465.9L1011.1 464.7L1020.0 463.6L1030.6 462.5" stroke="#ff8000"/>
<path d="M1030.6 462.5L1043.2 461.7" stroke="#ff6100"/>
<path d="M963.0 485.5L964.5 483.4L964.7 480.7" stroke="#ff4200"/>
<path d="M964.7 480.7L966.2 477.3" stroke="#ff6100"/>
<path d="M966.2 477.3L967.5 474.9" stroke="#ff8000"/>
<path d="M967.5 474.9L968.6 473.1L970.7 471.7L973.2 470.6L976.8 468.9L981.0 467.9" stroke="#ff9e00"/>
<path d="M981.0 467.9L986.2 466.3L992.4 465.4" stroke="#ffbd00"/>
<path d="M992.4 465.4L999.0 464.1L1007.4 463.9L1016.3 463.6L1026.9 462.7" stroke="#ff9e00"/>
<path d="M1026.9 462.7L1038.6 461.7" stroke="#ff8000"/>
<path d="M957.4 491.0L958.7 488.0" stroke="#e60000"/>
<path d="M958.7 488.0L959.5 484.1L960.8 480.9" stroke="#ff0500"/>
<path d="M960.8 480.9L963.5 477.5" stroke="#ff2400"/>
<path d="M963.5 477.5L966.2 475.0" stroke="#ff4200"/>
<path d="M966.2 475.0L969.7 471.9L974.5 470.3L981.0 468.8L988.1 466.4L997.2 465.0L1007.7 464.3L1020.6 462.9" stroke="#ff6100"/>
<path d="M1020.6 462.9L1034.6 462.7L1051.6 461.9L1070.7 462.1L1092.5 462.5" stroke="#ff4200"/>
<path d="M936.2 498.4L936.6 493.7" stroke="#ff2400"/>
<path d="M936.6 493.7L937.0 489.1L938.2 485.7" stroke="#ff4200"/>
<path d="M938.2 485.7L938.9 481.5" stroke="#ff6100"/>
<path d="M938.9 481.5L941.2 478.5L943.0 475.1" stroke="#ff8000"/>
<path d="M943.0 475.1L946.0 473.0" stroke="#ff9e00"/>
<path d="M946.0 473.0L949.1 470.0" stroke="#ffbd00"/>
<path d="M949.1 470.0L953.4 467.9L958.6 467.1" stroke="#ffdb00"/>
<path d="M958.6 467.1L965.0 465.0L972.9 464.7L981.8 463.2L992.6 462.2" stroke="#fffa00"/>
<path d="M992.6 462.2L1004.6 461.9L1018.1 462.1" stroke="#ffdb00"/>
<path d="M936.6 501.2L938.6 495.9L941.5 491.1" stroke="#e60000"/>
<path d="M941.5 491.1L944.8 487.5" stroke="#ff0500"/>
<path d="M944.8 487.5L948.5 483.2L952.4 480.4" stroke="#ff2400"/>
<path d="M952.4 480.4L957.3 476.8" stroke="#ff4200"/>
<path d="M957.3 476.8L963.0 474.9L968.6 471.5" stroke="#ff6100"/>
<path d="M968.6 471.5L975.4 470.3L981.9 468.0L990.9 466.8" stroke="#ff8000"/>
<path d="M990.9 466.8L999.3 466.2L1009.3 464.3L1020.8 464.5L1033.0 462.8" stroke="#ff6100"/>
<path d="M1033.0 462.8L1045.5 462.7" stroke="#ff4200"/>
<path d="M934.4 495.8L936.1 490.9" stroke="#ff0500"/>
<path d="M936.1 490.9L939.2 486.0L942.3 482.5" stroke="#ff2400"/>
<path d="M942.3 482.5L945.1 479.6L949.3 476.2" stroke="#ff4200"/>
<path d="M949.3 476.2L953.6 473.4" stroke="#ff6100"/>
<path d="M953.6 473.4L959.4 471.2" stroke="#ff8000"/>
<path d="M959.4 471.2L966.9 468.8L974.9 467.4L984.6 465.5L995.2 463.5" stroke="#ff9e00"/>
<path d="M995.2 463.5L1008.6 462.7L1022.2 462.8" stroke="#ff8000"/>
<path d="M1022.2 462.8L1039.8 462.5L1057.8 462.1L1078.8 462.9" stroke="#ff6100"/>
<path d="M951.6 492.3L955.4 490.1L958.7 486.2" stroke="#ff0500"/>
<path d="M958.7 486.2L961.5 483.3" stroke="#ff2400"/>
<path d="M961.5 483.3L964.2 481.1L966.9 478.9" stroke="#ff4200"/>
<path d="M966.9 478.9L969.6 476.5L972.9 474.1" stroke="#ff6100"/>
<path d="M972.9 474.1L974.8 471.5L978.1 470.7L980.0 468.7L983.0 467.5" stroke="#ff8000"/>
<path d="M983.0 467.5L984.7 465.5L986.9 465.1L989.4 464.3L991.3 463.8L993.5 463.3" stroke="#ff9e00"/>
<path d="M956.4 494.0L960.0 491.0L964.0 487.6" stroke="#ff0500"/>
<path d="M964.0 487.6L969.1 484.9L974.1 483.4L978.8 480.8" stroke="#ff2400"/>
<path d="M978.8 480.8L985.1 478.9L991.6 476.0L999.4 473.9L1007.9 472.2L1016.8 471.1L1027.8 468.7L1039.6 468.3L1052.6 466.5L1067.7 465.6" stroke="#ff4200"/>
<path d="M1067.7 465.6L1083.8 464.2" stroke="#ff6100"/>
<path d="M1083.8 464.2L1101.8 463.7" stroke="#ff8000"/>
<path d="M936.6 503.0L937.8 497.4" stroke="#ff0500"/>
<path d="M937.8 497.4L939.5 492.5" stroke="#ff2400"/>
<path d="M939.5 492.5L942.1 487.4" stroke="#ff4200"/>
<path d="M942.1 487.4L943.4 483.1L945.6 480.4" stroke="#ff6100"/>
<path d="M945.6 480.4L948.4 476.0" stroke="#ff8000"/>
<path d="M948.4 476.0L949.9 473.9" stroke="#ff9e00"/>
<path d="M949.9 473.9L952.6 471.5L955.3 469.8" stroke="#ffbd00"/>
<path d="M955.3 469.8L956.7 468.2L959.2 466.3" stroke="#ffdb00"/>
<path d="M959.2 466.3L960.9 465.0L962.7 464.3" stroke="#fffa00"/>
<path d="M962.7 464.3L964.7 463.7L965.8 463.3L966.7 464.3" stroke="#e5ff1a"/>
<path d="M922.3 502.5L922.4 497.9L923.0 492.9" stroke="#ff2400"/>
<path d="M923.0 492.9L923.9 488.1L925.8 484.4" stroke="#ff4200"/>
<path d="M925.8 484.4L927.9 481.2L930.5 477.5" stroke="#ff6100"/>
<path d="M930.5 477.5L933.4 475.1L937.7 473.0" stroke="#ff8000"/>
<path d="M937.7 473.0L942.4 470.6" stroke="#ff9e00"/>
<path d="M942.4 470.6L948.5 468.9" stroke="#ffbd00"/>
<path d="M948.5 468.9L956.5 468.5L965.0 466.5" stroke="#ffdb00"/>
<path d="M965.0 466.5L975.0 465.9" stroke="#fffa00"/>
<path d="M975.0 465.9L986.1 465.6L999.2 464.5" stroke="#ffdb00"/>
<path d="M999.2 464.5L1013.7 464.0" stroke="#ffbd00"/>
<path d="M924.1 514.6L929.3 509.6L934.4 504.7L940.2 500.1" stroke="#ff0500"/>
<path d="M940.2 500.1L945.9 495.4" stroke="#ff2400"/>
<path d="M945.9 495.4L951.7 491.4L957.9 488.0" stroke="#ff4200"/>
<path d="M957.9 488.0L964.9 484.8" stroke="#ff6100"/>
<path d="M964.9 484.8L971.7 480.9L978.4 478.2" stroke="#ff8000"/>
<path d="M978.4 478.2L986.0 474.8L994.2 472.8L1003.8 470.7L1012.8 468.7L1023.6 466.8L1034.4 465.9L1046.3 465.1" stroke="#ff9e00"/>
<path d="M946.3 498.3L947.2 493.9L949.1 490.3" stroke="#ff0500"/>
<path d="M949.1 490.3L950.2 486.1" stroke="#ff2400"/>
<path d="M950.2 486.1L951.9 483.1" stroke="#ff4200"/>
<path d="M951.9 483.1L954.2 480.1L956.3 477.6" stroke="#ff6100"/>
<path d="M956.3 477.6L958.1 475.1L961.3 473.4" stroke="#ff8000"/>
<path d="M961.3 473.4L964.2 471.0" stroke="#ff9e00"/>
<path d="M964.2 471.0L967.3 470.4L970.2 469.0L973.2 467.2L976.9 466.7L981.6 465.8L985.9 465.8L989.5 464.4" stroke="#ffbd00"/>
<path d="M952.9 502.6L954.4 497.9" stroke="#8a0000"/>
<path d="M954.4 497.9L956.0 492.2" stroke="#a80000"/>
<path d="M956.0 492.2L958.9 489.0" stroke="#c70000"/>
<path d="M958.9 489.0L961.3 484.9L964.2 481.8" stroke="#e60000"/>
<path d="M964.2 481.8L968.7 478.7" stroke="#ff0500"/>
<path d="M968.7 478.7L973.3 475.3L977.9 473.1L984.6 471.1" stroke="#ff2400"/>
<path d="M984.6 471.1L991.0 469.0L998.2 467.6" stroke="#ff4200"/>
<path d="M998.2 467.6L1007.0 466.8L1017.2 465.7L1027.1 465.7L1039.6 464.8" stroke="#ff2400"/>
<path d="M1039.6 464.8L1052.0 464.9" stroke="#ff0500"/>
<path d="M955.2 498.7L956.2 494.1" stroke="#c70000"/>
<path d="M956.2 494.1L956.6 490.4" stroke="#e60000"/>
<path d="M956.6 490.4L957.9 486.1" stroke="#ff0500"/>
<path d="M957.9 486.1L959.3 482.6L961.2 479.6" stroke="#ff2400"/>
<path d="M961.2 479.6L962.4 476.3" stroke="#ff4200"/>
<path d="M962.4 476.3L964.7 472.9" stroke="#ff6100"/>
<path d="M964.7 472.9L967.8 470.7L971.1 468.8L975.7 467.9L979.9 466.4" stroke="#ff8000"/>
<path d="M979.9 466.4L985.3 465.5" stroke="#ff9e00"/>
<path d="M985.3 465.5L990.5 464.8L997.2 464.5L1005.2 464.3" stroke="#ff8000"/>
<path d="M1005.2 464.3L1012.7 465.2" stroke="#ff6100"/>
<path d="M936.8 497.9L940.0 494.6" stroke="#e60000"/>
<path d="M940.0 494.6L944.1 490.8L947.7 488.2L951.7 484.9" stroke="#ff0500"/>
<path d="M951.7 484.9L955.8 481.6" stroke="#ff2400"/>
<path d="M955.8 481.6L960.3 479.6L966.0 476.9L973.1 474.6" stroke="#ff4200"/>
<path d="M973.1 474.6L980.1 472.6L988.1 471.2L997.9 468.5L1008.9 467.6" stroke="#ff6100"/>
<path d="M1008.9 467.6L1021.2 466.6L1035.2 466.4L1051.5 465.2L1069.2 465.5" stroke="#ff4200"/>
<path d="M964.9 492.6L968.2 490.3L972.0 487.6" stroke="#a80000"/>
<path d="M972.0 487.6L975.1 485.3L980.1 483.2L984.0 480.4" stroke="#c70000"/>
<path d="M984.0 480.4L989.5 478.9L996.8 477.0L1004.1 475.1L1012.9 473.5L1023.0 471.5L1034.1 470.7L1046.9 469.4L1062.6 467.8L1079.3 467.6L1098.3 467.1" stroke="#e60000"/>
<path d="M1098.3 467.1L1119.1 466.1" stroke="#ff2400"/>
<path d="M933.3 495.0L937.2 492.1" stroke="#e60000"/>
<path d="M937.2 492.1L941.1 489.7L944.6 487.1L949.0 485.0L953.6 482.6" stroke="#ff0500"/>
<path d="M953.6 482.6L958.1 479.5L963.8 477.6" stroke="#ff2400"/>
<path d="M963.8 477.6L970.9 475.7L978.5 474.7L987.3 473.2" stroke="#ff4200"/>
<path d="M987.3 473.2L997.4 471.2L1008.9 469.5L1022.4 468.2L1036.9 467.4L1054.3 467.3L1072.7 465.7" stroke="#ff2400"/>
<path d="M956.5 487.4L959.3 485.9L962.3 483.1" stroke="#e60000"/>
<path d="M962.3 483.1L965.8 482.0L968.3 480.4L972.7 477.8L976.7 476.4L981.5 475.0" stroke="#ff0500"/>
<path d="M981.5 475.0L985.9 474.2L991.8 472.1L998.5 470.8L1005.4 470.1" stroke="#ff2400"/>
<path d="M1005.4 470.1L1012.7 469.7L1022.0 467.7L1031.8 467.6L1042.4 467.0L1053.5 465.8" stroke="#ff0500"/>
<path d="M933.1 497.0L934.7 491.8" stroke="#ff0500"/>
<path d="M934.7 491.8L935.6 487.7" stroke="#ff2400"/>
<path d="M935.6 487.7L937.2 483.0" stroke="#ff4200"/>
<path d="M937.2 483.0L939.4 479.9L942.7 475.6" stroke="#ff6100"/>
<path d="M942.7 475.6L947.9 472.5" stroke="#ff8000"/>
<path d="M947.9 472.5L953.2 470.5" stroke="#ff9e00"/>
<path d="M953.2 470.5L960.6 468.2" stroke="#ffbd00"/>
<path d="M960.6 468.2L969.6 466.8" stroke="#ffdb00"/>
<path d="M969.6 466.8L980.8 465.1L994.1 464.6" stroke="#ffbd00"/>
<path d="M994.1 464.6L1009.8 464.0" stroke="#ff9e00"/>
<path d="M1009.8 464.0L1027.8 463.9L1049.0 464.6" stroke="#ff8000"/>
<path d="M1049.0 464.6L1072.7 464.6L1100.4 465.5" stroke="#ff6100"/>
<path d="M942.8 495.9L944.4 491.6L946.7 487.9" stroke="#ff4200"/>
<path d="M946.7 487.9L948.6 485.0" stroke="#ff6100"/>
<path d="M948.6 485.0L951.7 482.0L955.3 479.6" stroke="#ff8000"/>
<path d="M955.3 479.6L958.8 477.5L963.0 475.9" stroke="#ff9e00"/>
<path d="M963.0 475.9L967.5 473.8L972.8 471.5L979.0 470.7L984.8 469.8L992.6 469.1L1000.6 467.7L1009.9 467.5" stroke="#ffbd00"/>
<path d="M1009.9 467.5L1019.6 466.4L1029.9 466.3" stroke="#ff9e00"/>
<path d="M925.6 511.1L929.5 506.8L933.4 502.0L937.2 497.9L942.1 493.7" stroke="#c70000"/>
<path d="M942.1 493.7L945.6 490.1L950.6 487.1" stroke="#e60000"/>
<path d="M950.6 487.1L954.7 483.1L959.9 480.8" stroke="#ff0500"/>
<path d="M959.9 480.8L964.9 477.9L970.2 474.5" stroke="#ff2400"/>
<path d="M970.2 474.5L976.1 473.2L981.5 470.7L988.7 469.8L995.3 468.4L1002.0 467.5L1010.4 466.2" stroke="#ff4200"/>
<path d="M953.1 503.3L957.0 499.8L960.0 495.5L964.6 492.2" stroke="#c70000"/>
<path d="M964.6 492.2L968.1 489.9L972.6 486.4" stroke="#e60000"/>
<path d="M972.6 486.4L976.3 484.0L981.2 481.4" stroke="#ff0500"/>
<path d="M981.2 481.4L985.1 478.5L989.7 476.7L995.2 474.2" stroke="#ff2400"/>
<path d="M995.2 474.2L1000.6 472.8L1006.1 471.1L1012.0 469.0L1018.6 468.6L1025.8 468.0L1033.0 466.2" stroke="#ff4200"/>
<path d="M959.2 498.8L961.3 495.1" stroke="#ff2400"/>
<path d="M961.3 495.1L962.6 490.1" stroke="#ff4200"/>
<path d="M962.6 490.1L965.2 487.4L968.8 484.1" stroke="#ff6100"/>
<path d="M968.8 484.1L972.6 481.2" stroke="#ff8000"/>
<path d="M972.6 481.2L977.3 478.3L984.1 476.1L990.9 474.6L1000.7 473.3L1011.2 471.6L1022.9 469.7L1038.0 469.2" stroke="#ff9e00"/>
<path d="M1038.0 469.2L1055.2 467.7L1074.3 467.1" stroke="#ff8000"/>
<path d="M1074.3 467.1L1096.3 466.6" stroke="#ff9e00"/>
<path d="M1096.3 466.6L1120.8 467.0" stroke="#ffbd00"/>
<path d="M931.9 502.3L933.3 496.3L935.0 491.6" stroke="#ff0500"/>
<path d="M935.0 491.6L936.9 487.2" stroke="#ff2400"/>
<path d="M936.9 487.2L939.0 482.8L941.9 479.5" stroke="#ff4200"/>
<path d="M941.9 479.5L944.9 476.6" stroke="#ff6100"/>
<path d="M944.9 476.6L947.8 472.8L951.0 470.9" stroke="#ff8000"/>
<path d="M951.0 470.9L955.1 469.4" stroke="#ff9e00"/>
<path d="M955.1 469.4L958.8 466.8L964.2 466.8" stroke="#ffbd00"/>
<path d="M964.2 466.8L968.9 465.6" stroke="#ffdb00"/>
<path d="M968.9 465.6L974.7 465.1L981.2 465.6" stroke="#ffbd00"/>
<path d="M981.2 465.6L988.3 465.7L995.3 466.8" stroke="#ff9e00"/>
<path d="M961.9 491.6L962.7 488.0" stroke="#ff0500"/>
<path d="M962.7 488.0L962.9 484.0" stroke="#ff2400"/>
<path d="M962.9 484.0L964.4 480.2" stroke="#ff4200"/>
<path d="M964.4 480.2L966.8 476.6L969.1 474.5" stroke="#ff6100"/>
<path d="M969.1 474.5L971.9 471.9L975.7 469.3" stroke="#ff8000"/>
<path d="M975.7 469.3L980.2 468.5L986.1 466.6L992.8 465.9" stroke="#ff9e00"/>
<path d="M992.8 465.9L1000.4 464.7L1009.0 464.2L1018.7 465.0" stroke="#ff8000"/>
<path d="M1018.7 465.0L1030.3 464.7L1044.2 465.4" stroke="#ff6100"/>
<path d="M1044.2 465.4L1058.9 466.3" stroke="#ff4200"/>
<path d="M950.8 497.0L951.9 493.1" stroke="#e60000"/>
<path d="M951.9 493.1L953.1 489.3L953.7 486.0" stroke="#ff0500"/>
<path d="M953.7 486.0L955.4 482.2" stroke="#ff2400"/>
<path d="M955.4 482.2L958.3 478.9" stroke="#ff4200"/>
<path d="M958.3 478.9L961.6 477.6L966.9 474.7L972.6 473.3L978.6 471.6" stroke="#ff6100"/>
<path d="M978.6 471.6L987.2 469.9" stroke="#ff8000"/>
<path d="M987.2 469.9L997.8 468.8L1009.4 467.7L1023.2 467.4" stroke="#ff6100"/>
<path d="M1023.2 467.4L1038.9 466.8L1057.5 466.5L1078.6 466.6" stroke="#ff4200"/>
<path d="M929.8 507.4L933.3 503.1" stroke="#e60000"/>
<path d="M933.3 503.1L935.5 499.1L939.5 495.6" stroke="#ff0500"/>
<path d="M939.5 495.6L942.3 491.2L945.3 487.9" stroke="#ff2400"/>
<path d="M945.3 487.9L949.6 483.6" stroke="#ff4200"/>
<path d="M949.6 483.6L953.6 480.2L957.5 477.4" stroke="#ff6100"/>
<path d="M957.5 477.4L962.2 474.7" stroke="#ff8000"/>
<path d="M962.2 474.7L967.3 472.3L972.3 470.2L979.2 469.0L985.7 468.1L992.8 466.7L1001.0 467.1" stroke="#ff9e00"/>
<path d="M1001.0 467.1L1010.1 466.9" stroke="#ff8000"/>
<path d="M962.1 498.7L963.3 494.5" stroke="#a80000"/>
<path d="M963.3 494.5L964.3 490.0" stroke="#c70000"/>
<path d="M964.3 490.0L965.6 486.6" stroke="#e60000"/>
<path d="M965.6 486.6L967.6 483.2" stroke="#ff0500"/>
<path d="M967.6 483.2L970.1 480.2L973.8 477.1" stroke="#ff2400"/>
<path d="M973.8 477.1L978.3 474.7L984.9 472.2L991.5 471.1L1000.7 469.9L1011.2 468.9L1023.4 467.5" stroke="#ff4200"/>
<path d="M1023.4 467.5L1037.7 467.2L1053.7 467.3L1073.5 467.3L1094.7 467.8" stroke="#ff2400"/>
<path d="M950.7 503.7L954.6 498.3" stroke="#a80000"/>
<path d="M954.6 498.3L957.1 493.7L960.9 489.2" stroke="#c70000"/>
<path d="M960.9 489.2L964.9 484.7" stroke="#e60000"/>
<path d="M964.9 484.7L968.6 481.0" stroke="#ff0500"/>
<path d="M968.6 481.0L973.1 478.2L978.0 475.6L984.0 472.6" stroke="#ff2400"/>
<path d="M984.0 472.6L990.7 470.5L997.9 468.7L1006.1 467.6L1015.0 467.7" stroke="#ff4200"/>
<path d="M1015.0 467.7L1024.7 467.2L1035.0 466.9L1046.8 467.4" stroke="#ff2400"/>
<path d="M1046.8 467.4L1060.7 467.4" stroke="#ff0500"/>
<path d="M959.4 490.8L961.6 488.0" stroke="#ff4200"/>
<path d="M961.6 488.0L963.2 484.6" stroke="#ff6100"/>
<path d="M963.2 484.6L966.5 481.2" stroke="#ff8000"/>
<path d="M966.5 481.2L969.6 478.6L972.5 476.0" stroke="#ff9e00"/>
<path d="M972.5 476.0L977.9 474.1L983.7 472.6L989.8 471.5L998.3 469.4L1007.8 468.6" stroke="#ffbd00"/>
<path d="M1007.8 468.6L1019.8 468.1L1033.4 467.1L1048.2 467.8" stroke="#ff9e00"/>
<path d="M1048.2 467.8L1066.3 467.6L1086.9 467.6" stroke="#ff8000"/>
<path d="M1086.9 467.6L1109.3 467.7" stroke="#ff9e00"/>
<path d="M921.1 515.2L923.8 508.6" stroke="#a80000"/>
<path d="M923.8 508.6L925.2 501.6L927.6 495.2" stroke="#c70000"/>
<path d="M927.6 495.2L930.2 490.6L933.2 485.1" stroke="#e60000"/>
<path d="M933.2 485.1L936.1 481.3" stroke="#ff0500"/>
<path d="M936.1 481.3L939.5 477.5L943.5 473.7" stroke="#ff2400"/>
<path d="M943.5 473.7L947.5 471.2L953.0 469.2" stroke="#ff4200"/>
<path d="M953.0 469.2L957.5 468.1L962.9 467.2L969.6 466.8L975.1 466.8" stroke="#ff6100"/>
<path d="M975.1 466.8L982.9 467.4L990.3 467.7" stroke="#ff4200"/>
<path d="M925.9 507.3L926.0 502.3L926.3 497.1" stroke="#ff0500"/>
<path d="M926.3 497.1L927.6 493.3L929.2 489.3" stroke="#ff2400"/>
<path d="M929.2 489.3L930.2 485.2" stroke="#ff4200"/>
<path d="M930.2 485.2L932.8 482.1L935.4 479.1" stroke="#ff6100"/>
<path d="M935.4 479.1L940.0 476.7L944.6 475.1" stroke="#ff8000"/>
<path d="M944.6 475.1L949.9 473.4L957.0 470.8" stroke="#ff9e00"/>
<path d="M957.0 470.8L964.4 470.8L973.1 469.2L983.3 469.2" stroke="#ffbd00"/>
<path d="M983.3 469.2L995.5 468.6L1008.8 468.9" stroke="#ff9e00"/>
<path d="M962.6 491.7L962.6 488.3" stroke="#ff2400"/>
<path d="M962.6 488.3L963.5 485.8" stroke="#ff4200"/>
<path d="M963.5 485.8L963.9 482.6L965.6 480.2" stroke="#ff6100"/>
<path d="M965.6 480.2L967.6 478.3L970.7 476.5" stroke="#ff8000"/>
<path d="M970.7 476.5L974.6 475.1L979.8 473.4L987.0 472.0L995.2 471.3" stroke="#ff9e00"/>
<path d="M995.2 471.3L1004.2 470.9L1015.8 469.8L1028.7 469.0" stroke="#ff8000"/>
<path d="M1028.7 469.0L1044.9 469.0L1061.8 468.9L1081.1 468.3" stroke="#ff6100"/>
<path d="M962.3 494.5L963.8 491.3" stroke="#e60000"/>
<path d="M963.8 491.3L966.2 487.7" stroke="#ff0500"/>
<path d="M966.2 487.7L969.5 485.2L972.3 482.6" stroke="#ff2400"/>
<path d="M972.3 482.6L976.2 479.3L981.0 477.4L986.4 475.3L992.8 473.3L999.6 472.3L1008.3 470.6L1017.0 469.8L1027.5 469.1L1040.0 468.3L1053.1 468.9" stroke="#ff4200"/>
<path d="M1053.1 468.9L1067.5 468.2L1083.4 468.8" stroke="#ff2400"/>
<path d="M957.2 488.8L958.5 486.6L960.3 483.7" stroke="#ff4200"/>
<path d="M960.3 483.7L963.1 481.2L965.3 479.1" stroke="#ff6100"/>
<path d="M965.3 479.1L968.6 477.1L973.0 475.4L977.9 472.9" stroke="#ff8000"/>
<path d="M977.9 472.9L983.3 472.1" stroke="#ff9e00"/>
<path d="M983.3 472.1L990.9 471.2L999.2 469.2L1008.9 468.4L1021.1 468.2" stroke="#ff8000"/>
<path d="M1021.1 468.2L1034.2 468.6L1049.8 467.9L1068.2 468.5" stroke="#ff6100"/>
<path d="M1068.2 468.5L1087.7 469.3" stroke="#ff4200"/>
<path d="M958.1 495.6L959.7 491.6" stroke="#e60000"/>
<path d="M959.7 491.6L962.1 487.4" stroke="#ff0500"/>
<path d="M962.1 487.4L963.8 484.8" stroke="#ff2400"/>
<path d="M963.8 484.8L966.5 481.9L968.5 478.8" stroke="#ff4200"/>
<path d="M968.5 478.8L971.7 476.5L974.9 475.4L978.4 472.8" stroke="#ff6100"/>
<path d="M978.4 472.8L982.9 471.6L987.5 470.2L992.2 469.4L997.7 469.4L1002.6 468.3" stroke="#ff8000"/>
<path d="M1002.6 468.3L1009.1 468.3L1015.8 468.7L1022.5 469.0" stroke="#ff6100"/>
<path d="M931.4 509.7L932.2 504.0" stroke="#c70000"/>
<path d="M932.2 504.0L934.0 498.8" stroke="#e60000"/>
<path d="M934.0 498.8L935.3 494.3L937.8 490.6" stroke="#ff0500"/>
<path d="M937.8 490.6L940.1 486.0L942.9 482.5" stroke="#ff2400"/>
<path d="M942.9 482.5L947.3 479.9" stroke="#ff4200"/>
<path d="M947.3 479.9L951.7 477.0L956.5 474.6" stroke="#ff6100"/>
<path d="M956.5 474.6L963.1 473.3L970.8 471.3L979.2 470.1L990.0 469.2" stroke="#ff8000"/>
<path d="M990.0 469.2L1001.9 469.5L1014.3 468.4" stroke="#ff6100"/>
<path d="M1014.3 468.4L1029.8 468.7" stroke="#ff4200"/>
<path d="M954.6 501.4L957.2 498.0L959.7 494.8" stroke="#e60000"/>
<path d="M959.7 494.8L963.8 490.8" stroke="#ff0500"/>
<path d="M963.8 490.8L966.9 488.7L971.1 485.0" stroke="#ff2400"/>
<path d="M971.1 485.0L976.7 483.3L982.9 479.9L989.2 477.4L997.6 475.8L1008.4 474.5L1019.2 472.6L1032.9 471.1L1047.8 470.2L1065.6 469.4L1086.1 470.2L1108.0 469.5" stroke="#ff4200"/>
<path d="M935.5 498.2L939.1 495.8" stroke="#ff2400"/>
<path d="M939.1 495.8L943.4 492.5L946.8 490.9L950.4 488.7" stroke="#ff4200"/>
<path d="M950.4 488.7L954.5 486.1L958.2 483.7" stroke="#ff6100"/>
<path d="M958.2 483.7L963.0 481.5L967.9 479.8" stroke="#ff8000"/>
<path d="M967.9 479.8L972.3 478.6L977.2 476.9L983.1 475.5L988.6 473.6L995.3 472.5L1002.1 471.6L1009.9 470.1L1017.4 469.3" stroke="#ff9e00"/>
<path d="M936.4 509.2L939.7 505.0L942.2 501.7L945.4 497.0" stroke="#c70000"/>
<path d="M945.4 497.0L949.1 494.1L953.5 490.9" stroke="#e60000"/>
<path d="M953.5 490.9L958.3 486.9L964.6 484.0" stroke="#ff0500"/>
<path d="M964.6 484.0L971.4 481.0L979.7 479.3L989.0 477.3L1000.2 474.7L1012.4 472.9L1026.4 471.8" stroke="#ff2400"/>
<path d="M1026.4 471.8L1043.1 471.2L1060.9 469.6L1082.2 469.7" stroke="#ff0500"/>
<path d="M932.3 508.7L935.6 503.9" stroke="#a80000"/>
<path d="M935.6 503.9L939.8 500.1L943.1 496.0L946.8 492.9" stroke="#c70000"/>
<path d="M946.8 492.9L950.0 489.2L954.5 486.8" stroke="#e60000"/>
<path d="M954.5 486.8L957.7 483.1L961.7 480.4" stroke="#ff0500"/>
<path d="M961.7 480.4L965.8 478.7L969.8 475.8L975.0 474.2" stroke="#ff2400"/>
<path d="M975.0 474.2L979.7 472.8L985.1 470.9L991.2 470.1" stroke="#ff4200"/>
<path d="M991.2 470.1L997.1 470.5L1003.1 470.3" stroke="#ff2400"/>
<path d="M919.6 503.9L924.5 500.0L928.8 497.4" stroke="#ff2400"/>
<path d="M928.8 497.4L933.7 493.9L938.7 490.3" stroke="#ff4200"/>
<path d="M938.7 490.3L944.2 487.3L950.4 484.4" stroke="#ff6100"/>
<path d="M950.4 484.4L956.9 481.1" stroke="#ff8000"/>
<path d="M956.9 481.1L964.0 479.4" stroke="#ff9e00"/>
<path d="M964.0 479.4L972.0 476.4L980.6 474.3L990.8 473.4" stroke="#ffbd00"/>
<path d="M990.8 473.4L1001.0 472.0L1013.2 470.9L1027.1 470.6" stroke="#ff9e00"/>
<path d="M1027.1 470.6L1042.1 470.1L1058.0 470.0" stroke="#ff8000"/>
<path d="M933.5 501.6L935.7 498.2L937.1 493.1" stroke="#c70000"/>
<path d="M937.1 493.1L938.6 489.3L940.1 486.7" stroke="#e60000"/>
<path d="M940.1 486.7L942.7 482.7L944.8 480.9" stroke="#ff0500"/>
<path d="M944.8 480.9L947.3 477.9L949.8 476.6L952.8 474.2" stroke="#ff2400"/>
<path d="M952.8 474.2L956.7 472.8L960.6 471.7" stroke="#ff4200"/>
<path d="M960.6 471.7L965.0 470.7L970.3 470.4" stroke="#ff6100"/>
<path d="M970.3 470.4L975.6 469.8L982.0 469.5L988.7 469.5" stroke="#ff4200"/>
<path d="M949.3 492.1L951.4 489.6L954.1 488.2" stroke="#e60000"/>
<path d="M954.1 488.2L956.8 484.9L959.5 482.9" stroke="#ff0500"/>
<path d="M959.5 482.9L964.0 480.8L968.6 479.8L974.3 477.7L980.8 476.1L989.2 474.9L999.0 473.7" stroke="#ff2400"/>
<path d="M999.0 473.7L1010.6 472.8L1023.5 471.8L1038.9 471.7L1056.5 470.6" stroke="#ff0500"/>
<path d="M1056.5 470.6L1077.1 470.6L1099.6 470.5" stroke="#e60000"/>
<path d="M931.1 500.5L931.7 495.6" stroke="#ff4200"/>
<path d="M931.7 495.6L933.1 491.4L934.1 488.4" stroke="#ff6100"/>
<path d="M934.1 488.4L935.6 484.9L937.4 481.7" stroke="#ff8000"/>
<path d="M937.4 481.7L940.4 479.0L943.8 477.0" stroke="#ff9e00"/>
<path d="M943.8 477.0L949.3 475.6" stroke="#ffbd00"/>
<path d="M949.3 475.6L955.5 473.6" stroke="#ffdb00"/>
<path d="M955.5 473.6L962.2 472.3L970.9 471.7L981.9 470.4" stroke="#fffa00"/>
<path d="M981.9 470.4L993.6 470.6L1007.6 469.5" stroke="#ffdb00"/>
<path d="M1007.6 469.5L1023.8 470.0" stroke="#ffbd00"/>
<path d="M1023.8 470.0L1041.4 470.8" stroke="#ff9e00"/>
<path d="M945.0 498.3L949.1 495.3" stroke="#ff0500"/>
<path d="M949.1 495.3L952.8 492.7L957.6 490.1" stroke="#ff2400"/>
<path d="M957.6 490.1L961.8 487.7L967.5 485.3L972.7 482.9" stroke="#ff4200"/>
<path d="M972.7 482.9L980.4 480.6L988.4 478.6L997.2 477.1L1008.5 474.7L1020.6 473.3" stroke="#ff6100"/>
<path d="M1020.6 473.3L1034.4 472.6L1050.2 471.0L1068.8 471.1L1089.3 469.9" stroke="#ff4200"/>
<path d="M1089.3 469.9L1111.4 469.9" stroke="#ff6100"/>
<path d="M945.7 491.3L947.1 489.0L949.6 487.3" stroke="#ff4200"/>
<path d="M949.6 487.3L951.4 485.4L953.1 483.1" stroke="#ff6100"/>
<path d="M953.1 483.1L955.0 482.0L957.1 481.0L959.5 478.5" stroke="#ff8000"/>
<path d="M959.5 478.5L962.4 477.9L965.2 476.4L968.4 475.5L971.8 474.6L975.0 473.3" stroke="#ff9e00"/>
<path d="M975.0 473.3L979.2 472.7" stroke="#ffbd00"/>
<path d="M979.2 472.7L984.1 471.7L989.5 470.8L995.6 471.0" stroke="#ff9e00"/>
<path d="M931.0 508.7L934.6 505.1" stroke="#ff0500"/>
<path d="M934.6 505.1L937.8 501.3L941.6 497.3" stroke="#ff2400"/>
<path d="M941.6 497.3L944.9 493.8L948.9 489.8" stroke="#ff4200"/>
<path d="M948.9 489.8L953.1 486.3" stroke="#ff6100"/>
<path d="M953.1 486.3L958.4 483.1L964.2 480.2" stroke="#ff8000"/>
<path d="M964.2 480.2L970.8 478.2L978.8 476.3L987.9 474.6L998.1 472.2L1009.3 472.0L1021.5 470.4" stroke="#ff9e00"/>
<path d="M1021.5 470.4L1035.9 470.2L1053.0 471.3" stroke="#ff8000"/>
<path d="M918.8 506.6L919.8 502.5L921.3 497.4" stroke="#c70000"/>
<path d="M921.3 497.4L923.2 492.9L925.9 489.6" stroke="#e60000"/>
<path d="M925.9 489.6L928.5 485.3L933.1 482.6L938.1 479.2" stroke="#ff0500"/>
<path d="M938.1 479.2L943.6 476.7L951.6 475.4L960.5 473.4" stroke="#ff2400"/>
<path d="M960.5 473.4L970.7 472.2" stroke="#ff4200"/>
<path d="M970.7 472.2L983.3 471.0L996.9 470.5" stroke="#ff2400"/>
<path d="M996.9 470.5L1012.3 470.8" stroke="#ff0500"/>
<path d="M1012.3 470.8L1030.1 470.4" stroke="#e60000"/>
<path d="M1030.1 470.4L1051.1 471.2" stroke="#c70000"/>
<path d="M924.9 502.5L927.6 499.9" stroke="#ff0500"/>
<path d="M927.6 499.9L930.9 496.6L934.4 493.2" stroke="#ff2400"/>
<path d="M934.4 493.2L937.7 490.6L943.2 487.9L949.0 485.4" stroke="#ff4200"/>
<path d="M949.0 485.4L955.5 482.8" stroke="#ff6100"/>
<path d="M955.5 482.8L964.6 480.6L976.0 478.7L988.2 476.3" stroke="#ff8000"/>
<path d="M988.2 476.3L1003.4 475.3L1021.8 473.6L1042.3 472.8" stroke="#ff6100"/>
<path d="M1042.3 472.8L1066.0 471.4L1093.6 471.7" stroke="#ff4200"/>
<path d="M1093.6 471.7L1123.7 471.3" stroke="#ff6100"/>
<path d="M923.7 503.2L925.9 499.4L929.1 495.0" stroke="#ff0500"/>
<path d="M929.1 495.0L931.1 491.5L934.0 488.6" stroke="#ff2400"/>
<path d="M934.0 488.6L936.8 485.0L939.8 483.0" stroke="#ff4200"/>
<path d="M939.8 483.0L942.9 479.7L945.2 477.5L948.4 476.5" stroke="#ff6100"/>
<path d="M948.4 476.5L950.5 474.5L953.6 473.0" stroke="#ff8000"/>
<path d="M953.6 473.0L955.7 473.0L957.7 471.7L959.5 472.0L960.7 471.5L961.8 471.9" stroke="#ff9e00"/>
<path d="M952.8 501.4L955.3 497.9" stroke="#e60000"/>
<path d="M955.3 497.9L958.4 495.5L961.7 492.9" stroke="#ff0500"/>
<path d="M961.7 492.9L964.4 490.1L968.3 488.2L971.9 485.5" stroke="#ff2400"/>
<path d="M971.9 485.5L975.5 483.3L979.5 481.6L984.3 480.5L989.3 478.3" stroke="#ff4200"/>
<path d="M989.3 478.3L995.0 477.2" stroke="#ff6100"/>
<path d="M995.0 477.2L1001.4 475.8" stroke="#ff4200"/>
<path d="M1001.4 475.8L1008.7 474.0L1016.3 473.3L1024.9 472.4" stroke="#ff6100"/>
<path d="M1024.9 472.4L1034.8 471.2" stroke="#ff4200"/>
<path d="M954.7 486.8L954.5 484.6L955.7 482.1" stroke="#ff6100"/>
<path d="M955.7 482.1L956.3 479.5L956.2 477.7" stroke="#ff8000"/>
<path d="M956.2 477.7L958.0 476.3L958.4 474.9" stroke="#ff9e00"/>
<path d="M958.4 474.9L960.8 473.3L962.8 472.7L965.2 471.7" stroke="#ffbd00"/>
<path d="M965.2 471.7L968.7 471.1L972.9 469.9" stroke="#ffdb00"/>
<path d="M972.9 469.9L977.0 470.2L982.7 469.9L988.8 470.3" stroke="#ffbd00"/>
<path d="M988.8 470.3L997.2 470.7" stroke="#ff9e00"/>
<path d="M997.2 470.7L1005.0 471.4" stroke="#ff8000"/>
<path d="M941.5 498.7L943.9 496.4L946.9 493.9L949.7 490.5L953.7 488.9L957.1 486.4" stroke="#c70000"/>
<path d="M957.1 486.4L960.8 483.7L966.0 482.4L971.8 480.3L978.2 479.2L986.3 477.0L996.2 476.3L1006.4 474.6L1019.2 473.6L1032.5 472.5" stroke="#e60000"/>
<path d="M1032.5 472.5L1048.7 471.6L1066.4 472.2" stroke="#c70000"/>
<path d="M932.4 499.8L934.5 496.4L937.7 493.3L939.9 491.2" stroke="#ff4200"/>
<path d="M939.9 491.2L943.1 489.2L946.4 487.2" stroke="#ff6100"/>
<path d="M946.4 487.2L949.4 485.0L953.3 482.2" stroke="#ff8000"/>
<path d="M953.3 482.2L957.5 480.5L962.8 479.4" stroke="#ff9e00"/>
<path d="M962.8 479.4L967.6 477.7L974.4 476.5L981.0 475.1L989.0 473.8L998.2 472.9" stroke="#ffbd00"/>
<path d="M998.2 472.9L1008.3 472.4L1019.2 471.9" stroke="#ff9e00"/>
<path d="M936.9 499.6L940.2 496.4L943.6 493.8" stroke="#ff4200"/>
<path d="M943.6 493.8L948.1 491.0L951.4 487.9" stroke="#ff6100"/>
<path d="M951.4 487.9L955.7 484.9L959.7 483.1" stroke="#ff8000"/>
<path d="M959.7 483.1L964.2 480.8" stroke="#ff9e00"/>
<path d="M964.2 480.8L969.5 478.5L975.3 477.0L981.1 475.6L987.9 474.3L995.5 473.5L1003.9 471.9" stroke="#ffbd00"/>
<path d="M1003.9 471.9L1012.7 472.4L1022.5 472.3" stroke="#ff9e00"/>
<path d="M1022.5 472.3L1033.7 472.7" stroke="#ff8000"/>
<path d="M947.8 493.6L949.2 490.9L950.8 489.1" stroke="#ff0500"/>
<path d="M950.8 489.1L953.2 487.7L955.2 485.8L957.5 483.9" stroke="#ff2400"/>
<path d="M957.5 483.9L960.2 481.5L963.6 481.1L967.2 479.7" stroke="#ff4200"/>
<path d="M967.2 479.7L971.3 477.7L975.9 476.7L981.5 475.3L987.7 475.4" stroke="#ff6100"/>
<path d="M987.7 475.4L995.1 473.9L1002.3 473.4L1011.1 473.0L1020.7 472.5" stroke="#ff4200"/>
<path d="M964.0 495.8L963.8 493.2L964.8 490.9" stroke="#ff0500"/>
<path d="M964.8 490.9L966.3 487.9L967.9 486.0" stroke="#ff2400"/>
<path d="M967.9 486.0L970.8 483.2L974.5 481.4L979.9 480.6" stroke="#ff4200"/>
<path d="M979.9 480.6L986.3 478.3L994.1 477.0" stroke="#ff6100"/>
<path d="M994.1 477.0L1004.1 476.7L1015.3 475.7L1028.9 474.2L1045.7 473.6" stroke="#ff4200"/>
<path d="M1045.7 473.6L1063.8 473.9L1084.9 472.9L1108.2 472.4" stroke="#ff2400"/>
<path d="M947.7 499.9L949.5 495.5" stroke="#c70000"/>
<path d="M949.5 495.5L951.4 490.8" stroke="#e60000"/>
<path d="M951.4 490.8L953.4 487.0L956.8 484.1" stroke="#ff0500"/>
<path d="M956.8 484.1L960.0 481.6L964.4 478.2" stroke="#ff2400"/>
<path d="M964.4 478.2L969.7 475.8L976.2 474.2L984.0 472.6L993.4 471.3L1003.7 470.7" stroke="#ff4200"/>
<path d="M1003.7 470.7L1016.1 470.4L1029.9 470.1" stroke="#ff2400"/>
<path d="M1029.9 470.1L1044.8 470.4L1063.0 471.1" stroke="#ff0500"/>
<path d="M1063.0 471.1L1082.2 473.2" stroke="#e60000"/>
<path d="M935.0 495.3L936.6 491.2L938.6 488.7" stroke="#ff4200"/>
<path d="M938.6 488.7L939.8 484.9L942.7 482.2" stroke="#ff6100"/>
<path d="M942.7 482.2L946.5 480.1L950.1 477.7" stroke="#ff8000"/>
<path d="M950.1 477.7L955.8 476.5L962.2 475.2" stroke="#ff9e00"/>
<path d="M962.2 475.2L970.8 474.1L981.2 473.2" stroke="#ffbd00"/>
<path d="M981.2 473.2L992.5 471.9L1006.6 471.5" stroke="#ff9e00"/>
<path d="M1006.6 471.5L1022.4 471.2" stroke="#ff8000"/>
<path d="M1022.4 471.2L1040.6 471.3L1062.0 472.7" stroke="#ff6100"/>
<path d="M1062.0 472.7L1086.1 472.7" stroke="#ff4200"/>
<path d="M931.4 501.1L931.8 497.5L932.8 492.8" stroke="#e60000"/>
<path d="M932.8 492.8L933.8 489.5L935.5 486.5" stroke="#ff0500"/>
<path d="M935.5 486.5L937.8 483.6L941.6 480.5" stroke="#ff2400"/>
<path d="M941.6 480.5L946.1 478.1L952.3 476.6L959.1 475.6" stroke="#ff4200"/>
<path d="M959.1 475.6L968.0 474.4" stroke="#ff6100"/>
<path d="M968.0 474.4L978.0 473.0L990.5 472.8" stroke="#ff4200"/>
<path d="M990.5 472.8L1005.2 473.1" stroke="#ff2400"/>
<path d="M1005.2 473.1L1022.0 472.7L1041.5 473.0" stroke="#ff0500"/>
<path d="M1041.5 473.0L1063.7 474.0" stroke="#e60000"/>
<path d="M950.8 501.4L955.0 499.2L958.6 496.8L963.2 493.4" stroke="#c70000"/>
<path d="M963.2 493.4L967.0 491.8L971.0 489.5L975.6 487.3L980.6 485.4" stroke="#e60000"/>
<path d="M980.6 485.4L986.4 482.9L991.3 481.4L998.1 479.5L1005.4 478.2L1012.6 476.7L1021.1 476.1L1029.6 475.7L1039.8 474.0L1051.2 473.9" stroke="#ff0500"/>
<path d="M924.7 511.6L930.1 508.1L936.2 503.7L941.3 500.5" stroke="#c70000"/>
<path d="M941.3 500.5L947.5 497.4L954.2 493.7L961.0 490.5L969.0 487.7L977.3 485.1" stroke="#e60000"/>
<path d="M977.3 485.1L987.2 482.5L997.3 481.0" stroke="#ff0500"/>
<path d="M997.3 481.0L1008.2 479.3L1021.6 477.0L1035.0 475.5L1051.3 474.5L1068.1 474.5L1086.9 474.0" stroke="#e60000"/>
<path d="M926.4 513.1L926.9 506.8" stroke="#c70000"/>
<path d="M926.9 506.8L927.0 502.0L928.5 497.4" stroke="#e60000"/>
<path d="M928.5 497.4L930.8 493.6L934.0 489.7" stroke="#ff0500"/>
<path d="M934.0 489.7L938.6 486.3L945.1 482.8" stroke="#ff2400"/>
<path d="M945.1 482.8L953.7 481.1L963.9 478.6L977.2 476.9L992.5 476.3" stroke="#ff4200"/>
<path d="M992.5 476.3L1010.7 474.4L1031.4 474.2" stroke="#ff2400"/>
<path d="M1031.4 474.2L1056.2 474.5" stroke="#ff0500"/>
<path d="M1056.2 474.5L1084.3 474.3L1115.8 474.5" stroke="#e60000"/>
<path d="M938.8 500.9L938.8 496.7L939.9 494.4" stroke="#ff2400"/>
<path d="M939.9 494.4L941.0 491.4L942.8 488.7" stroke="#ff4200"/>
<path d="M942.8 488.7L945.9 486.7L949.0 484.1" stroke="#ff6100"/>
<path d="M949.0 484.1L952.9 482.6L958.5 480.1" stroke="#ff8000"/>
<path d="M958.5 480.1L966.0 479.2L974.0 477.6L984.4 477.2" stroke="#ff9e00"/>
<path d="M984.4 477.2L996.1 476.0L1009.4 475.5" stroke="#ff8000"/>
<path d="M1009.4 475.5L1024.8 474.4L1043.4 474.5" stroke="#ff6100"/>
<path d="M1043.4 474.5L1064.1 474.7" stroke="#ff4200"/>
<path d="M937.3 494.7L939.0 492.6L941.7 490.1" stroke="#ff0500"/>
<path d="M941.7 490.1L944.1 487.9L947.6 486.5L951.2 485.0" stroke="#ff2400"/>
<path d="M951.2 485.0L956.8 482.7L962.3 481.6L971.0 479.6L980.3 478.9L991.5 477.1" stroke="#ff4200"/>
<path d="M991.5 477.1L1004.6 476.1L1020.8 476.5" stroke="#ff2400"/>
<path d="M1020.8 476.5L1038.8 475.3L1059.7 474.3L1083.8 474.4L1110.2 473.9" stroke="#ff0500"/>
<path d="M929.7 501.8L931.9 497.7" stroke="#e60000"/>
<path d="M931.9 497.7L934.7 494.6L936.9 491.5L940.2 488.1" stroke="#ff0500"/>
<path d="M940.2 488.1L943.1 486.0L947.2 483.7" stroke="#ff2400"/>
<path d="M947.2 483.7L951.0 481.3L956.4 480.3L962.5 478.1" stroke="#ff4200"/>
<path d="M962.5 478.1L969.2 476.8" stroke="#ff6100"/>
<path d="M969.2 476.8L977.1 476.3L985.6 475.1L994.4 475.1" stroke="#ff4200"/>
<path d="M994.4 475.1L1005.2 474.9L1017.8 474.9" stroke="#ff2400"/>
<path d="M1017.8 474.9L1030.8 474.8" stroke="#ff0500"/>
<path d="M926.8 510.4L931.0 506.5L935.7 502.9L940.1 499.7L944.7 497.2" stroke="#e60000"/>
<path d="M944.7 497.2L950.9 493.9L956.5 490.5L963.1 488.7" stroke="#ff0500"/>
<path d="M963.1 488.7L970.4 485.6L979.3 483.2L989.0 481.8L1000.4 480.3" stroke="#ff2400"/>
<path d="M1000.4 480.3L1012.9 478.5L1027.1 477.3L1042.6 476.6L1060.4 475.6L1080.0 474.3" stroke="#ff0500"/>
<path d="M936.1 501.3L937.7 497.3L938.6 493.9" stroke="#c70000"/>
<path d="M938.6 493.9L941.2 490.6L943.7 486.8L946.8 484.9" stroke="#e60000"/>
<path d="M946.8 484.9L950.1 481.5L953.6 479.7" stroke="#ff0500"/>
<path d="M953.6 479.7L958.9 478.0L963.8 476.5L970.3 475.3L977.1 475.2" stroke="#ff2400"/>
<path d="M977.1 475.2L984.9 474.0L993.9 473.7" stroke="#ff0500"/>
<path d="M993.9 473.7L1004.0 474.5L1014.4 473.9L1026.6 474.5" stroke="#e60000"/>
<path d="M928.4 508.5L928.6 502.9" stroke="#ff0500"/>
<path d="M928.6 502.9L929.3 497.9L930.2 493.9" stroke="#ff2400"/>
<path d="M930.2 493.9L931.8 489.7L932.8 486.4" stroke="#ff4200"/>
<path d="M932.8 486.4L934.9 483.1L938.2 481.1" stroke="#ff6100"/>
<path d="M938.2 481.1L941.8 479.0L946.3 477.2" stroke="#ff8000"/>
<path d="M946.3 477.2L951.6 475.0" stroke="#ff9e00"/>
<path d="M951.6 475.0L957.0 474.4L964.7 473.4L973.0 473.5L982.5 472.9" stroke="#ffbd00"/>
<path d="M982.5 472.9L993.3 474.6" stroke="#ff9e00"/>
<path d="M993.3 474.6L1004.7 475.6" stroke="#ff8000"/>
<path d="M935.3 501.4L937.2 497.4L937.9 493.0" stroke="#ff4200"/>
<path d="M937.9 493.0L940.2 489.7L942.3 487.5" stroke="#ff6100"/>
<path d="M942.3 487.5L945.6 483.8" stroke="#ff8000"/>
<path d="M945.6 483.8L948.2 482.1L952.7 479.1" stroke="#ff9e00"/>
<path d="M952.7 479.1L957.9 477.5L962.8 476.9" stroke="#ffbd00"/>
<path d="M962.8 476.9L970.3 474.8L977.9 475.0" stroke="#ffdb00"/>
<path d="M977.9 475.0L987.4 474.5L997.5 474.3" stroke="#ffbd00"/>
<path d="M997.5 474.3L1008.7 474.3" stroke="#ff9e00"/>
<path d="M1008.7 474.3L1022.3 474.9L1036.7 475.8" stroke="#ff8000"/>
<path d="M955.7 500.7L957.7 497.3" stroke="#ff0500"/>
<path d="M957.7 497.3L959.0 493.5" stroke="#ff2400"/>
<path d="M959.0 493.5L961.6 490.3L964.1 488.8" stroke="#ff4200"/>
<path d="M964.1 488.8L968.0 486.0L971.4 483.4L976.0 482.6L981.2 480.7" stroke="#ff6100"/>
<path d="M981.2 480.7L988.1 479.0" stroke="#ff8000"/>
<path d="M988.1 479.0L995.2 478.2L1003.7 476.8L1013.8 475.7L1025.4 476.2" stroke="#ff6100"/>
<path d="M1025.4 476.2L1039.0 475.3L1053.1 475.3L1069.9 475.6" stroke="#ff4200"/>
<path d="M919.0 506.0L920.2 502.1" stroke="#ff2400"/>
<path d="M920.2 502.1L922.8 497.8L924.9 494.4" stroke="#ff4200"/>
<path d="M924.9 494.4L928.1 491.0L933.1 486.9" stroke="#ff6100"/>
<path d="M933.1 486.9L938.0 485.1L945.7 481.9" stroke="#ff8000"/>
<path d="M945.7 481.9L953.9 480.9" stroke="#ff9e00"/>
<path d="M953.9 480.9L964.2 479.3L976.7 477.1L990.3 476.9" stroke="#ffbd00"/>
<path d="M990.3 476.9L1007.3 476.2" stroke="#ff9e00"/>
<path d="M1007.3 476.2L1027.5 475.3L1049.6 475.0" stroke="#ff8000"/>
<path d="M1049.6 475.0L1074.7 475.2L1103.3 475.7" stroke="#ff6100"/>
<path d="M931.7 499.7L934.1 498.0L935.5 495.3L938.4 493.3L941.4 490.7" stroke="#e60000"/>
<path d="M941.4 490.7L945.3 489.2L951.1 487.0L957.1 485.6L965.7 483.3L976.0 482.4" stroke="#ff0500"/>
<path d="M976.0 482.4L988.9 480.7L1004.2 479.3L1021.4 478.8" stroke="#e60000"/>
<path d="M1021.4 478.8L1042.0 478.5L1065.9 477.1" stroke="#c70000"/>
<path d="M1065.9 477.1L1093.7 476.7L1123.8 476.3" stroke="#a80000"/>
<path d="M924.0 505.5L926.9 501.7L931.1 499.2L934.2 496.7" stroke="#ff2400"/>
<path d="M934.2 496.7L939.3 494.0L944.4 492.3L950.1 489.9" stroke="#ff4200"/>
<path d="M950.1 489.9L956.9 486.8L965.0 485.0L974.6 483.9L985.2 482.0L997.5 480.4L1012.7 479.6" stroke="#ff6100"/>
<path d="M1012.7 479.6L1028.8 477.7L1048.4 477.4L1069.5 477.3" stroke="#ff4200"/>
<path d="M1069.5 477.3L1093.2 476.9" stroke="#ff2400"/>
<path d="M935.5 502.6L937.8 498.0" stroke="#c70000"/>
<path d="M937.8 498.0L940.0 494.4L942.5 491.1" stroke="#e60000"/>
<path d="M942.5 491.1L944.7 488.1L948.5 485.2" stroke="#ff0500"/>
<path d="M948.5 485.2L951.2 482.2L955.1 480.1L959.7 478.3" stroke="#ff2400"/>
<path d="M959.7 478.3L965.2 477.1L970.5 475.1L976.1 474.8L982.8 475.0" stroke="#ff4200"/>
<path d="M982.8 475.0L989.1 474.9L997.1 474.2" stroke="#ff2400"/>
<path d="M997.1 474.2L1005.7 475.5L1014.9 476.9" stroke="#ff0500"/>
<path d="M957.9 488.7L958.2 486.2" stroke="#c70000"/>
<path d="M958.2 486.2L957.8 484.4L958.8 482.6" stroke="#e60000"/>
<path d="M958.8 482.6L959.4 480.2L960.5 479.1L962.0 477.5" stroke="#ff0500"/>
<path d="M962.0 477.5L963.1 476.1L965.9 474.9L968.4 474.4L971.3 473.7L975.3 474.2L979.8 473.2" stroke="#ff2400"/>
<path d="M979.8 473.2L984.3 474.3L989.3 474.7" stroke="#ff0500"/>
<path d="M989.3 474.7L996.1 475.1L1002.0 476.3" stroke="#e60000"/>
<path d="M961.3 487.1L962.1 485.4" stroke="#ff6100"/>
<path d="M962.1 485.4L963.6 484.1L964.3 483.5L964.9 482.5L966.0 482.0L967.7 480.9" stroke="#ff8000"/>
<path d="M967.7 480.9L969.0 480.4L970.2 479.2L972.3 478.9L975.9 477.5L978.7 477.6L982.7 476.6L987.2 476.6" stroke="#ff9e00"/>
<path d="M987.2 476.6L992.8 477.1L998.6 476.6L1006.2 476.5" stroke="#ff8000"/>
<path d="M957.0 489.7L957.0 487.6L957.6 485.7" stroke="#e60000"/>
<path d="M957.6 485.7L958.5 483.0L960.1 481.8L963.2 480.4" stroke="#ff0500"/>
<path d="M963.2 480.4L966.2 478.7L970.5 477.4L976.0 476.8L983.5 475.5" stroke="#ff2400"/>
<path d="M983.5 475.5L991.8 475.0L1002.3 475.3" stroke="#ff0500"/>
<path d="M1002.3 475.3L1014.3 474.5L1028.5 474.5" stroke="#e60000"/>
<path d="M1028.5 474.5L1045.2 474.9L1063.9 476.3" stroke="#c70000"/>
<path d="M1063.9 476.3L1085.0 477.0" stroke="#a80000"/>
<path d="M927.1 499.3L928.9 496.7L930.5 493.2" stroke="#ff0500"/>
<path d="M930.5 493.2L933.7 489.9L936.3 487.8L941.2 485.7" stroke="#ff2400"/>
<path d="M941.2 485.7L947.0 483.4L954.2 482.2L962.4 480.2L973.4 479.7L986.7 478.4" stroke="#ff4200"/>
<path d="M986.7 478.4L1001.8 477.6L1020.0 476.6" stroke="#ff2400"/>
<path d="M1020.0 476.6L1040.9 476.9" stroke="#ff0500"/>
<path d="M1040.9 476.9L1064.8 477.2L1091.8 477.0L1123.7 477.0" stroke="#e60000"/>
<path d="M928.6 506.8L933.2 504.5L937.1 501.3L942.1 499.2L947.6 497.4L952.8 494.2L958.7 493.1L964.9 490.5L972.4 488.8L980.5 486.3L989.5 485.2L999.7 484.0L1010.7 482.3L1023.8 480.2L1037.1 479.1L1052.1 478.0L1069.1 477.0" stroke="#c70000"/>
<path d="M944.7 505.5L947.1 503.3L950.2 500.2" stroke="#8a0000"/>
<path d="M950.2 500.2L954.0 498.3L958.5 495.8L962.6 493.6L968.8 491.3L974.5 488.9L982.6 488.1L992.3 486.1L1002.3 484.1L1014.8 482.8L1029.8 480.9" stroke="#a80000"/>
<path d="M1029.8 480.9L1046.1 480.0L1065.1 479.6L1086.7 478.1L1110.9 476.9" stroke="#8a0000"/>
<path d="M936.4 497.8L937.3 495.5L938.2 492.6L939.1 491.2L941.8 489.5" stroke="#ff0500"/>
<path d="M941.8 489.5L944.5 487.3L948.4 486.1L953.3 484.2L960.0 482.9" stroke="#ff2400"/>
<path d="M960.0 482.9L967.4 481.5" stroke="#ff4200"/>
<path d="M967.4 481.5L977.1 481.0L987.6 479.8L1000.3 479.4" stroke="#ff2400"/>
<path d="M1000.3 479.4L1014.9 478.8L1032.0 478.6" stroke="#ff0500"/>
<path d="M1032.0 478.6L1050.9 478.6L1073.3 477.1" stroke="#e60000"/>
<path d="M956.9 490.2L957.0 488.9L958.7 486.6L959.2 486.5L961.0 485.1" stroke="#ff4200"/>
<path d="M961.0 485.1L964.0 483.3L967.3 482.8L972.3 481.7L978.1 480.9L985.5 480.8" stroke="#ff6100"/>
<path d="M985.5 480.8L994.9 480.9L1005.8 480.0" stroke="#ff4200"/>
<path d="M1005.8 480.0L1018.3 479.4L1033.4 479.2L1051.4 478.7" stroke="#ff2400"/>
<path d="M1051.4 478.7L1070.6 478.2L1093.7 478.2" stroke="#ff0500"/>
<path d="M929.3 508.3L934.4 505.8L938.8 503.0L943.2 499.8L948.1 497.8L953.3 495.3L958.1 493.7L964.1 490.6L969.9 488.7L975.4 487.4L982.8 485.8L990.3 483.1L998.5 482.4L1007.4 481.0L1017.3 479.9L1028.0 478.9L1040.1 477.7" stroke="#c70000"/>
<path d="M952.3 499.7L951.8 497.3L953.3 493.7" stroke="#ff0500"/>
<path d="M953.3 493.7L954.3 490.7L956.5 488.4" stroke="#ff2400"/>
<path d="M956.5 488.4L959.0 485.5" stroke="#ff4200"/>
<path d="M959.0 485.5L963.6 483.1L968.7 481.8L976.7 480.4L984.8 478.5L996.2 478.1" stroke="#ff6100"/>
<path d="M996.2 478.1L1008.8 476.5L1023.6 476.9" stroke="#ff4200"/>
<path d="M1023.6 476.9L1041.6 476.6L1061.9 476.8" stroke="#ff2400"/>
<path d="M1061.9 476.8L1085.7 476.7L1112.0 477.7" stroke="#ff0500"/>
<path d="M927.0 502.2L930.7 499.1L933.2 496.9L937.0 493.8L941.6 491.9L946.9 489.8L952.5 487.7" stroke="#c70000"/>
<path d="M952.5 487.7L960.0 485.3" stroke="#e60000"/>
<path d="M960.0 485.3L969.7 484.6L980.4 482.8L992.5 481.2L1007.0 479.8" stroke="#c70000"/>
<path d="M1007.0 479.8L1024.3 479.1L1043.8 478.3" stroke="#a80000"/>
<path d="M1043.8 478.3L1065.3 478.2L1090.9 477.8L1118.7 477.5" stroke="#8a0000"/>
<path d="M927.7 506.7L930.2 503.3L932.8 499.5L935.9 496.3" stroke="#ff2400"/>
<path d="M935.9 496.3L939.4 493.2L943.1 490.9" stroke="#ff4200"/>
<path d="M943.1 490.9L947.8 488.9L952.8 486.8" stroke="#ff6100"/>
<path d="M952.8 486.8L958.7 484.7L965.0 483.6L972.3 481.8L981.1 480.6L990.8 479.5L1001.8 479.3" stroke="#ff8000"/>
<path d="M1001.8 479.3L1014.0 479.4L1027.1 478.7" stroke="#ff6100"/>
<path d="M1027.1 478.7L1042.0 478.9" stroke="#ff4200"/>
<path d="M956.3 494.5L957.2 492.4L958.0 491.1L959.2 489.1" stroke="#ff2400"/>
<path d="M959.2 489.1L960.9 487.3L963.1 486.0L964.8 485.8L968.2 483.6" stroke="#ff4200"/>
<path d="M968.2 483.6L971.1 483.0L975.0 481.9" stroke="#ff6100"/>
<path d="M975.0 481.9L980.3 481.9L985.7 480.9L992.5 480.1L999.9 479.8L1009.5 478.5" stroke="#ff4200"/>
<path d="M1009.5 478.5L1019.4 479.2L1029.9 478.5" stroke="#ff2400"/>
<path d="M938.5 501.7L939.1 498.7L940.0 495.4" stroke="#ff0500"/>
<path d="M940.0 495.4L940.7 492.8L941.9 490.2L944.1 488.2" stroke="#ff2400"/>
<path d="M944.1 488.2L945.1 486.6L947.4 484.0L949.8 483.1" stroke="#ff4200"/>
<path d="M949.8 483.1L953.3 481.4L956.9 480.6L961.4 479.7L965.7 478.9L970.7 478.7L977.0 477.6L983.6 478.9" stroke="#ff6100"/>
<path d="M983.6 478.9L991.1 478.3" stroke="#ff4200"/>
<path d="M965.4 498.5L966.9 496.2" stroke="#ff0500"/>
<path d="M966.9 496.2L968.5 494.0L971.2 492.2L973.2 490.3" stroke="#ff2400"/>
<path d="M973.2 490.3L975.2 488.8L978.6 486.2L980.9 485.2L984.8 483.9" stroke="#ff4200"/>
<path d="M984.8 483.9L989.4 482.2L994.1 481.1L999.9 479.6L1006.6 479.9" stroke="#ff6100"/>
<path d="M1006.6 479.9L1014.2 478.9L1022.8 478.1L1031.7 478.4L1042.2 478.3" stroke="#ff4200"/>
<path d="M936.6 500.7L938.9 498.0L941.7 496.5L944.0 493.4L947.4 491.3" stroke="#ff0500"/>
<path d="M947.4 491.3L951.5 489.7L956.9 488.1L962.8 486.3L970.2 483.8L978.5 482.5L988.9 481.3L1001.8 480.9" stroke="#ff2400"/>
<path d="M1001.8 480.9L1015.9 479.8L1032.7 479.4" stroke="#ff0500"/>
<path d="M1032.7 479.4L1051.5 478.7L1073.2 478.8L1097.2 478.8" stroke="#e60000"/>
<path d="M936.7 495.7L938.2 493.1" stroke="#c70000"/>
<path d="M938.2 493.1L940.6 490.1L942.8 487.1L945.5 485.1" stroke="#e60000"/>
<path d="M945.5 485.1L949.4 482.9L953.5 482.3L959.2 480.0L966.6 479.6L975.0 477.9" stroke="#ff0500"/>
<path d="M975.0 477.9L985.2 477.6L997.5 477.3" stroke="#e60000"/>
<path d="M997.5 477.3L1010.5 477.4L1027.4 476.5" stroke="#c70000"/>
<path d="M1027.4 476.5L1045.6 477.9" stroke="#a80000"/>
<path d="M1045.6 477.9L1066.5 478.6L1089.6 479.2" stroke="#8a0000"/>
<path d="M965.9 494.6L966.2 492.8L966.9 490.4" stroke="#ff2400"/>
<path d="M966.9 490.4L968.1 488.9L968.7 488.1L970.8 486.7L973.9 485.5L977.1 483.9" stroke="#ff4200"/>
<path d="M977.1 483.9L981.1 483.1L986.6 482.2" stroke="#ff6100"/>
<path d="M986.6 482.2L992.5 482.1L999.7 481.5L1009.0 480.8L1019.4 479.9" stroke="#ff4200"/>
<path d="M1019.4 479.9L1031.5 479.9L1044.4 479.0L1059.5 478.6" stroke="#ff2400"/>
<path d="M921.4 512.8L925.7 509.4L930.4 506.4L935.3 503.4L940.6 500.2L946.8 497.7L953.3 494.8L960.4 492.4" stroke="#c70000"/>
<path d="M960.4 492.4L968.2 490.0L976.9 488.8L987.1 485.6L998.8 484.0" stroke="#e60000"/>
<path d="M998.8 484.0L1010.9 482.6L1025.1 481.5L1040.9 480.4L1058.8 479.7" stroke="#c70000"/>
<path d="M1058.8 479.7L1078.1 479.5" stroke="#a80000"/>
<path d="M946.4 504.1L949.2 501.7L953.2 498.6L956.3 497.2L959.9 494.2" stroke="#e60000"/>
<path d="M959.9 494.2L964.5 492.3L968.9 490.6L973.3 488.9L979.3 487.0L986.5 486.2L993.7 484.5L1002.3 483.1L1012.1 482.2L1023.2 481.6" stroke="#ff0500"/>
<path d="M1023.2 481.6L1035.4 479.9L1048.6 479.4L1063.8 478.9" stroke="#e60000"/>
<path d="M926.0 508.4L926.2 504.2L927.1 500.0" stroke="#e60000"/>
<path d="M927.1 500.0L927.6 495.3L929.8 492.5" stroke="#ff0500"/>
<path d="M929.8 492.5L932.8 489.2L935.4 486.5L939.8 484.9" stroke="#ff2400"/>
<path d="M939.8 484.9L945.8 482.4L953.0 481.0L960.9 479.5L971.5 479.5L983.3 479.2" stroke="#ff4200"/>
<path d="M983.3 479.2L997.4 477.8L1012.5 478.5" stroke="#ff2400"/>
<path d="M1012.5 478.5L1031.0 478.6" stroke="#ff0500"/>
<path d="M1031.0 478.6L1051.2 479.2" stroke="#e60000"/>
<path d="M920.7 507.3L920.6 503.3" stroke="#e60000"/>
<path d="M920.6 503.3L921.5 499.5L922.5 495.3" stroke="#ff0500"/>
<path d="M922.5 495.3L923.3 492.4L925.7 489.3L928.5 486.6" stroke="#ff2400"/>
<path d="M928.5 486.6L931.3 484.8L935.8 482.7L941.5 481.1L948.7 480.5" stroke="#ff4200"/>
<path d="M948.7 480.5L956.6 479.9L966.7 479.1" stroke="#ff6100"/>
<path d="M966.7 479.1L978.8 478.7L991.5 478.5" stroke="#ff4200"/>
<path d="M991.5 478.5L1006.9 479.4" stroke="#ff2400"/>
<path d="M1006.9 479.4L1024.6 478.9" stroke="#ff0500"/>
<path d="M959.6 497.0L960.5 493.6L960.7 491.1" stroke="#ff2400"/>
<path d="M960.7 491.1L961.7 488.7L964.1 486.9" stroke="#ff4200"/>
<path d="M964.1 486.9L966.1 483.7L969.2 482.1L973.1 481.1L978.6 479.7" stroke="#ff6100"/>
<path d="M978.6 479.7L984.1 478.2" stroke="#ff8000"/>
<path d="M984.1 478.2L992.2 477.7L1000.9 477.5L1012.0 477.4" stroke="#ff6100"/>
<path d="M1012.0 477.4L1023.8 477.8L1038.8 478.2" stroke="#ff4200"/>
<path d="M1038.8 478.2L1055.2 478.7L1073.3 479.3" stroke="#ff2400"/>
<path d="M942.3 494.1L943.0 492.3" stroke="#ff2400"/>
<path d="M943.0 492.3L943.5 491.5L944.9 489.4L945.8 487.9" stroke="#ff4200"/>
<path d="M945.8 487.9L947.9 486.8L951.2 485.2L954.2 485.0L957.2 484.0L962.2 482.2" stroke="#ff6100"/>
<path d="M962.2 482.2L966.9 482.0L973.9 481.0" stroke="#ff8000"/>
<path d="M973.9 481.0L981.0 480.9L988.6 480.5L998.2 479.6" stroke="#ff6100"/>
<path d="M998.2 479.6L1009.0 479.2L1021.4 479.0" stroke="#ff4200"/>
<path d="M952.2 495.7L952.5 492.5" stroke="#e60000"/>
<path d="M952.5 492.5L953.2 489.3" stroke="#ff0500"/>
<path d="M953.2 489.3L953.6 487.5L954.9 485.7L957.9 483.5" stroke="#ff2400"/>
<path d="M957.9 483.5L960.4 481.8L965.5 481.2L970.7 478.9L978.3 478.8L986.1 477.9" stroke="#ff4200"/>
<path d="M986.1 477.9L997.0 478.1L1009.7 477.9" stroke="#ff2400"/>
<path d="M1009.7 477.9L1024.2 477.4L1041.3 477.5" stroke="#ff0500"/>
<path d="M1041.3 477.5L1060.7 478.5" stroke="#e60000"/>
<path d="M1060.7 478.5L1082.7 480.1" stroke="#c70000"/>
<path d="M941.2 505.2L942.5 501.1L943.6 497.9" stroke="#ff0500"/>
<path d="M943.6 497.9L945.7 495.1L947.4 493.2L950.2 491.1" stroke="#ff2400"/>
<path d="M950.2 491.1L954.0 488.7L959.1 486.4" stroke="#ff4200"/>
<path d="M959.1 486.4L964.5 485.0L970.9 483.8L979.0 483.0" stroke="#ff6100"/>
<path d="M979.0 483.0L988.8 481.8L1000.1 481.7L1013.0 480.7" stroke="#ff4200"/>
<path d="M1013.0 480.7L1028.0 480.0L1045.3 479.8" stroke="#ff2400"/>
<path d="M1045.3 479.8L1064.6 480.5" stroke="#ff0500"/>
<path d="M927.6 513.3L929.7 508.7L932.0 503.6L933.9 499.6" stroke="#c70000"/>
<path d="M933.9 499.6L936.9 496.2L941.3 493.4L945.2 490.3" stroke="#e60000"/>
<path d="M945.2 490.3L950.6 487.5L957.0 485.1L965.2 483.8L973.7 482.6L983.5 480.7L995.6 479.7" stroke="#ff0500"/>
<path d="M995.6 479.7L1008.6 479.6L1023.2 479.2" stroke="#e60000"/>
<path d="M1023.2 479.2L1040.0 479.7" stroke="#c70000"/>
<path d="M1040.0 479.7L1058.8 480.1" stroke="#a80000"/>
<path d="M933.6 500.3L934.8 497.0L935.9 493.9" stroke="#e60000"/>
<path d="M935.9 493.9L936.5 491.7L938.5 488.4L941.4 486.2" stroke="#ff0500"/>
<path d="M941.4 486.2L944.1 484.8L947.2 483.2L951.6 482.1L957.3 480.7L962.8 479.8L969.5 479.9L976.7 479.1L985.0 479.4" stroke="#ff2400"/>
<path d="M985.0 479.4L994.7 478.9L1005.7 479.5" stroke="#ff0500"/>
<path d="M1005.7 479.5L1017.5 479.7" stroke="#e60000"/>
<path d="M954.1 498.7L956.5 496.4L957.9 494.6L960.1 493.6" stroke="#e60000"/>
<path d="M960.1 493.6L963.5 491.2L966.9 490.2L970.4 489.0L975.1 487.3L980.1 486.5L986.7 485.6L993.7 484.0L1002.8 483.4L1013.1 483.2" stroke="#ff0500"/>
<path d="M1013.1 483.2L1024.5 482.6L1037.4 481.7L1051.2 481.2L1068.4 480.0" stroke="#e60000"/>
<path d="M965.0 497.0L966.6 493.4" stroke="#ff2400"/>
<path d="M966.6 493.4L968.4 491.3L970.3 488.9L972.7 487.7" stroke="#ff4200"/>
<path d="M972.7 487.7L974.8 485.4L978.8 484.2L981.3 482.6L985.5 480.9L990.9 480.9L996.3 479.1L1001.3 479.0L1008.5 478.5L1016.7 478.9" stroke="#ff6100"/>
<path d="M1016.7 478.9L1025.3 478.7L1034.2 479.2L1045.2 480.9" stroke="#ff4200"/>
<path d="M963.0 496.2L963.8 494.6L963.2 492.9L963.4 491.7" stroke="#ff2400"/>
<path d="M963.4 491.7L963.2 489.9L964.2 488.0L963.9 487.3L964.6 486.7" stroke="#ff4200"/>
<path d="M964.6 486.7L965.0 484.9L965.9 484.2L966.3 483.3L966.2 483.3L967.2 482.9" stroke="#ff6100"/>
<path d="M967.2 482.9L967.6 481.5L968.4 481.5L969.4 480.7L970.6 481.0" stroke="#ff8000"/>
<path d="M962.9 493.8L962.7 492.0" stroke="#ff2400"/>
<path d="M962.7 492.0L963.5 490.7L964.3 489.0L965.0 488.2L966.5 487.5L969.6 485.8" stroke="#ff4200"/>
<path d="M969.6 485.8L972.0 484.7L976.1 483.8L981.0 482.8L986.5 482.0" stroke="#ff6100"/>
<path d="M986.5 482.0L993.6 481.6L1002.1 481.1L1011.5 481.3" stroke="#ff4200"/>
<path d="M1011.5 481.3L1023.0 480.7L1035.7 480.9L1049.5 481.3" stroke="#ff2400"/>
<path d="M935.4 505.6L936.1 502.1" stroke="#a80000"/>
<path d="M936.1 502.1L937.0 500.0L938.5 496.7L940.0 494.0L943.3 492.2" stroke="#c70000"/>
<path d="M943.3 492.2L946.1 490.2L950.6 487.3L955.4 485.9L961.2 484.8L967.9 483.2L977.2 483.1" stroke="#e60000"/>
<path d="M977.2 483.1L986.4 482.3L998.1 481.2" stroke="#c70000"/>
<path d="M998.1 481.2L1011.2 481.4L1025.4 481.4" stroke="#a80000"/>
<path d="M1025.4 481.4L1042.0 480.6" stroke="#8a0000"/>
<path d="M961.6 492.8L962.1 490.4L963.2 488.8" stroke="#ff4200"/>
<path d="M963.2 488.8L964.5 487.4L966.8 485.1L968.7 483.9L970.6 483.3" stroke="#ff6100"/>
<path d="M970.6 483.3L972.6 481.2L976.1 481.0L980.2 480.0L984.0 479.3L989.1 479.3" stroke="#ff8000"/>
<path d="M989.1 479.3L996.0 479.5L1002.3 479.3" stroke="#ff6100"/>
<path d="M1002.3 479.3L1010.3 479.7L1019.0 480.4" stroke="#ff4200"/>
<path d="M1019.0 480.4L1029.3 481.7" stroke="#ff2400"/>
<path d="M931.0 500.2L931.7 498.4L933.5 495.8L935.6 493.2" stroke="#ff0500"/>
<path d="M935.6 493.2L936.9 491.4L940.3 490.2L943.3 488.4L947.2 486.7" stroke="#ff2400"/>
<path d="M947.2 486.7L952.1 485.7L958.7 484.6L966.0 483.3L974.3 483.2" stroke="#ff4200"/>
<path d="M974.3 483.2L984.2 482.4L994.8 481.7L1008.0 481.3" stroke="#ff2400"/>
<path d="M1008.0 481.3L1022.8 481.6L1039.1 481.1" stroke="#ff0500"/>
<path d="M950.3 501.3L951.1 497.5L951.7 495.7L952.2 492.4" stroke="#e60000"/>
<path d="M952.2 492.4L953.4 490.4L955.8 487.8" stroke="#ff0500"/>
<path d="M955.8 487.8L958.3 486.5L961.6 484.9L966.1 482.9L971.5 481.2L977.6 480.4L984.9 479.9L993.9 479.9" stroke="#ff2400"/>
<path d="M993.9 479.9L1004.4 479.8L1015.7 479.9" stroke="#ff0500"/>
<path d="M1015.7 479.9L1028.5 480.2L1042.5 481.0" stroke="#e60000"/>
<path d="M954.5 494.3L956.3 493.3L956.8 491.3L958.5 490.5L960.4 489.6" stroke="#ff4200"/>
<path d="M960.4 489.6L961.6 488.5L964.4 486.8L968.1 485.7L972.8 484.8L978.5 484.1L985.5 484.3L993.5 482.6L1003.7 482.2" stroke="#ff6100"/>
<path d="M1003.7 482.2L1016.4 482.5L1029.7 482.4" stroke="#ff4200"/>
<path d="M1029.7 482.4L1045.2 481.0L1063.6 481.8" stroke="#ff2400"/>
<path d="M962.7 485.3L963.1 484.9L963.4 484.8L964.5 484.0" stroke="#ff8000"/>
<path d="M964.5 484.0L965.4 483.0L967.4 483.3" stroke="#ff9e00"/>
<path d="M967.4 483.3L970.6 482.7" stroke="#ff8000"/>
<path d="M970.6 482.7L973.9 481.2" stroke="#ff9e00"/>
<path d="M973.9 481.2L978.1 481.9L983.6 481.1L990.4 480.7L998.5 480.4" stroke="#ff8000"/>
<path d="M998.5 480.4L1007.7 480.9L1018.7 480.6" stroke="#ff6100"/>
<path d="M1018.7 480.6L1032.0 480.4L1045.7 480.5L1062.1 481.4" stroke="#ff4200"/>
<path d="M918.7 504.4L919.7 501.8L920.2 499.2L920.8 495.8" stroke="#ff2400"/>
<path d="M920.8 495.8L922.7 493.8L924.1 490.7L926.2 488.2" stroke="#ff4200"/>
<path d="M926.2 488.2L927.9 487.0L930.9 484.8L935.6 483.7" stroke="#ff6100"/>
<path d="M935.6 483.7L939.2 483.2L944.4 482.3L950.7 481.1" stroke="#ff8000"/>
<path d="M950.7 481.1L958.2 480.7L966.3 480.5" stroke="#ff9e00"/>
<path d="M966.3 480.5L974.5 480.8L985.6 481.5" stroke="#ff8000"/>
<path d="M949.8 497.7L951.7 496.2" stroke="#ff2400"/>
<path d="M951.7 496.2L954.1 494.8L956.4 492.8L958.1 491.7L959.7 490.3" stroke="#ff4200"/>
<path d="M959.7 490.3L961.7 487.9L963.3 487.4" stroke="#ff6100"/>
<path d="M963.3 487.4L966.1 485.4L967.4 485.3L970.3 483.6L972.2 483.4L974.9 482.5L977.6 482.7L980.9 481.6L984.2 481.5L987.0 481.7" stroke="#ff8000"/>
<path d="M932.9 507.7L933.8 505.0" stroke="#c70000"/>
<path d="M933.8 505.0L934.6 501.2L936.5 498.5L938.5 494.8" stroke="#e60000"/>
<path d="M938.5 494.8L941.3 492.5L945.1 490.8L949.6 488.8L955.7 486.7L963.2 485.2" stroke="#ff0500"/>
<path d="M963.2 485.2L971.9 483.3" stroke="#ff2400"/>
<path d="M971.9 483.3L982.0 482.5L994.1 481.5L1006.9 481.0" stroke="#ff0500"/>
<path d="M1006.9 481.0L1022.5 480.9" stroke="#e60000"/>
<path d="M1022.5 480.9L1040.7 481.6L1060.7 481.4" stroke="#c70000"/>
<path d="M949.3 494.4L951.4 493.2L952.8 491.8" stroke="#c70000"/>
<path d="M952.8 491.8L954.7 490.7L955.6 489.8L957.5 488.4L959.7 486.7L960.9 486.1L962.9 484.9L965.1 485.0L968.1 484.5L970.6 483.1L972.6 483.1L976.7 482.1L979.6 482.2L983.7 482.6L987.9 482.5" stroke="#e60000"/>
<path d="M943.9 505.0L945.6 501.2" stroke="#ff0500"/>
<path d="M945.6 501.2L945.9 498.7L948.0 494.9" stroke="#ff2400"/>
<path d="M948.0 494.9L949.1 492.6L951.1 490.4L953.5 488.7" stroke="#ff4200"/>
<path d="M953.5 488.7L955.5 486.6L958.7 484.4" stroke="#ff6100"/>
<path d="M958.7 484.4L963.1 483.5L967.9 483.0L973.2 481.8L978.7 481.1" stroke="#ff8000"/>
<path d="M978.7 481.1L985.6 481.2L994.5 480.8L1003.7 481.3" stroke="#ff6100"/>
<path d="M1003.7 481.3L1014.0 482.4" stroke="#ff4200"/>
<path d="M928.4 499.8L930.2 496.6L932.4 494.7L933.5 492.0L935.9 489.8" stroke="#ff2400"/>
<path d="M935.9 489.8L938.9 488.2L942.4 486.4L946.2 484.8" stroke="#ff4200"/>
<path d="M946.2 484.8L949.9 483.2L955.0 483.0L960.2 481.8L967.6 481.4L974.9 481.6L982.4 481.0" stroke="#ff6100"/>
<path d="M982.4 481.0L992.2 481.8" stroke="#ff4200"/>
<path d="M992.2 481.8L1001.9 482.0L1013.7 482.9" stroke="#ff2400"/>
<path d="M948.3 490.7L948.8 489.4L949.0 488.3" stroke="#c70000"/>
<path d="M949.0 488.3L949.9 486.4L950.6 484.6L953.1 484.0L954.8 482.6L957.6 482.0L961.6 481.6L965.8 480.6L971.6 480.1L978.5 480.9" stroke="#e60000"/>
<path d="M978.5 480.9L986.6 480.7L995.0 481.3" stroke="#c70000"/>
<path d="M995.0 481.3L1005.9 481.6L1017.4 481.4" stroke="#a80000"/>
<path d="M1017.4 481.4L1030.9 482.3" stroke="#8a0000"/>
<path d="M945.9 494.1L948.0 493.4L949.4 491.9L951.7 491.7L953.0 491.2L956.4 489.8L959.3 489.8L962.4 488.8" stroke="#ff2400"/>
<path d="M962.4 488.8L967.0 488.4" stroke="#ff4200"/>
<path d="M967.0 488.4L972.9 487.6L979.6 487.6L986.6 486.4L995.9 485.9" stroke="#ff2400"/>
<path d="M995.9 485.9L1006.5 485.5L1018.5 484.2L1032.6 483.7L1047.8 483.5" stroke="#ff0500"/>
<path d="M920.1 510.0L924.2 507.1L928.3 504.4L931.8 502.8L936.2 500.0L940.5 497.3L943.9 495.4L948.6 493.6L952.2 491.7L956.7 489.8L961.7 489.3L966.6 487.6L971.9 486.4L977.7 485.1L982.9 484.3L989.2 483.8" stroke="#c70000"/>
<path d="M989.2 483.8L995.7 483.3" stroke="#a80000"/>
<path d="M963.1 484.3L963.4 483.6" stroke="#ff2400"/>
<path d="M963.4 483.6L963.3 483.2L964.0 482.9L963.8 482.4L964.4 482.2L965.0 482.1L965.6 482.1L966.8 481.6L967.8 481.5L968.8 482.1L969.9 481.8L972.2 481.8" stroke="#ff4200"/>
<path d="M972.2 481.8L974.8 482.0L977.2 482.5L980.6 483.6" stroke="#ff2400"/>
<path d="M980.6 483.6L984.2 484.0" stroke="#ff0500"/>
<path d="M950.2 498.3L950.6 496.7L951.3 494.7L953.0 493.0" stroke="#ff0500"/>
<path d="M953.0 493.0L954.1 492.6L956.2 490.7L958.6 490.7L961.8 489.3L965.5 489.0L969.9 488.3L975.6 487.3L982.5 487.1L989.8 485.8" stroke="#ff2400"/>
<path d="M989.8 485.8L997.5 486.1L1007.5 484.8L1018.1 484.4L1030.5 484.4" stroke="#ff0500"/>
<path d="M932.7 500.5L935.0 498.5L936.5 497.5" stroke="#e60000"/>
<path d="M936.5 497.5L938.4 496.4L941.0 494.9L944.1 493.5L946.2 493.3L949.4 492.3L953.8 490.3L958.4 489.6L963.1 489.5L968.7 488.0L976.2 487.3L983.4 486.0" stroke="#ff0500"/>
<path d="M983.4 486.0L992.5 485.9L1002.0 484.4L1012.2 483.8" stroke="#e60000"/>
<path d="M958.5 491.2L958.9 491.5L958.6 490.2L959.2 489.7" stroke="#ff0500"/>
<path d="M959.2 489.7L959.2 488.9L959.8 489.0L960.8 488.3L962.4 487.4L963.9 487.4L966.0 486.2L968.5 485.7L971.5 485.6L975.8 485.5L980.0 484.8" stroke="#ff2400"/>
<path d="M980.0 484.8L984.7 485.5L990.9 485.5L997.5 485.2" stroke="#ff0500"/>
<path d="M954.5 498.9L956.4 496.4L958.4 494.7" stroke="#a80000"/>
<path d="M958.4 494.7L959.8 492.6L961.4 490.1L964.3 488.3" stroke="#c70000"/>
<path d="M964.3 488.3L966.8 486.6L969.0 486.0L973.0 484.2L976.2 483.3L980.8 483.3L986.1 482.5L992.5 482.4" stroke="#e60000"/>
<path d="M992.5 482.4L999.7 483.3L1007.4 483.8" stroke="#c70000"/>
<path d="M1007.4 483.8L1016.2 484.4L1025.3 484.2" stroke="#a80000"/>
<path d="M927.9 506.5L929.3 503.6L931.1 500.4" stroke="#ff2400"/>
<path d="M931.1 500.4L932.1 497.5L934.8 495.1L936.6 492.6" stroke="#ff4200"/>
<path d="M936.6 492.6L940.2 490.3L943.4 489.2L948.1 487.1" stroke="#ff6100"/>
<path d="M948.1 487.1L952.2 485.8L958.6 485.5L964.5 484.3L972.3 484.0L980.7 483.3" stroke="#ff8000"/>
<path d="M980.7 483.3L990.3 484.1L1001.5 483.8" stroke="#ff6100"/>
<path d="M1001.5 483.8L1013.3 484.9" stroke="#ff4200"/>
<path d="M929.7 510.4L931.4 506.9L933.8 504.4" stroke="#c70000"/>
<path d="M933.8 504.4L936.2 501.6L938.3 499.3L940.5 497.2L943.8 495.1L947.7 494.2L952.7 491.6" stroke="#e60000"/>
<path d="M952.7 491.6L957.0 490.3L962.9 489.3L970.0 488.0L977.8 486.6" stroke="#ff0500"/>
<path d="M977.8 486.6L986.6 485.7L997.1 485.6L1008.3 485.1" stroke="#e60000"/>
<path d="M1008.3 485.1L1021.5 485.3" stroke="#c70000"/>
<path d="M960.3 500.0L961.3 499.0" stroke="#c70000"/>
<path d="M961.3 499.0L963.7 497.7L965.6 497.1L967.2 495.5L969.9 494.2L972.3 493.4L974.7 493.3L978.5 492.0L982.3 490.9L986.6 490.5L992.2 490.0L997.8 488.5L1004.3 488.5L1012.1 486.8L1021.6 485.6L1032.1 485.4" stroke="#e60000"/>
<path d="M936.5 510.8L937.4 506.6L938.9 504.2L940.2 500.9" stroke="#c70000"/>
<path d="M940.2 500.9L941.9 497.7L944.5 495.7L947.9 492.8" stroke="#e60000"/>
<path d="M947.9 492.8L951.2 491.5L954.4 490.0L959.0 487.7L964.3 486.7L970.7 486.0L976.7 485.2L984.4 485.5" stroke="#ff0500"/>
<path d="M984.4 485.5L992.4 485.7L1002.3 485.2" stroke="#e60000"/>
<path d="M1002.3 485.2L1011.9 485.7" stroke="#c70000"/>
<path d="M921.6 507.8L924.2 505.6L927.4 503.3L929.1 501.1L932.1 499.0" stroke="#ff2400"/>
<path d="M932.1 499.0L934.5 496.9L937.2 495.4L940.7 493.5" stroke="#ff4200"/>
<path d="M940.7 493.5L943.0 491.5L945.9 490.4L949.7 489.6L953.1 488.8L957.6 487.4" stroke="#ff6100"/>
<path d="M957.6 487.4L961.7 487.0L965.6 486.1L970.8 486.4" stroke="#ff8000"/>
<path d="M970.8 486.4L976.1 486.4" stroke="#ff6100"/>
<path d="M940.7 503.0L942.7 502.1L945.5 499.9L947.8 498.6" stroke="#e60000"/>
<path d="M947.8 498.6L950.7 497.3L953.6 496.2L956.3 494.3L959.6 493.0L963.4 492.7L968.6 491.3L973.0 490.7L979.2 489.4L985.4 489.0L992.5 487.8" stroke="#ff0500"/>
<path d="M992.5 487.8L1001.1 487.9L1010.4 487.1L1020.4 487.0" stroke="#e60000"/>
<path d="M937.4 503.7L938.7 500.7L938.8 498.4L939.6 496.6L940.7 494.1" stroke="#e60000"/>
<path d="M940.7 494.1L941.4 493.0L942.8 491.2L945.0 489.3L946.9 488.0" stroke="#ff0500"/>
<path d="M946.9 488.0L949.8 487.5L952.4 486.7L955.9 486.7L960.6 485.5L965.0 485.6" stroke="#ff2400"/>
<path d="M965.0 485.6L969.6 486.0L976.1 486.4" stroke="#ff0500"/>
<path d="M976.1 486.4L982.5 486.9" stroke="#e60000"/>
<path d="M943.6 502.6L944.0 500.2L945.9 499.0L946.7 496.5L949.0 495.0" stroke="#ff0500"/>
<path d="M949.0 495.0L950.5 493.7L953.0 491.2L955.4 490.5L958.4 489.5L962.0 488.8L965.3 488.3L970.2 487.6L975.1 486.7L981.1 487.2L988.1 486.9" stroke="#ff2400"/>
<path d="M988.1 486.9L994.7 486.6L1002.7 487.4" stroke="#ff0500"/>
<path d="M950.8 502.2L952.2 499.6L953.7 498.2L955.4 496.6L957.0 495.7L958.6 493.6" stroke="#e60000"/>
<path d="M958.6 493.6L961.1 492.3L963.4 491.6L965.5 490.5L968.2 489.2L971.8 488.0L975.1 487.9L979.2 487.0L983.5 487.1L988.6 487.4" stroke="#ff0500"/>
<path d="M988.6 487.4L994.0 487.1L999.6 487.7" stroke="#e60000"/>
<path d="M951.2 496.5L951.5 495.6L951.9 494.1" stroke="#c70000"/>
<path d="M951.9 494.1L953.4 492.6L954.6 491.4L955.6 489.8L958.3 488.5L960.8 487.4" stroke="#e60000"/>
<path d="M960.8 487.4L963.1 486.7L966.6 486.8" stroke="#ff0500"/>
<path d="M966.6 486.8L969.8 486.5L974.2 486.2L979.0 486.0L983.9 485.7" stroke="#e60000"/>
<path d="M983.9 485.7L989.7 486.7L995.9 487.1L1003.3 488.1" stroke="#c70000"/>
<path d="M934.6 498.4L934.6 497.2" stroke="#ff0500"/>
<path d="M934.6 497.2L936.4 495.4L936.9 493.2L938.4 493.0L939.5 490.9L941.5 490.7L944.4 489.9" stroke="#ff2400"/>
<path d="M944.4 489.9L947.1 488.7L950.5 488.0L954.6 487.9L959.2 487.5L965.3 487.3L972.4 486.6" stroke="#ff4200"/>
<path d="M972.4 486.6L979.4 487.5L988.1 487.5" stroke="#ff2400"/>
<path d="M988.1 487.5L998.3 487.8" stroke="#ff0500"/>
<path d="M940.9 498.9L941.5 496.6L942.3 495.4L943.2 494.0L943.5 493.0L945.3 491.5" stroke="#c70000"/>
<path d="M945.3 491.5L947.3 490.9L949.1 489.5L951.6 488.6L954.1 488.6L957.6 487.2" stroke="#e60000"/>
<path d="M957.6 487.2L961.4 487.7L966.4 487.5L971.7 487.4L977.8 486.7" stroke="#c70000"/>
<path d="M977.8 486.7L983.9 487.3L991.4 487.5" stroke="#a80000"/>
<path d="M965.0 494.2L965.0 493.4L965.4 493.4" stroke="#e60000"/>
<path d="M965.4 493.4L965.3 492.1L966.3 492.3L966.9 491.3L967.9 490.7L970.2 489.7L971.6 489.5L973.4 488.6L976.6 488.6L979.9 488.1L983.4 487.9L988.3 488.7" stroke="#ff0500"/>
<path d="M988.3 488.7L993.7 488.1L998.8 489.1L1006.4 488.8" stroke="#e60000"/>
<path d="M927.1 511.0L928.6 508.1L929.0 505.0L930.5 503.0" stroke="#ff0500"/>
<path d="M930.5 503.0L933.0 499.8L934.6 498.5L936.8 496.3L939.2 494.6" stroke="#ff2400"/>
<path d="M939.2 494.6L942.3 493.5L946.7 491.7L950.9 490.3L955.7 490.0L960.5 489.8L967.0 489.1L973.2 488.2L981.5 488.8" stroke="#ff4200"/>
<path d="M981.5 488.8L989.8 488.9" stroke="#ff2400"/>
<path d="M964.3 485.9L964.7 486.2L964.9 485.8L965.1 485.5L965.0 485.3L966.0 485.1L966.8 485.2L967.5 484.6L969.2 485.3L970.5 484.9" stroke="#ff0500"/>
<path d="M970.5 484.9L972.6 485.4L974.7 486.2L977.6 486.4L981.2 487.0" stroke="#e60000"/>
<path d="M981.2 487.0L984.7 487.3L988.7 487.8L993.7 488.8" stroke="#c70000"/>
<path d="M927.0 505.3L929.6 504.1L931.8 503.3L933.9 502.6L937.0 500.6L939.6 499.7L942.0 499.6L945.8 497.8L948.7 497.9L953.0 496.4L957.3 495.3L962.1 495.4L967.2 493.8L973.6 493.5" stroke="#c70000"/>
<path d="M973.6 493.5L980.3 492.5L987.5 492.0L996.0 490.3" stroke="#a80000"/>
<path d="M962.7 498.2L963.9 497.5L964.3 496.6" stroke="#c70000"/>
<path d="M964.3 496.6L964.1 495.9L964.4 495.8L965.5 494.5L965.8 494.4L966.9 493.8L967.2 492.7L968.0 493.2L969.1 492.2L969.3 491.8L971.2 492.2L972.4 492.0L973.0 491.8L974.8 491.7L976.7 491.4" stroke="#e60000"/>
<path d="M919.4 503.4L920.7 501.8L922.4 500.5L923.9 499.9L925.6 499.0L926.9 498.4" stroke="#ff2400"/>
<path d="M926.9 498.4L929.4 496.4L932.0 496.6L935.0 494.9L939.3 494.9L944.1 493.6L949.6 494.0L955.5 493.5L962.7 492.4L971.3 492.6L981.1 491.7" stroke="#ff4200"/>
<path d="M981.1 491.7L992.2 491.3" stroke="#ff2400"/>
<path d="M921.5 501.6L921.9 501.0L922.9 501.1L923.1 500.4L924.9 499.0L926.3 498.7L928.1 498.4L930.3 498.1L933.4 497.9L936.8 497.6L940.5 496.7L944.1 497.5L948.3 496.1" stroke="#e60000"/>
<path d="M948.3 496.1L953.5 496.4L959.0 495.6L965.3 495.8L971.6 494.8" stroke="#c70000"/>
<path d="M935.5 502.4L936.0 500.7L935.8 500.2L937.0 498.5L937.7 497.6L938.1 497.5L939.6 496.5" stroke="#ff2400"/>
<path d="M939.6 496.5L940.3 495.1L942.2 495.3L943.8 494.6L945.4 494.2L946.6 494.7L948.8 494.0L950.7 494.7L952.5 495.0" stroke="#ff4200"/>
<path d="M952.5 495.0L955.6 494.9L957.4 495.0" stroke="#ff2400"/>
<path d="M963.9 484.1L962.0 485.7L959.8 487.2" stroke="#ff0500"/>
<path d="M959.8 487.2L957.7 488.4L955.4 489.6L954.0 491.0L953.0 493.1L951.7 494.0L950.2 494.9" stroke="#e60000"/>
<path d="M950.2 494.9L949.8 495.4L950.1 497.1L950.7 496.9L951.6 498.2L953.2 498.9L955.7 499.2" stroke="#c70000"/>
<path d="M955.7 499.2L957.6 499.3L961.8 499.1" stroke="#a80000"/>
<path d="M942.4 492.1L941.8 492.8L941.0 492.7L941.0 492.9L941.3 492.8L940.9 493.8L941.4 493.0L942.1 493.3L942.9 494.4L943.5 493.9L944.6 494.8L946.9 495.1L948.9 495.3L950.2 496.4" stroke="#ff0500"/>
<path d="M950.2 496.4L953.0 496.8L956.0 498.0L958.7 499.5" stroke="#e60000"/>
<path d="M936.1 505.0L936.4 503.6L937.0 503.5L937.7 502.8L938.1 502.3L939.3 501.4L939.9 500.6L941.5 499.8L942.7 499.6L943.3 499.7L944.9 498.6L946.5 498.7L948.3 498.6L950.5 498.1L952.2 499.3L955.5 498.9L957.4 499.1" stroke="#ff0500"/>
</g>
<path d="M906 489L908 470L910.5 452L918 447L926 442L931 444L936 445" stroke="#c8d820" stroke-width="1.2" fill="none"/>
<path d="M905.5 503L907 475" stroke="#b06010" stroke-width="1.4" fill="none"/>
<path d="M926 442L931 444L945 440L960 436" stroke="#50f0a0" stroke-width="1.1" fill="none"/>
<path d="M937.5 516V530L920 528" stroke="#e02000" stroke-width="1.5" fill="none"/><path d="M930.5 512V523L918 526" stroke="#e83000" stroke-width="1.3" fill="none"/>
<circle cx="920.4" cy="516.4" r="2.8" fill="#0a0a0a"/>
<circle cx="925.1" cy="514.5" r="2.8" fill="#0a0a0a"/>
<circle cx="929.7" cy="512.6" r="2.8" fill="#0a0a0a"/>
<circle cx="934.4" cy="510.6" r="2.8" fill="#0a0a0a"/>
<circle cx="897.0" cy="512.0" r="2.8" fill="#0a0a0a"/>
<circle cx="900.9" cy="512.7" r="2.8" fill="#0a0a0a"/>
<circle cx="904.8" cy="513.5" r="2.8" fill="#0a0a0a"/>
<circle cx="908.8" cy="514.2" r="2.8" fill="#0a0a0a"/>
<circle cx="912.7" cy="514.9" r="2.8" fill="#0a0a0a"/>
<circle cx="916.6" cy="515.7" r="2.8" fill="#0a0a0a"/>
<circle cx="920.5" cy="516.4" r="2.8" fill="#0a0a0a"/>
<circle cx="835.9" cy="535.1" r="3.5" fill="#ff0d0d"/>
<circle cx="842.9" cy="542.1" r="3.5" fill="#ff0d0d"/>
<circle cx="847.5" cy="540.1" r="3.5" fill="#ff0d0d"/>
<circle cx="852.1" cy="542.1" r="3.5" fill="#ff0d0d"/>
<circle cx="858.0" cy="540.8" r="3.5" fill="#ff0d0d"/>
<circle cx="862.7" cy="537.5" r="3.5" fill="#ff0d0d"/>
<circle cx="870.0" cy="541.5" r="3.5" fill="#ff0d0d"/>
<circle cx="875.9" cy="537.5" r="3.5" fill="#ff0d0d"/>
<circle cx="884.5" cy="533.5" r="3.5" fill="#ff0d0d"/>
<circle cx="891.8" cy="529.5" r="3.5" fill="#ff0d0d"/>
<circle cx="893.1" cy="524.9" r="3.5" fill="#ff0d0d"/>
<circle cx="897.1" cy="539.5" r="3.5" fill="#ff0d0d"/>
<circle cx="901.8" cy="528.2" r="3.5" fill="#ff0d0d"/>
<circle cx="908.4" cy="534.2" r="3.5" fill="#ff0d0d"/>
<circle cx="917.6" cy="532.9" r="3.5" fill="#ff0d0d"/>
<circle cx="866.0" cy="539.5" r="3.5" fill="#ff0d0d"/>
<circle cx="880.0" cy="536.0" r="3.5" fill="#ff0d0d"/>
<circle cx="888.0" cy="531.5" r="3.5" fill="#ff0d0d"/>
<circle cx="904.0" cy="531.0" r="3.5" fill="#ff0d0d"/>
<circle cx="912.0" cy="536.0" r="3.5" fill="#ff0d0d"/>
<circle cx="855.0" cy="538.5" r="3.5" fill="#ff0d0d"/>
<circle cx="839.5" cy="539.0" r="3.5" fill="#ff0d0d"/>
<circle cx="896.0" cy="533.0" r="3.5" fill="#ff0d0d"/>
<circle cx="873.0" cy="533.0" r="3.5" fill="#ff0d0d"/>
<circle cx="1075.0" cy="425.0" r="3.5" fill="#ff0d0d"/>
<circle cx="1077.0" cy="438.8" r="3.5" fill="#ff0d0d"/>
<circle cx="1024.0" cy="440.0" r="3.5" fill="#ff0d0d"/>
<circle cx="1117.0" cy="443.4" r="3.5" fill="#ff0d0d"/>
<circle cx="1085.0" cy="447.0" r="3.5" fill="#ff0d0d"/>
<circle cx="1022.5" cy="449.0" r="3.5" fill="#ff0d0d"/>
<circle cx="1068.0" cy="449.0" r="3.5" fill="#ff0d0d"/>
<circle cx="1014.4" cy="449.7" r="3.5" fill="#ff0d0d"/>
<circle cx="1109.6" cy="449.7" r="3.5" fill="#ff0d0d"/>
<circle cx="1123.0" cy="451.0" r="3.5" fill="#ff0d0d"/>
<circle cx="1040.0" cy="454.3" r="3.5" fill="#ff0d0d"/>
<circle cx="1060.6" cy="456.5" r="3.5" fill="#ff0d0d"/>
<circle cx="1067.0" cy="457.0" r="3.5" fill="#ff0d0d"/>
<circle cx="1034.8" cy="457.9" r="3.5" fill="#ff0d0d"/>
<circle cx="1126.8" cy="458.7" r="3.5" fill="#ff0d0d"/>
<circle cx="1028.0" cy="458.7" r="3.5" fill="#ff0d0d"/>
<circle cx="1098.7" cy="459.0" r="3.5" fill="#ff0d0d"/>
<circle cx="1112.0" cy="459.0" r="3.5" fill="#ff0d0d"/>
<circle cx="1053.8" cy="460.6" r="3.5" fill="#ff0d0d"/>
<circle cx="1092.0" cy="462.0" r="3.5" fill="#ff0d0d"/>
<circle cx="1046.0" cy="463.0" r="3.5" fill="#ff0d0d"/>
<circle cx="1119.0" cy="466.0" r="3.5" fill="#ff0d0d"/>
<circle cx="1073.0" cy="466.0" r="3.5" fill="#ff0d0d"/>
<circle cx="1053.8" cy="466.0" r="3.5" fill="#ff0d0d"/>
<circle cx="1100.0" cy="466.0" r="3.5" fill="#ff0d0d"/>
<circle cx="1030.0" cy="466.0" r="3.5" fill="#ff0d0d"/>
<circle cx="1083.8" cy="468.7" r="3.5" fill="#ff0d0d"/>
<circle cx="1108.0" cy="469.6" r="3.5" fill="#ff0d0d"/>
<circle cx="1058.0" cy="470.0" r="3.5" fill="#ff0d0d"/>
<circle cx="1034.8" cy="471.5" r="3.5" fill="#ff0d0d"/>
<circle cx="1082.4" cy="472.8" r="3.5" fill="#ff0d0d"/>
<circle cx="1051.0" cy="474.0" r="3.5" fill="#ff0d0d"/>
<circle cx="1073.0" cy="477.7" r="3.5" fill="#ff0d0d"/>
<circle cx="1119.0" cy="478.0" r="3.5" fill="#ff0d0d"/>
<circle cx="1041.6" cy="478.3" r="3.5" fill="#ff0d0d"/>
<circle cx="1021.0" cy="479.6" r="3.5" fill="#ff0d0d"/>
<circle cx="1064.7" cy="480.0" r="3.5" fill="#ff0d0d"/>
<circle cx="1013.0" cy="485.0" r="3.5" fill="#ff0d0d"/>
<circle cx="1003.0" cy="487.0" r="3.5" fill="#ff0d0d"/>
<circle cx="991.8" cy="491.9" r="3.5" fill="#ff0d0d"/>
<circle cx="893.8" cy="482.6" r="3.5" fill="#ff0d0d"/>
<circle cx="899.8" cy="488.5" r="3.5" fill="#ff0d0d"/>
<circle cx="898.4" cy="483.9" r="3.5" fill="#ff0d0d"/>
<circle cx="892.5" cy="493.8" r="3.5" fill="#ff0d0d"/>
<circle cx="883.2" cy="496.5" r="3.5" fill="#ff0d0d"/>
<circle cx="874.0" cy="505.0" r="3.5" fill="#ff0d0d"/>
<circle cx="938.1" cy="515.7" r="3.5" fill="#ff0d0d"/>
<circle cx="916.3" cy="487.5" r="3.5" fill="#ff0d0d"/>
<circle cx="970.0" cy="497.0" r="3.5" fill="#ff0d0d"/>
<circle cx="992.0" cy="495.0" r="3.5" fill="#ff0d0d"/>
<path d="M728.5 581.0L728.5 430.1" stroke="#000" stroke-width="1.2" fill="none" />
<path d="M728.5 581.0L987.0 631.5" stroke="#000" stroke-width="1.2" fill="none" />
<path d="M987.0 631.5L1154.5 555.3" stroke="#000" stroke-width="1.2" fill="none" />
<path d="M728.5 581.0L720.0 579.8" stroke="#000" stroke-width="1.1" fill="none" />
<text x="711.8" y="583.7" font-size="13.6" text-anchor="end" font-family="Liberation Sans, sans-serif" fill="#000">0</text>
<path d="M728.5 559.5L720.0 558.2" stroke="#000" stroke-width="1.1" fill="none" />
<text x="711.8" y="562.1" font-size="13.6" text-anchor="end" font-family="Liberation Sans, sans-serif" fill="#000">2000</text>
<path d="M728.5 537.9L720.0 536.7" stroke="#000" stroke-width="1.1" fill="none" />
<text x="711.8" y="540.6" font-size="13.6" text-anchor="end" font-family="Liberation Sans, sans-serif" fill="#000">4000</text>
<path d="M728.5 516.4L720.0 515.1" stroke="#000" stroke-width="1.1" fill="none" />
<text x="711.8" y="519.0" font-size="13.6" text-anchor="end" font-family="Liberation Sans, sans-serif" fill="#000">6000</text>
<path d="M728.5 494.8L720.0 493.6" stroke="#000" stroke-width="1.1" fill="none" />
<text x="711.8" y="497.5" font-size="13.6" text-anchor="end" font-family="Liberation Sans, sans-serif" fill="#000">8000</text>
<path d="M728.5 473.2L720.0 472.1" stroke="#000" stroke-width="1.1" fill="none" />
<text x="711.8" y="475.9" font-size="13.6" text-anchor="end" font-family="Liberation Sans, sans-serif" fill="#000">10000</text>
<path d="M728.5 451.7L720.0 450.5" stroke="#000" stroke-width="1.1" fill="none" />
<text x="711.8" y="454.4" font-size="13.6" text-anchor="end" font-family="Liberation Sans, sans-serif" fill="#000">12000</text>
<path d="M728.5 430.1L720.0 428.9" stroke="#000" stroke-width="1.1" fill="none" />
<text x="711.8" y="432.8" font-size="13.6" text-anchor="end" font-family="Liberation Sans, sans-serif" fill="#000">14000</text>
<path d="M728.5 581.0L722.5 583.9" stroke="#000" stroke-width="1.1" fill="none" />
<text x="709.7" y="597.9" font-size="13.6" text-anchor="middle" font-family="Liberation Sans, sans-serif" fill="#000">100</text>
<path d="M771.6 589.4L765.6 592.3" stroke="#000" stroke-width="1.1" fill="none" />
<text x="752.8" y="606.3" font-size="13.6" text-anchor="middle" font-family="Liberation Sans, sans-serif" fill="#000">105</text>
<path d="M814.7 597.8L808.7 600.7" stroke="#000" stroke-width="1.1" fill="none" />
<text x="795.9" y="614.7" font-size="13.6" text-anchor="middle" font-family="Liberation Sans, sans-serif" fill="#000">110</text>
<path d="M857.8 606.2L851.8 609.1" stroke="#000" stroke-width="1.1" fill="none" />
<text x="839.0" y="623.1" font-size="13.6" text-anchor="middle" font-family="Liberation Sans, sans-serif" fill="#000">115</text>
<path d="M900.8 614.7L894.8 617.6" stroke="#000" stroke-width="1.1" fill="none" />
<text x="882.0" y="631.6" font-size="13.6" text-anchor="middle" font-family="Liberation Sans, sans-serif" fill="#000">120</text>
<path d="M943.9 623.1L937.9 626.0" stroke="#000" stroke-width="1.1" fill="none" />
<text x="925.1" y="640.0" font-size="13.6" text-anchor="middle" font-family="Liberation Sans, sans-serif" fill="#000">125</text>
<path d="M987.0 631.5L981.0 634.4" stroke="#000" stroke-width="1.1" fill="none" />
<text x="968.2" y="648.4" font-size="13.6" text-anchor="middle" font-family="Liberation Sans, sans-serif" fill="#000">130</text>
<path d="M987.0 631.5L995.5 633.2" stroke="#000" stroke-width="1.1" fill="none" />
<text x="1004.2" y="646.9" font-size="13.6" text-anchor="middle" font-family="Liberation Sans, sans-serif" fill="#000">25</text>
<path d="M1020.5 616.3L1029.0 618.0" stroke="#000" stroke-width="1.1" fill="none" />
<text x="1037.7" y="631.7" font-size="13.6" text-anchor="middle" font-family="Liberation Sans, sans-serif" fill="#000">30</text>
<path d="M1054.0 601.0L1062.5 602.7" stroke="#000" stroke-width="1.1" fill="none" />
<text x="1071.2" y="616.4" font-size="13.6" text-anchor="middle" font-family="Liberation Sans, sans-serif" fill="#000">35</text>
<path d="M1087.5 585.8L1096.0 587.5" stroke="#000" stroke-width="1.1" fill="none" />
<text x="1104.7" y="601.2" font-size="13.6" text-anchor="middle" font-family="Liberation Sans, sans-serif" fill="#000">40</text>
<path d="M1121.0 570.5L1129.5 572.2" stroke="#000" stroke-width="1.1" fill="none" />
<text x="1138.2" y="585.9" font-size="13.6" text-anchor="middle" font-family="Liberation Sans, sans-serif" fill="#000">45</text>
<path d="M1154.5 555.3L1163.0 557.0" stroke="#000" stroke-width="1.1" fill="none" />
<text x="1171.7" y="570.7" font-size="13.6" text-anchor="middle" font-family="Liberation Sans, sans-serif" fill="#000">50</text>
<text x="0" y="0" font-size="13.6" text-anchor="middle" transform="translate(843.5,653) rotate(11)" font-family="Liberation Sans, sans-serif" fill="#000">Longitude</text>
<text x="0" y="0" font-size="13.6" text-anchor="middle" transform="translate(1095.5,627.5) rotate(-24.5)" font-family="Liberation Sans, sans-serif" fill="#000">Latitude</text>
<text x="0" y="0" font-size="13.6" text-anchor="middle" transform="translate(662,505.5) rotate(-90)" font-family="Liberation Sans, sans-serif" fill="#000">Height (m)</text>
<rect x="1187.5" y="571.70" width="10.5" height="9.60" fill="#0000ae"/>
<rect x="1187.5" y="562.40" width="10.5" height="9.60" fill="#0000e3"/>
<rect x="1187.5" y="553.10" width="10.5" height="9.60" fill="#0018ff"/>
<rect x="1187.5" y="543.80" width="10.5" height="9.60" fill="#004dff"/>
<rect x="1187.5" y="534.50" width="10.5" height="9.60" fill="#0082ff"/>
<rect x="1187.5" y="525.20" width="10.5" height="9.60" fill="#00b6ff"/>
<rect x="1187.5" y="515.90" width="10.5" height="9.60" fill="#00ebff"/>
<rect x="1187.5" y="506.60" width="10.5" height="9.60" fill="#20ffdf"/>
<rect x="1187.5" y="497.30" width="10.5" height="9.60" fill="#55ffaa"/>
<rect x="1187.5" y="488.00" width="10.5" height="9.60" fill="#8aff75"/>
<rect x="1187.5" y="478.70" width="10.5" height="9.60" fill="#beff41"/>
<rect x="1187.5" y="469.40" width="10.5" height="9.60" fill="#f3ff0c"/>
<rect x="1187.5" y="460.10" width="10.5" height="9.60" fill="#ffd600"/>
<rect x="1187.5" y="450.80" width="10.5" height="9.60" fill="#ffa200"/>
<rect x="1187.5" y="441.50" width="10.5" height="9.60" fill="#ff6d00"/>
<rect x="1187.5" y="432.20" width="10.5" height="9.60" fill="#ff3900"/>
<rect x="1187.5" y="422.90" width="10.5" height="9.60" fill="#ff0400"/>
<rect x="1187.5" y="413.60" width="10.5" height="9.60" fill="#ce0000"/>
<rect x="1187.5" y="404.30" width="10.5" height="9.60" fill="#9a0000"/>
<rect x="1187.5" y="404.3" width="10.5" height="176.7" fill="none" stroke="#000" stroke-width="1"/>
<path d="M1187.5 571.7L1198.0 571.7" stroke="#000" stroke-width="1" fill="none" />
<text x="1202" y="575.9" font-size="13.6" font-family="Liberation Sans, sans-serif" fill="#000">10</text>
<path d="M1187.5 553.1L1198.0 553.1" stroke="#000" stroke-width="1" fill="none" />
<text x="1202" y="557.3" font-size="13.6" font-family="Liberation Sans, sans-serif" fill="#000">20</text>
<path d="M1187.5 534.5L1198.0 534.5" stroke="#000" stroke-width="1" fill="none" />
<text x="1202" y="538.7" font-size="13.6" font-family="Liberation Sans, sans-serif" fill="#000">30</text>
<path d="M1187.5 515.9L1198.0 515.9" stroke="#000" stroke-width="1" fill="none" />
<text x="1202" y="520.1" font-size="13.6" font-family="Liberation Sans, sans-serif" fill="#000">40</text>
<path d="M1187.5 497.3L1198.0 497.3" stroke="#000" stroke-width="1" fill="none" />
<text x="1202" y="501.5" font-size="13.6" font-family="Liberation Sans, sans-serif" fill="#000">50</text>
<path d="M1187.5 478.7L1198.0 478.7" stroke="#000" stroke-width="1" fill="none" />
<text x="1202" y="482.9" font-size="13.6" font-family="Liberation Sans, sans-serif" fill="#000">60</text>
<path d="M1187.5 460.1L1198.0 460.1" stroke="#000" stroke-width="1" fill="none" />
<text x="1202" y="464.3" font-size="13.6" font-family="Liberation Sans, sans-serif" fill="#000">70</text>
<path d="M1187.5 441.5L1198.0 441.5" stroke="#000" stroke-width="1" fill="none" />
<text x="1202" y="445.7" font-size="13.6" font-family="Liberation Sans, sans-serif" fill="#000">80</text>
<path d="M1187.5 422.9L1198.0 422.9" stroke="#000" stroke-width="1" fill="none" />
<text x="1202" y="427.1" font-size="13.6" font-family="Liberation Sans, sans-serif" fill="#000">90</text>
<text x="0" y="0" font-size="13.6" text-anchor="middle" transform="translate(1234.2,493) rotate(-90)" font-family="Liberation Sans, sans-serif" fill="#000">RH (%)</text></svg>
</body></html>
